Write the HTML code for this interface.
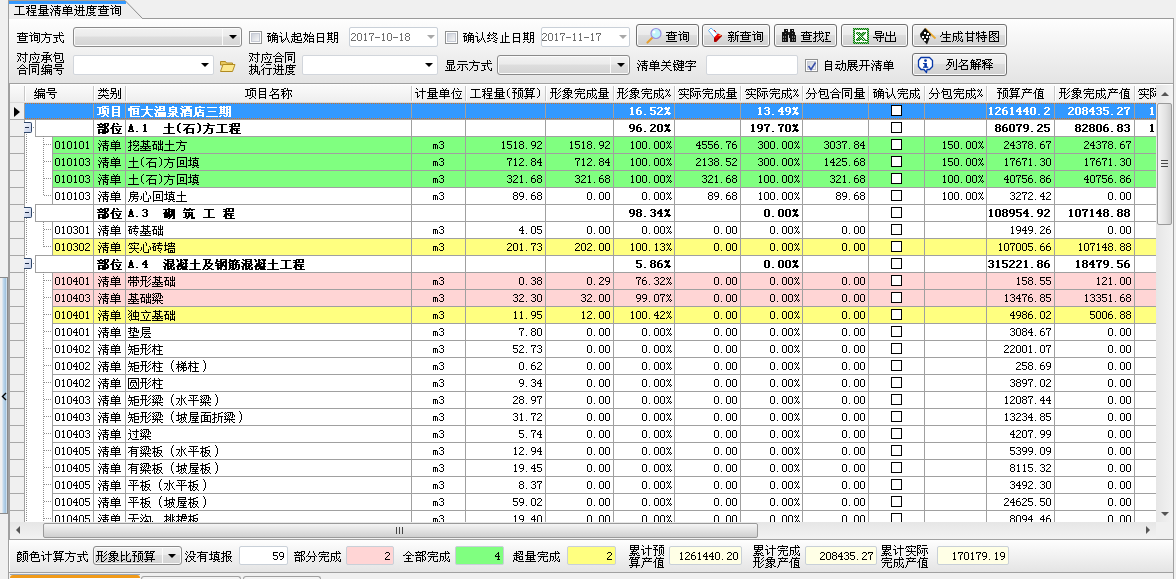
<!DOCTYPE html><html><head><meta charset="utf-8"><title>工程量清单进度查询</title><style>
*{margin:0;padding:0;box-sizing:border-box}
html,body{width:1176px;height:579px;overflow:hidden;background:#f0f0f0;font-family:"Liberation Sans",sans-serif;font-size:12px;line-height:12px;color:#000}
.tx{position:absolute;height:12px;white-space:nowrap;color:transparent;font-size:12px;line-height:12px;overflow:visible}
.tx svg{position:absolute;left:0;top:0;overflow:visible;shape-rendering:crispEdges}
.cb{position:absolute;width:13px;height:13px;border:1px solid #8e8f8f;background:#fff}
.cb:after{content:"";position:absolute;left:1px;top:1px;right:1px;bottom:1px;border:1px solid #c6cad4;background:linear-gradient(135deg,#cdd1da,#f6f6f6)}
.btn{position:absolute;border:1px solid #707070;border-radius:3px;background:linear-gradient(#f2f2f2 0%,#ebebeb 45%,#dddddd 50%,#cfcfcf 100%);box-shadow:inset 0 0 0 1px #fcfcfc}
.cmbg{position:absolute;border:1px solid #8a8a8a;border-radius:3px;background:linear-gradient(#f2f2f2 0%,#ebebeb 45%,#dddddd 50%,#d4d4d4 100%);box-shadow:inset 0 0 0 1px #fbfbfb}
.inp{position:absolute;border:1px solid #c9d0d8;border-radius:2px;background:#fff}
.arr{position:absolute;width:0;height:0;border-left:4px solid transparent;border-right:4px solid transparent;border-top:4px solid #000}
</style></head><body>
<svg width="0" height="0" style="position:absolute;left:0;top:0"><defs><path id="r5de5" d="M1 2h9v1h-9zM5 3h1v1h-1zM5 4h1v1h-1zM5 5h1v1h-1zM5 6h1v1h-1zM5 7h1v1h-1zM5 8h1v1h-1zM5 9h1v1h-1zM0 10h11v1h-11z"/><path id="r7a0b" d="M3 1h1v1h-1zM5 1h5v1h-5zM0 2h3v1h-3zM5 2h1v1h-1zM9 2h1v1h-1zM2 3h1v1h-1zM5 3h1v1h-1zM9 3h1v1h-1zM0 4h4v1h-4zM5 4h5v1h-5zM2 5h1v1h-1zM2 6h2v1h-2zM5 6h5v1h-5zM1 7h2v1h-2zM4 7h1v1h-1zM7 7h1v1h-1zM1 8h2v1h-2zM5 8h5v1h-5zM0 9h1v1h-1zM2 9h1v1h-1zM7 9h1v1h-1zM2 10h1v1h-1zM7 10h1v1h-1zM2 11h1v1h-1zM4 11h7v1h-7z"/><path id="r91cf" d="M2 1h7v1h-7zM2 2h1v1h-1zM8 2h1v1h-1zM2 3h7v1h-7zM2 4h1v1h-1zM8 4h1v1h-1zM0 5h11v1h-11zM2 6h1v1h-1zM5 6h1v1h-1zM8 6h1v1h-1zM2 7h7v1h-7zM2 8h1v1h-1zM5 8h1v1h-1zM8 8h1v1h-1zM1 9h9v1h-9zM5 10h1v1h-1zM0 11h11v1h-11z"/><path id="r6e05" d="M1 1h1v1h-1zM7 1h1v1h-1zM2 2h1v1h-1zM4 2h7v1h-7zM7 3h1v1h-1zM0 4h1v1h-1zM3 4h1v1h-1zM5 4h5v1h-5zM1 5h1v1h-1zM3 5h1v1h-1zM7 5h1v1h-1zM2 6h1v1h-1zM4 6h7v1h-7zM2 7h1v1h-1zM5 7h1v1h-1zM9 7h1v1h-1zM0 8h2v1h-2zM5 8h3v1h-3zM9 8h1v1h-1zM1 9h1v1h-1zM5 9h1v1h-1zM7 9h3v1h-3zM1 10h1v1h-1zM5 10h1v1h-1zM9 10h1v1h-1zM1 11h1v1h-1zM5 11h1v1h-1zM8 11h2v1h-2z"/><path id="r5355" d="M3 1h1v1h-1zM7 1h1v1h-1zM4 2h1v1h-1zM6 2h1v1h-1zM1 3h9v1h-9zM1 4h1v1h-1zM5 4h1v1h-1zM9 4h1v1h-1zM1 5h9v1h-9zM1 6h1v1h-1zM5 6h1v1h-1zM9 6h1v1h-1zM1 7h9v1h-9zM5 8h1v1h-1zM0 9h11v1h-11zM5 10h1v1h-1zM5 11h1v1h-1z"/><path id="r8fdb" d="M1 1h1v1h-1zM5 1h1v1h-1zM8 1h1v1h-1zM2 2h1v1h-1zM5 2h1v1h-1zM8 2h1v1h-1zM2 3h1v1h-1zM4 3h6v1h-6zM5 4h1v1h-1zM8 4h1v1h-1zM0 5h3v1h-3zM5 5h1v1h-1zM8 5h1v1h-1zM2 6h9v1h-9zM2 7h1v1h-1zM5 7h1v1h-1zM8 7h1v1h-1zM2 8h1v1h-1zM5 8h1v1h-1zM8 8h1v1h-1zM2 9h1v1h-1zM4 9h1v1h-1zM8 9h1v1h-1zM1 10h1v1h-1zM3 10h1v1h-1zM8 10h1v1h-1zM0 11h1v1h-1zM4 11h7v1h-7z"/><path id="r5ea6" d="M5 1h1v1h-1zM1 2h10v1h-10zM1 3h1v1h-1zM4 3h1v1h-1zM7 3h1v1h-1zM1 4h9v1h-9zM1 5h1v1h-1zM4 5h1v1h-1zM7 5h1v1h-1zM1 6h1v1h-1zM4 6h4v1h-4zM1 7h1v1h-1zM1 8h1v1h-1zM3 8h6v1h-6zM1 9h1v1h-1zM4 9h1v1h-1zM7 9h1v1h-1zM0 10h1v1h-1zM5 10h2v1h-2zM0 11h1v1h-1zM2 11h3v1h-3zM7 11h3v1h-3z"/><path id="r67e5" d="M5 1h1v1h-1zM0 2h11v1h-11zM3 3h1v1h-1zM5 3h1v1h-1zM7 3h1v1h-1zM2 4h1v1h-1zM5 4h1v1h-1zM8 4h1v1h-1zM0 5h11v1h-11zM2 6h1v1h-1zM8 6h1v1h-1zM2 7h7v1h-7zM2 8h1v1h-1zM8 8h1v1h-1zM2 9h7v1h-7zM0 11h11v1h-11z"/><path id="r8be2" d="M1 1h1v1h-1zM5 1h1v1h-1zM2 2h1v1h-1zM5 2h6v1h-6zM4 3h1v1h-1zM10 3h1v1h-1zM0 4h4v1h-4zM5 4h4v1h-4zM10 4h1v1h-1zM2 5h1v1h-1zM5 5h1v1h-1zM8 5h1v1h-1zM10 5h1v1h-1zM2 6h1v1h-1zM5 6h4v1h-4zM10 6h1v1h-1zM2 7h1v1h-1zM5 7h1v1h-1zM8 7h1v1h-1zM10 7h1v1h-1zM2 8h1v1h-1zM5 8h1v1h-1zM8 8h1v1h-1zM10 8h1v1h-1zM2 9h2v1h-2zM5 9h4v1h-4zM10 9h1v1h-1zM2 10h1v1h-1zM10 10h1v1h-1zM8 11h2v1h-2z"/><path id="r65b9" d="M4 1h1v1h-1zM5 2h1v1h-1zM0 3h11v1h-11zM4 4h1v1h-1zM4 5h1v1h-1zM4 6h5v1h-5zM3 7h1v1h-1zM8 7h1v1h-1zM3 8h1v1h-1zM8 8h1v1h-1zM2 9h1v1h-1zM8 9h1v1h-1zM1 10h1v1h-1zM8 10h1v1h-1zM0 11h1v1h-1zM5 11h3v1h-3z"/><path id="r5f0f" d="M6 1h1v1h-1zM8 1h1v1h-1zM6 2h1v1h-1zM9 2h1v1h-1zM6 3h1v1h-1zM0 4h11v1h-11zM6 5h1v1h-1zM1 6h4v1h-4zM6 6h1v1h-1zM3 7h1v1h-1zM6 7h1v1h-1zM3 8h1v1h-1zM7 8h1v1h-1zM3 9h1v1h-1zM7 9h1v1h-1zM10 9h1v1h-1zM3 10h2v1h-2zM8 10h1v1h-1zM10 10h1v1h-1zM0 11h3v1h-3zM9 11h2v1h-2z"/><path id="r786e" d="M6 1h1v1h-1zM0 2h4v1h-4zM6 2h4v1h-4zM2 3h1v1h-1zM5 3h1v1h-1zM8 3h1v1h-1zM1 4h1v1h-1zM4 4h7v1h-7zM0 5h4v1h-4zM5 5h1v1h-1zM7 5h1v1h-1zM10 5h1v1h-1zM1 6h1v1h-1zM3 6h1v1h-1zM5 6h6v1h-6zM1 7h1v1h-1zM3 7h1v1h-1zM5 7h1v1h-1zM7 7h1v1h-1zM10 7h1v1h-1zM1 8h1v1h-1zM3 8h1v1h-1zM5 8h6v1h-6zM1 9h3v1h-3zM5 9h1v1h-1zM7 9h1v1h-1zM10 9h1v1h-1zM1 10h1v1h-1zM5 10h1v1h-1zM7 10h1v1h-1zM10 10h1v1h-1zM4 11h1v1h-1zM9 11h2v1h-2z"/><path id="r8ba4" d="M1 1h1v1h-1zM7 1h1v1h-1zM2 2h1v1h-1zM7 2h1v1h-1zM7 3h1v1h-1zM7 4h1v1h-1zM0 5h3v1h-3zM7 5h1v1h-1zM2 6h1v1h-1zM7 6h1v1h-1zM2 7h1v1h-1zM6 7h1v1h-1zM8 7h1v1h-1zM2 8h1v1h-1zM4 8h1v1h-1zM6 8h1v1h-1zM8 8h1v1h-1zM2 9h2v1h-2zM5 9h1v1h-1zM9 9h1v1h-1zM2 10h1v1h-1zM4 10h1v1h-1zM9 10h1v1h-1zM3 11h1v1h-1zM10 11h1v1h-1z"/><path id="r8d77" d="M3 1h1v1h-1zM3 2h1v1h-1zM6 2h4v1h-4zM1 3h5v1h-5zM9 3h1v1h-1zM3 4h1v1h-1zM9 4h1v1h-1zM0 5h10v1h-10zM3 6h1v1h-1zM6 6h1v1h-1zM1 7h1v1h-1zM3 7h1v1h-1zM6 7h1v1h-1zM10 7h1v1h-1zM1 8h1v1h-1zM3 8h4v1h-4zM10 8h1v1h-1zM1 9h1v1h-1zM3 9h1v1h-1zM6 9h5v1h-5zM0 10h1v1h-1zM2 10h2v1h-2zM0 11h1v1h-1zM4 11h7v1h-7z"/><path id="r59cb" d="M2 1h1v1h-1zM7 1h1v1h-1zM2 2h1v1h-1zM7 2h1v1h-1zM0 3h5v1h-5zM6 3h1v1h-1zM9 3h1v1h-1zM2 4h1v1h-1zM4 4h1v1h-1zM6 4h1v1h-1zM10 4h1v1h-1zM2 5h1v1h-1zM4 5h7v1h-7zM1 6h1v1h-1zM4 6h1v1h-1zM1 7h1v1h-1zM3 7h1v1h-1zM6 7h5v1h-5zM2 8h2v1h-2zM6 8h1v1h-1zM10 8h1v1h-1zM2 9h1v1h-1zM4 9h1v1h-1zM6 9h1v1h-1zM10 9h1v1h-1zM1 10h1v1h-1zM4 10h1v1h-1zM6 10h5v1h-5zM0 11h1v1h-1zM6 11h1v1h-1zM10 11h1v1h-1z"/><path id="r65e5" d="M2 2h7v1h-7zM2 3h1v1h-1zM8 3h1v1h-1zM2 4h1v1h-1zM8 4h1v1h-1zM2 5h1v1h-1zM8 5h1v1h-1zM2 6h7v1h-7zM2 7h1v1h-1zM8 7h1v1h-1zM2 8h1v1h-1zM8 8h1v1h-1zM2 9h1v1h-1zM8 9h1v1h-1zM2 10h7v1h-7zM2 11h1v1h-1zM8 11h1v1h-1z"/><path id="r671f" d="M1 1h1v1h-1zM4 1h1v1h-1zM7 1h4v1h-4zM0 2h6v1h-6zM7 2h1v1h-1zM10 2h1v1h-1zM1 3h1v1h-1zM4 3h1v1h-1zM7 3h1v1h-1zM10 3h1v1h-1zM1 4h4v1h-4zM7 4h4v1h-4zM1 5h1v1h-1zM4 5h1v1h-1zM7 5h1v1h-1zM10 5h1v1h-1zM1 6h4v1h-4zM7 6h1v1h-1zM10 6h1v1h-1zM1 7h1v1h-1zM4 7h1v1h-1zM7 7h4v1h-4zM0 8h6v1h-6zM7 8h1v1h-1zM10 8h1v1h-1zM7 9h1v1h-1zM10 9h1v1h-1zM1 10h1v1h-1zM4 10h1v1h-1zM7 10h1v1h-1zM10 10h1v1h-1zM0 11h1v1h-1zM5 11h2v1h-2zM9 11h2v1h-2z"/><path id="r32" d="M1 2h3v1h-3zM0 3h1v1h-1zM4 3h1v1h-1zM4 4h1v1h-1zM3 5h1v1h-1zM2 6h1v1h-1zM1 7h1v1h-1zM0 8h1v1h-1zM0 9h5v1h-5z"/><path id="r30" d="M1 2h3v1h-3zM0 3h1v1h-1zM4 3h1v1h-1zM0 4h1v1h-1zM4 4h1v1h-1zM0 5h1v1h-1zM4 5h1v1h-1zM0 6h1v1h-1zM4 6h1v1h-1zM0 7h1v1h-1zM4 7h1v1h-1zM0 8h1v1h-1zM4 8h1v1h-1zM1 9h3v1h-3z"/><path id="r31" d="M2 2h1v1h-1zM1 3h2v1h-2zM2 4h1v1h-1zM2 5h1v1h-1zM2 6h1v1h-1zM2 7h1v1h-1zM2 8h1v1h-1zM1 9h3v1h-3z"/><path id="r37" d="M0 2h5v1h-5zM0 3h1v1h-1zM4 3h1v1h-1zM3 4h1v1h-1zM2 5h1v1h-1zM2 6h1v1h-1zM2 7h1v1h-1zM2 8h1v1h-1zM2 9h1v1h-1z"/><path id="r2d" d="M0 6h5v1h-5z"/><path id="r38" d="M1 2h3v1h-3zM0 3h1v1h-1zM4 3h1v1h-1zM0 4h1v1h-1zM4 4h1v1h-1zM1 5h3v1h-3zM0 6h1v1h-1zM4 6h1v1h-1zM0 7h1v1h-1zM4 7h1v1h-1zM0 8h1v1h-1zM4 8h1v1h-1zM1 9h3v1h-3z"/><path id="r7ec8" d="M2 1h1v1h-1zM6 1h1v1h-1zM2 2h1v1h-1zM6 2h4v1h-4zM1 3h1v1h-1zM3 3h1v1h-1zM5 3h1v1h-1zM9 3h1v1h-1zM0 4h3v1h-3zM4 4h1v1h-1zM6 4h1v1h-1zM8 4h1v1h-1zM2 5h1v1h-1zM7 5h1v1h-1zM1 6h1v1h-1zM6 6h1v1h-1zM8 6h1v1h-1zM0 7h3v1h-3zM4 7h2v1h-2zM9 7h2v1h-2zM7 8h1v1h-1zM2 9h2v1h-2zM8 9h2v1h-2zM0 10h2v1h-2zM6 10h2v1h-2zM8 11h2v1h-2z"/><path id="r6b62" d="M6 1h1v1h-1zM6 2h1v1h-1zM6 3h1v1h-1zM3 4h1v1h-1zM6 4h1v1h-1zM3 5h1v1h-1zM6 5h4v1h-4zM3 6h1v1h-1zM6 6h1v1h-1zM3 7h1v1h-1zM6 7h1v1h-1zM3 8h1v1h-1zM6 8h1v1h-1zM3 9h1v1h-1zM6 9h1v1h-1zM3 10h1v1h-1zM6 10h1v1h-1zM1 11h10v1h-10z"/><path id="r65b0" d="M3 1h1v1h-1zM9 1h2v1h-2zM0 2h6v1h-6zM7 2h2v1h-2zM1 3h1v1h-1zM5 3h1v1h-1zM7 3h1v1h-1zM2 4h1v1h-1zM4 4h1v1h-1zM7 4h1v1h-1zM0 5h6v1h-6zM7 5h4v1h-4zM3 6h1v1h-1zM7 6h1v1h-1zM9 6h1v1h-1zM0 7h6v1h-6zM7 7h1v1h-1zM9 7h1v1h-1zM3 8h1v1h-1zM7 8h1v1h-1zM9 8h1v1h-1zM1 9h1v1h-1zM3 9h1v1h-1zM5 9h1v1h-1zM7 9h1v1h-1zM9 9h1v1h-1zM0 10h1v1h-1zM3 10h1v1h-1zM6 10h1v1h-1zM9 10h1v1h-1zM2 11h2v1h-2zM5 11h1v1h-1zM9 11h1v1h-1z"/><path id="r627e" d="M2 1h1v1h-1zM6 1h1v1h-1zM8 1h1v1h-1zM2 2h1v1h-1zM6 2h1v1h-1zM9 2h1v1h-1zM0 3h11v1h-11zM2 4h1v1h-1zM6 4h1v1h-1zM2 5h1v1h-1zM4 5h1v1h-1zM6 5h1v1h-1zM9 5h1v1h-1zM2 6h2v1h-2zM6 6h1v1h-1zM9 6h1v1h-1zM1 7h2v1h-2zM6 7h1v1h-1zM8 7h1v1h-1zM0 8h1v1h-1zM2 8h1v1h-1zM7 8h1v1h-1zM2 9h1v1h-1zM6 9h2v1h-2zM10 9h1v1h-1zM2 10h1v1h-1zM5 10h1v1h-1zM8 10h1v1h-1zM10 10h1v1h-1zM0 11h3v1h-3zM4 11h1v1h-1zM9 11h2v1h-2z"/><path id="r46" d="M0 2h5v1h-5zM1 3h1v1h-1zM4 3h1v1h-1zM1 4h1v1h-1zM1 5h3v1h-3zM1 6h1v1h-1zM1 7h1v1h-1zM1 8h1v1h-1zM0 9h3v1h-3z"/><path id="r5bfc" d="M2 1h7v1h-7zM2 2h1v1h-1zM8 2h1v1h-1zM2 3h7v1h-7zM10 3h1v1h-1zM2 4h1v1h-1zM10 4h1v1h-1zM3 5h8v1h-8zM7 6h1v1h-1zM0 7h11v1h-11zM3 8h1v1h-1zM7 8h1v1h-1zM4 9h1v1h-1zM7 9h1v1h-1zM4 10h1v1h-1zM7 10h1v1h-1zM6 11h2v1h-2z"/><path id="r51fa" d="M5 1h1v1h-1zM1 2h1v1h-1zM5 2h1v1h-1zM9 2h1v1h-1zM1 3h1v1h-1zM5 3h1v1h-1zM9 3h1v1h-1zM1 4h1v1h-1zM5 4h1v1h-1zM9 4h1v1h-1zM1 5h9v1h-9zM5 6h1v1h-1zM0 7h1v1h-1zM5 7h1v1h-1zM10 7h1v1h-1zM0 8h1v1h-1zM5 8h1v1h-1zM10 8h1v1h-1zM0 9h1v1h-1zM5 9h1v1h-1zM10 9h1v1h-1zM0 10h1v1h-1zM5 10h1v1h-1zM10 10h1v1h-1zM0 11h11v1h-11z"/><path id="r751f" d="M6 1h1v1h-1zM2 2h1v1h-1zM6 2h1v1h-1zM2 3h1v1h-1zM6 3h1v1h-1zM2 4h9v1h-9zM1 5h1v1h-1zM6 5h1v1h-1zM0 6h1v1h-1zM6 6h1v1h-1zM3 7h7v1h-7zM6 8h1v1h-1zM6 9h1v1h-1zM6 10h1v1h-1zM1 11h10v1h-10z"/><path id="r6210" d="M6 1h1v1h-1zM8 1h1v1h-1zM6 2h1v1h-1zM9 2h1v1h-1zM1 3h10v1h-10zM1 4h1v1h-1zM6 4h1v1h-1zM1 5h1v1h-1zM6 5h1v1h-1zM1 6h4v1h-4zM6 6h1v1h-1zM9 6h1v1h-1zM1 7h1v1h-1zM4 7h1v1h-1zM6 7h1v1h-1zM9 7h1v1h-1zM1 8h1v1h-1zM4 8h1v1h-1zM6 8h1v1h-1zM8 8h1v1h-1zM1 9h1v1h-1zM4 9h1v1h-1zM7 9h1v1h-1zM10 9h1v1h-1zM1 10h1v1h-1zM3 10h1v1h-1zM6 10h1v1h-1zM8 10h1v1h-1zM10 10h1v1h-1zM0 11h1v1h-1zM5 11h1v1h-1zM9 11h2v1h-2z"/><path id="r7518" d="M3 1h1v1h-1zM8 1h1v1h-1zM3 2h1v1h-1zM8 2h1v1h-1zM1 3h10v1h-10zM3 4h1v1h-1zM8 4h1v1h-1zM3 5h1v1h-1zM8 5h1v1h-1zM3 6h1v1h-1zM8 6h1v1h-1zM3 7h6v1h-6zM3 8h1v1h-1zM8 8h1v1h-1zM3 9h1v1h-1zM8 9h1v1h-1zM3 10h6v1h-6zM3 11h1v1h-1zM8 11h1v1h-1z"/><path id="r7279" d="M2 1h1v1h-1zM7 1h1v1h-1zM0 2h1v1h-1zM2 2h1v1h-1zM5 2h5v1h-5zM0 3h4v1h-4zM7 3h1v1h-1zM0 4h1v1h-1zM2 4h1v1h-1zM7 4h1v1h-1zM0 5h1v1h-1zM2 5h1v1h-1zM4 5h7v1h-7zM2 6h2v1h-2zM8 6h1v1h-1zM1 7h2v1h-2zM4 7h7v1h-7zM0 8h1v1h-1zM2 8h1v1h-1zM5 8h1v1h-1zM8 8h1v1h-1zM2 9h1v1h-1zM6 9h1v1h-1zM8 9h1v1h-1zM2 10h1v1h-1zM8 10h1v1h-1zM2 11h1v1h-1zM6 11h3v1h-3z"/><path id="r56fe" d="M1 1h10v1h-10zM1 2h1v1h-1zM4 2h1v1h-1zM10 2h1v1h-1zM1 3h1v1h-1zM4 3h5v1h-5zM10 3h1v1h-1zM1 4h1v1h-1zM3 4h2v1h-2zM7 4h1v1h-1zM10 4h1v1h-1zM1 5h2v1h-2zM5 5h2v1h-2zM10 5h1v1h-1zM1 6h1v1h-1zM4 6h1v1h-1zM7 6h1v1h-1zM10 6h1v1h-1zM1 7h3v1h-3zM5 7h1v1h-1zM8 7h3v1h-3zM1 8h1v1h-1zM6 8h1v1h-1zM10 8h1v1h-1zM1 9h1v1h-1zM5 9h1v1h-1zM10 9h1v1h-1zM1 10h1v1h-1zM6 10h1v1h-1zM10 10h1v1h-1zM1 11h10v1h-10z"/><path id="r5bf9" d="M8 1h1v1h-1zM0 2h4v1h-4zM8 2h1v1h-1zM3 3h8v1h-8zM0 4h1v1h-1zM3 4h1v1h-1zM8 4h1v1h-1zM1 5h1v1h-1zM3 5h1v1h-1zM8 5h1v1h-1zM2 6h1v1h-1zM5 6h1v1h-1zM8 6h1v1h-1zM2 7h1v1h-1zM6 7h1v1h-1zM8 7h1v1h-1zM1 8h1v1h-1zM3 8h1v1h-1zM8 8h1v1h-1zM1 9h1v1h-1zM3 9h1v1h-1zM8 9h1v1h-1zM0 10h1v1h-1zM6 10h1v1h-1zM8 10h1v1h-1zM7 11h1v1h-1z"/><path id="r5e94" d="M5 1h1v1h-1zM6 2h1v1h-1zM1 3h10v1h-10zM1 4h1v1h-1zM1 5h1v1h-1zM5 5h1v1h-1zM9 5h1v1h-1zM1 6h1v1h-1zM3 6h1v1h-1zM6 6h1v1h-1zM9 6h1v1h-1zM1 7h1v1h-1zM4 7h1v1h-1zM6 7h1v1h-1zM9 7h1v1h-1zM1 8h1v1h-1zM4 8h1v1h-1zM8 8h1v1h-1zM1 9h1v1h-1zM8 9h1v1h-1zM0 10h1v1h-1zM7 10h1v1h-1zM0 11h1v1h-1zM3 11h8v1h-8z"/><path id="r627f" d="M2 1h6v1h-6zM6 2h1v1h-1zM5 3h1v1h-1zM10 3h1v1h-1zM0 4h10v1h-10zM2 5h1v1h-1zM5 5h1v1h-1zM8 5h1v1h-1zM2 6h7v1h-7zM2 7h1v1h-1zM5 7h1v1h-1zM9 7h1v1h-1zM1 8h9v1h-9zM1 9h1v1h-1zM5 9h1v1h-1zM10 9h1v1h-1zM0 10h1v1h-1zM5 10h1v1h-1zM10 10h1v1h-1zM3 11h3v1h-3z"/><path id="r5305" d="M2 1h1v1h-1zM2 2h8v1h-8zM1 3h1v1h-1zM9 3h1v1h-1zM1 4h6v1h-6zM9 4h1v1h-1zM0 5h1v1h-1zM2 5h1v1h-1zM6 5h1v1h-1zM9 5h1v1h-1zM2 6h1v1h-1zM6 6h1v1h-1zM9 6h1v1h-1zM2 7h5v1h-5zM9 7h1v1h-1zM2 8h1v1h-1zM9 8h1v1h-1zM2 9h1v1h-1zM7 9h2v1h-2zM10 9h1v1h-1zM2 10h1v1h-1zM10 10h1v1h-1zM3 11h8v1h-8z"/><path id="r5408" d="M5 1h1v1h-1zM4 2h1v1h-1zM6 2h1v1h-1zM3 3h1v1h-1zM7 3h1v1h-1zM2 4h1v1h-1zM8 4h1v1h-1zM0 5h2v1h-2zM3 5h5v1h-5zM9 5h2v1h-2zM2 7h7v1h-7zM2 8h1v1h-1zM8 8h1v1h-1zM2 9h1v1h-1zM8 9h1v1h-1zM2 10h7v1h-7zM2 11h1v1h-1zM8 11h1v1h-1z"/><path id="r540c" d="M0 1h10v1h-10zM0 2h1v1h-1zM9 2h1v1h-1zM0 3h1v1h-1zM2 3h6v1h-6zM9 3h1v1h-1zM0 4h1v1h-1zM9 4h1v1h-1zM0 5h1v1h-1zM3 5h4v1h-4zM9 5h1v1h-1zM0 6h1v1h-1zM3 6h1v1h-1zM6 6h1v1h-1zM9 6h1v1h-1zM0 7h1v1h-1zM3 7h1v1h-1zM6 7h1v1h-1zM9 7h1v1h-1zM0 8h1v1h-1zM3 8h4v1h-4zM9 8h1v1h-1zM0 9h1v1h-1zM3 9h1v1h-1zM6 9h1v1h-1zM9 9h1v1h-1zM0 10h1v1h-1zM9 10h1v1h-1zM0 11h1v1h-1zM8 11h2v1h-2z"/><path id="r7f16" d="M2 1h1v1h-1zM7 1h1v1h-1zM2 2h1v1h-1zM4 2h7v1h-7zM1 3h1v1h-1zM4 3h1v1h-1zM10 3h1v1h-1zM1 4h1v1h-1zM3 4h8v1h-8zM0 5h3v1h-3zM4 5h1v1h-1zM2 6h1v1h-1zM4 6h7v1h-7zM1 7h1v1h-1zM4 7h1v1h-1zM6 7h1v1h-1zM8 7h1v1h-1zM10 7h1v1h-1zM0 8h11v1h-11zM4 9h1v1h-1zM6 9h1v1h-1zM8 9h1v1h-1zM10 9h1v1h-1zM2 10h3v1h-3zM6 10h1v1h-1zM8 10h1v1h-1zM10 10h1v1h-1zM0 11h2v1h-2zM4 11h1v1h-1zM9 11h2v1h-2z"/><path id="r53f7" d="M2 1h7v1h-7zM2 2h1v1h-1zM8 2h1v1h-1zM2 3h7v1h-7zM0 5h11v1h-11zM4 6h1v1h-1zM3 7h6v1h-6zM8 8h1v1h-1zM8 9h1v1h-1zM5 10h1v1h-1zM8 10h1v1h-1zM6 11h2v1h-2z"/><path id="r6267" d="M2 1h1v1h-1zM6 1h1v1h-1zM2 2h1v1h-1zM6 2h1v1h-1zM0 3h9v1h-9zM2 4h1v1h-1zM6 4h1v1h-1zM8 4h1v1h-1zM2 5h1v1h-1zM4 5h1v1h-1zM6 5h1v1h-1zM8 5h1v1h-1zM2 6h2v1h-2zM5 6h2v1h-2zM8 6h1v1h-1zM1 7h2v1h-2zM6 7h1v1h-1zM8 7h1v1h-1zM0 8h1v1h-1zM2 8h1v1h-1zM5 8h4v1h-4zM10 8h1v1h-1zM2 9h1v1h-1zM5 9h1v1h-1zM8 9h1v1h-1zM10 9h1v1h-1zM0 10h1v1h-1zM2 10h1v1h-1zM4 10h1v1h-1zM8 10h1v1h-1zM10 10h1v1h-1zM1 11h1v1h-1zM3 11h1v1h-1zM9 11h2v1h-2z"/><path id="r884c" d="M2 1h1v1h-1zM5 1h5v1h-5zM1 2h1v1h-1zM0 3h1v1h-1zM3 4h1v1h-1zM2 5h1v1h-1zM4 5h7v1h-7zM1 6h2v1h-2zM8 6h1v1h-1zM0 7h1v1h-1zM2 7h1v1h-1zM8 7h1v1h-1zM2 8h1v1h-1zM8 8h1v1h-1zM2 9h1v1h-1zM8 9h1v1h-1zM2 10h1v1h-1zM8 10h1v1h-1zM2 11h1v1h-1zM6 11h3v1h-3z"/><path id="r663e" d="M2 1h7v1h-7zM2 2h1v1h-1zM8 2h1v1h-1zM2 3h7v1h-7zM2 4h1v1h-1zM8 4h1v1h-1zM2 5h7v1h-7zM4 6h1v1h-1zM6 6h1v1h-1zM1 7h1v1h-1zM4 7h1v1h-1zM6 7h1v1h-1zM9 7h1v1h-1zM2 8h1v1h-1zM4 8h1v1h-1zM6 8h1v1h-1zM9 8h1v1h-1zM2 9h1v1h-1zM4 9h1v1h-1zM6 9h1v1h-1zM8 9h1v1h-1zM4 10h1v1h-1zM6 10h1v1h-1zM0 11h11v1h-11z"/><path id="r793a" d="M1 2h9v1h-9zM0 5h11v1h-11zM5 6h1v1h-1zM2 7h1v1h-1zM5 7h1v1h-1zM8 7h1v1h-1zM2 8h1v1h-1zM5 8h1v1h-1zM9 8h1v1h-1zM1 9h1v1h-1zM5 9h1v1h-1zM10 9h1v1h-1zM0 10h1v1h-1zM5 10h1v1h-1zM10 10h1v1h-1zM4 11h2v1h-2z"/><path id="r5173" d="M2 1h1v1h-1zM8 1h1v1h-1zM3 2h1v1h-1zM7 2h1v1h-1zM1 3h9v1h-9zM5 4h1v1h-1zM5 5h1v1h-1zM0 6h10v1h-10zM5 7h1v1h-1zM4 8h1v1h-1zM6 8h1v1h-1zM3 9h1v1h-1zM7 9h1v1h-1zM2 10h1v1h-1zM8 10h1v1h-1zM0 11h2v1h-2zM9 11h2v1h-2z"/><path id="r952e" d="M1 1h1v1h-1zM3 1h3v1h-3zM8 1h1v1h-1zM1 2h1v1h-1zM5 2h6v1h-6zM1 3h2v1h-2zM4 3h1v1h-1zM8 3h1v1h-1zM10 3h1v1h-1zM0 4h1v1h-1zM4 4h1v1h-1zM6 4h5v1h-5zM0 5h6v1h-6zM8 5h1v1h-1zM10 5h1v1h-1zM1 6h1v1h-1zM5 6h6v1h-6zM0 7h3v1h-3zM5 7h1v1h-1zM8 7h1v1h-1zM1 8h1v1h-1zM3 8h1v1h-1zM5 8h6v1h-6zM1 9h1v1h-1zM4 9h1v1h-1zM8 9h1v1h-1zM1 10h2v1h-2zM4 10h2v1h-2zM8 10h1v1h-1zM1 11h1v1h-1zM3 11h1v1h-1zM6 11h5v1h-5z"/><path id="r5b57" d="M5 1h1v1h-1zM1 2h10v1h-10zM1 3h1v1h-1zM10 3h1v1h-1zM0 4h1v1h-1zM3 4h5v1h-5zM9 4h1v1h-1zM6 5h1v1h-1zM5 6h1v1h-1zM0 7h11v1h-11zM5 8h1v1h-1zM5 9h1v1h-1zM5 10h1v1h-1zM3 11h3v1h-3z"/><path id="r81ea" d="M4 1h1v1h-1zM2 2h7v1h-7zM2 3h1v1h-1zM8 3h1v1h-1zM2 4h1v1h-1zM8 4h1v1h-1zM2 5h7v1h-7zM2 6h1v1h-1zM8 6h1v1h-1zM2 7h7v1h-7zM2 8h1v1h-1zM8 8h1v1h-1zM2 9h1v1h-1zM8 9h1v1h-1zM2 10h7v1h-7zM2 11h1v1h-1zM8 11h1v1h-1z"/><path id="r52a8" d="M7 1h1v1h-1zM1 2h4v1h-4zM7 2h1v1h-1zM7 3h1v1h-1zM6 4h5v1h-5zM0 5h6v1h-6zM7 5h1v1h-1zM10 5h1v1h-1zM2 6h1v1h-1zM7 6h1v1h-1zM10 6h1v1h-1zM2 7h1v1h-1zM7 7h1v1h-1zM10 7h1v1h-1zM1 8h1v1h-1zM4 8h1v1h-1zM7 8h1v1h-1zM10 8h1v1h-1zM0 9h5v1h-5zM6 9h1v1h-1zM10 9h1v1h-1zM4 10h1v1h-1zM6 10h1v1h-1zM10 10h1v1h-1zM5 11h1v1h-1zM8 11h2v1h-2z"/><path id="r5c55" d="M1 1h9v1h-9zM1 2h1v1h-1zM9 2h1v1h-1zM1 3h9v1h-9zM1 4h1v1h-1zM4 4h1v1h-1zM7 4h1v1h-1zM1 5h9v1h-9zM1 6h1v1h-1zM4 6h1v1h-1zM7 6h1v1h-1zM1 7h10v1h-10zM1 8h1v1h-1zM3 8h1v1h-1zM6 8h1v1h-1zM9 8h1v1h-1zM1 9h1v1h-1zM3 9h1v1h-1zM7 9h2v1h-2zM0 10h1v1h-1zM3 10h1v1h-1zM5 10h1v1h-1zM8 10h1v1h-1zM0 11h1v1h-1zM3 11h2v1h-2zM9 11h2v1h-2z"/><path id="r5f00" d="M1 1h9v1h-9zM3 2h1v1h-1zM7 2h1v1h-1zM3 3h1v1h-1zM7 3h1v1h-1zM3 4h1v1h-1zM7 4h1v1h-1zM3 5h1v1h-1zM7 5h1v1h-1zM0 6h11v1h-11zM3 7h1v1h-1zM7 7h1v1h-1zM2 8h1v1h-1zM7 8h1v1h-1zM2 9h1v1h-1zM7 9h1v1h-1zM1 10h1v1h-1zM7 10h1v1h-1zM0 11h1v1h-1zM7 11h1v1h-1z"/><path id="r5217" d="M1 1h6v1h-6zM10 1h1v1h-1zM3 2h1v1h-1zM10 2h1v1h-1zM3 3h1v1h-1zM7 3h1v1h-1zM10 3h1v1h-1zM2 4h4v1h-4zM7 4h1v1h-1zM10 4h1v1h-1zM2 5h1v1h-1zM5 5h1v1h-1zM7 5h1v1h-1zM10 5h1v1h-1zM1 6h2v1h-2zM5 6h1v1h-1zM7 6h1v1h-1zM10 6h1v1h-1zM0 7h1v1h-1zM3 7h2v1h-2zM7 7h1v1h-1zM10 7h1v1h-1zM4 8h1v1h-1zM7 8h1v1h-1zM10 8h1v1h-1zM3 9h1v1h-1zM10 9h1v1h-1zM2 10h1v1h-1zM10 10h1v1h-1zM0 11h2v1h-2zM8 11h3v1h-3z"/><path id="r540d" d="M3 1h1v1h-1zM3 2h7v1h-7zM3 3h1v1h-1zM8 3h1v1h-1zM2 4h1v1h-1zM4 4h1v1h-1zM7 4h1v1h-1zM1 5h1v1h-1zM5 5h2v1h-2zM5 6h1v1h-1zM3 7h7v1h-7zM0 8h4v1h-4zM9 8h1v1h-1zM3 9h1v1h-1zM9 9h1v1h-1zM3 10h1v1h-1zM9 10h1v1h-1zM3 11h7v1h-7z"/><path id="r89e3" d="M2 1h1v1h-1zM6 1h5v1h-5zM1 2h4v1h-4zM7 2h1v1h-1zM10 2h1v1h-1zM1 3h1v1h-1zM3 3h1v1h-1zM6 3h1v1h-1zM10 3h1v1h-1zM0 4h6v1h-6zM8 4h2v1h-2zM1 5h1v1h-1zM3 5h1v1h-1zM5 5h2v1h-2zM8 5h1v1h-1zM1 6h10v1h-10zM1 7h1v1h-1zM3 7h1v1h-1zM5 7h1v1h-1zM8 7h1v1h-1zM1 8h10v1h-10zM1 9h1v1h-1zM3 9h1v1h-1zM5 9h1v1h-1zM8 9h1v1h-1zM1 10h1v1h-1zM3 10h1v1h-1zM5 10h1v1h-1zM8 10h1v1h-1zM0 11h1v1h-1zM4 11h2v1h-2zM8 11h1v1h-1z"/><path id="r91ca" d="M3 1h7v1h-7zM0 2h3v1h-3zM6 2h1v1h-1zM8 2h1v1h-1zM0 3h1v1h-1zM2 3h1v1h-1zM4 3h1v1h-1zM7 3h1v1h-1zM1 4h3v1h-3zM6 4h1v1h-1zM8 4h1v1h-1zM0 5h6v1h-6zM7 5h1v1h-1zM9 5h2v1h-2zM2 6h2v1h-2zM7 6h1v1h-1zM1 7h2v1h-2zM4 7h6v1h-6zM0 8h1v1h-1zM2 8h1v1h-1zM7 8h1v1h-1zM0 9h1v1h-1zM2 9h1v1h-1zM4 9h7v1h-7zM2 10h1v1h-1zM7 10h1v1h-1zM2 11h1v1h-1zM7 11h1v1h-1z"/><path id="r7c7b" d="M2 1h1v1h-1zM5 1h1v1h-1zM8 1h1v1h-1zM3 2h1v1h-1zM5 2h1v1h-1zM7 2h1v1h-1zM0 3h11v1h-11zM3 4h1v1h-1zM5 4h1v1h-1zM7 4h1v1h-1zM2 5h1v1h-1zM5 5h1v1h-1zM8 5h1v1h-1zM1 6h1v1h-1zM9 6h1v1h-1zM5 7h1v1h-1zM0 8h11v1h-11zM4 9h1v1h-1zM6 9h1v1h-1zM3 10h1v1h-1zM7 10h1v1h-1zM0 11h3v1h-3zM8 11h3v1h-3z"/><path id="r522b" d="M1 1h5v1h-5zM10 1h1v1h-1zM1 2h1v1h-1zM5 2h1v1h-1zM10 2h1v1h-1zM1 3h1v1h-1zM5 3h1v1h-1zM8 3h1v1h-1zM10 3h1v1h-1zM1 4h5v1h-5zM8 4h1v1h-1zM10 4h1v1h-1zM3 5h1v1h-1zM8 5h1v1h-1zM10 5h1v1h-1zM0 6h7v1h-7zM8 6h1v1h-1zM10 6h1v1h-1zM3 7h1v1h-1zM6 7h1v1h-1zM8 7h1v1h-1zM10 7h1v1h-1zM2 8h1v1h-1zM6 8h1v1h-1zM8 8h1v1h-1zM10 8h1v1h-1zM2 9h1v1h-1zM6 9h1v1h-1zM10 9h1v1h-1zM1 10h1v1h-1zM6 10h1v1h-1zM10 10h1v1h-1zM0 11h1v1h-1zM4 11h2v1h-2zM8 11h3v1h-3z"/><path id="r9879" d="M5 1h6v1h-6zM0 2h5v1h-5zM7 2h1v1h-1zM2 3h1v1h-1zM5 3h6v1h-6zM2 4h1v1h-1zM5 4h1v1h-1zM10 4h1v1h-1zM2 5h1v1h-1zM5 5h1v1h-1zM7 5h1v1h-1zM10 5h1v1h-1zM2 6h1v1h-1zM5 6h1v1h-1zM7 6h1v1h-1zM10 6h1v1h-1zM2 7h1v1h-1zM5 7h1v1h-1zM7 7h1v1h-1zM10 7h1v1h-1zM2 8h4v1h-4zM7 8h1v1h-1zM10 8h1v1h-1zM0 9h2v1h-2zM7 9h2v1h-2zM6 10h1v1h-1zM9 10h1v1h-1zM4 11h2v1h-2zM10 11h1v1h-1z"/><path id="r76ee" d="M2 1h7v1h-7zM2 2h1v1h-1zM8 2h1v1h-1zM2 3h1v1h-1zM8 3h1v1h-1zM2 4h7v1h-7zM2 5h1v1h-1zM8 5h1v1h-1zM2 6h1v1h-1zM8 6h1v1h-1zM2 7h7v1h-7zM2 8h1v1h-1zM8 8h1v1h-1zM2 9h1v1h-1zM8 9h1v1h-1zM2 10h7v1h-7zM2 11h1v1h-1zM8 11h1v1h-1z"/><path id="r79f0" d="M3 1h2v1h-2zM6 1h1v1h-1zM0 2h3v1h-3zM6 2h1v1h-1zM2 3h1v1h-1zM5 3h6v1h-6zM0 4h5v1h-5zM7 4h1v1h-1zM10 4h1v1h-1zM2 5h1v1h-1zM7 5h1v1h-1zM1 6h3v1h-3zM5 6h1v1h-1zM7 6h1v1h-1zM9 6h1v1h-1zM1 7h2v1h-2zM5 7h1v1h-1zM7 7h1v1h-1zM9 7h1v1h-1zM0 8h1v1h-1zM2 8h1v1h-1zM4 8h1v1h-1zM7 8h1v1h-1zM10 8h1v1h-1zM2 9h2v1h-2zM7 9h1v1h-1zM10 9h1v1h-1zM2 10h1v1h-1zM7 10h1v1h-1zM2 11h1v1h-1zM6 11h2v1h-2z"/><path id="r8ba1" d="M1 1h1v1h-1zM7 1h1v1h-1zM2 2h1v1h-1zM7 2h1v1h-1zM7 3h1v1h-1zM4 4h7v1h-7zM0 5h3v1h-3zM7 5h1v1h-1zM2 6h1v1h-1zM7 6h1v1h-1zM2 7h1v1h-1zM7 7h1v1h-1zM2 8h1v1h-1zM4 8h1v1h-1zM7 8h1v1h-1zM2 9h2v1h-2zM7 9h1v1h-1zM2 10h1v1h-1zM7 10h1v1h-1zM7 11h1v1h-1z"/><path id="r4f4d" d="M3 1h1v1h-1zM6 1h1v1h-1zM3 2h1v1h-1zM7 2h1v1h-1zM2 3h1v1h-1zM2 4h1v1h-1zM4 4h7v1h-7zM1 5h2v1h-2zM0 6h1v1h-1zM2 6h1v1h-1zM5 6h1v1h-1zM9 6h1v1h-1zM2 7h1v1h-1zM6 7h1v1h-1zM9 7h1v1h-1zM2 8h1v1h-1zM6 8h1v1h-1zM8 8h1v1h-1zM2 9h1v1h-1zM8 9h1v1h-1zM2 10h1v1h-1zM7 10h1v1h-1zM2 11h1v1h-1zM4 11h7v1h-7z"/><path id="r28" d="M3 1h1v1h-1zM2 2h1v1h-1zM1 3h1v1h-1zM1 4h1v1h-1zM1 5h1v1h-1zM1 6h1v1h-1zM1 7h1v1h-1zM1 8h1v1h-1zM2 9h1v1h-1zM3 10h1v1h-1z"/><path id="r9884" d="M0 1h5v1h-5zM6 1h5v1h-5zM3 2h1v1h-1zM8 2h1v1h-1zM1 3h2v1h-2zM6 3h5v1h-5zM2 4h1v1h-1zM6 4h1v1h-1zM10 4h1v1h-1zM0 5h5v1h-5zM6 5h1v1h-1zM8 5h1v1h-1zM10 5h1v1h-1zM2 6h1v1h-1zM4 6h1v1h-1zM6 6h1v1h-1zM8 6h1v1h-1zM10 6h1v1h-1zM2 7h1v1h-1zM6 7h1v1h-1zM8 7h1v1h-1zM10 7h1v1h-1zM2 8h1v1h-1zM6 8h1v1h-1zM8 8h1v1h-1zM10 8h1v1h-1zM2 9h1v1h-1zM6 9h1v1h-1zM8 9h1v1h-1zM10 9h1v1h-1zM2 10h1v1h-1zM7 10h1v1h-1zM9 10h1v1h-1zM1 11h2v1h-2zM5 11h2v1h-2zM10 11h1v1h-1z"/><path id="r7b97" d="M1 1h4v1h-4zM6 1h5v1h-5zM1 2h1v1h-1zM3 2h1v1h-1zM6 2h1v1h-1zM9 2h1v1h-1zM0 3h1v1h-1zM2 3h7v1h-7zM2 4h1v1h-1zM8 4h1v1h-1zM2 5h7v1h-7zM2 6h1v1h-1zM8 6h1v1h-1zM2 7h7v1h-7zM3 8h1v1h-1zM7 8h1v1h-1zM0 9h11v1h-11zM3 10h1v1h-1zM7 10h1v1h-1zM1 11h2v1h-2zM7 11h1v1h-1z"/><path id="r29" d="M1 1h1v1h-1zM2 2h1v1h-1zM3 3h1v1h-1zM3 4h1v1h-1zM3 5h1v1h-1zM3 6h1v1h-1zM3 7h1v1h-1zM3 8h1v1h-1zM2 9h1v1h-1zM1 10h1v1h-1z"/><path id="r5f62" d="M1 1h6v1h-6zM10 1h1v1h-1zM2 2h1v1h-1zM5 2h1v1h-1zM9 2h1v1h-1zM2 3h1v1h-1zM5 3h1v1h-1zM8 3h1v1h-1zM2 4h1v1h-1zM5 4h1v1h-1zM10 4h1v1h-1zM0 5h7v1h-7zM9 5h1v1h-1zM2 6h1v1h-1zM5 6h1v1h-1zM8 6h1v1h-1zM2 7h1v1h-1zM5 7h1v1h-1zM7 7h1v1h-1zM2 8h1v1h-1zM5 8h1v1h-1zM10 8h1v1h-1zM2 9h1v1h-1zM5 9h1v1h-1zM9 9h1v1h-1zM1 10h1v1h-1zM5 10h1v1h-1zM8 10h1v1h-1zM0 11h1v1h-1zM5 11h3v1h-3z"/><path id="r8c61" d="M3 1h5v1h-5zM2 2h1v1h-1zM6 2h1v1h-1zM1 3h9v1h-9zM0 4h1v1h-1zM2 4h1v1h-1zM5 4h1v1h-1zM9 4h1v1h-1zM2 5h8v1h-8zM3 6h1v1h-1zM5 6h1v1h-1zM9 6h1v1h-1zM1 7h2v1h-2zM4 7h3v1h-3zM8 7h1v1h-1zM3 8h1v1h-1zM6 8h2v1h-2zM1 9h2v1h-2zM5 9h2v1h-2zM8 9h1v1h-1zM3 10h2v1h-2zM6 10h1v1h-1zM9 10h2v1h-2zM0 11h3v1h-3zM5 11h2v1h-2z"/><path id="r5b8c" d="M5 1h1v1h-1zM1 2h10v1h-10zM1 3h1v1h-1zM10 3h1v1h-1zM0 4h1v1h-1zM3 4h5v1h-5zM9 4h1v1h-1zM1 6h10v1h-10zM4 7h1v1h-1zM6 7h1v1h-1zM3 8h1v1h-1zM6 8h1v1h-1zM3 9h1v1h-1zM6 9h1v1h-1zM10 9h1v1h-1zM2 10h1v1h-1zM6 10h1v1h-1zM10 10h1v1h-1zM1 11h1v1h-1zM7 11h4v1h-4z"/><path id="r25" d="M1 2h1v1h-1zM4 2h1v1h-1zM0 3h1v1h-1zM2 3h1v1h-1zM4 3h1v1h-1zM1 4h1v1h-1zM3 4h1v1h-1zM3 5h1v1h-1zM2 6h1v1h-1zM2 7h1v1h-1zM4 7h1v1h-1zM1 8h1v1h-1zM3 8h1v1h-1zM5 8h1v1h-1zM0 9h1v1h-1zM4 9h1v1h-1z"/><path id="r5b9e" d="M6 1h1v1h-1zM1 2h10v1h-10zM1 3h1v1h-1zM3 3h1v1h-1zM10 3h1v1h-1zM0 4h1v1h-1zM4 4h1v1h-1zM6 4h1v1h-1zM9 4h1v1h-1zM2 5h1v1h-1zM6 5h1v1h-1zM3 6h1v1h-1zM6 6h1v1h-1zM1 7h10v1h-10zM6 8h1v1h-1zM5 9h1v1h-1zM7 9h1v1h-1zM4 10h1v1h-1zM8 10h1v1h-1zM1 11h3v1h-3zM9 11h2v1h-2z"/><path id="r9645" d="M0 1h4v1h-4zM5 1h5v1h-5zM0 2h1v1h-1zM3 2h1v1h-1zM0 3h1v1h-1zM2 3h1v1h-1zM0 4h2v1h-2zM4 4h7v1h-7zM0 5h1v1h-1zM2 5h1v1h-1zM7 5h1v1h-1zM0 6h1v1h-1zM3 6h1v1h-1zM5 6h1v1h-1zM7 6h1v1h-1zM9 6h1v1h-1zM0 7h1v1h-1zM3 7h1v1h-1zM5 7h1v1h-1zM7 7h1v1h-1zM9 7h1v1h-1zM0 8h2v1h-2zM3 8h1v1h-1zM5 8h1v1h-1zM7 8h1v1h-1zM10 8h1v1h-1zM0 9h1v1h-1zM2 9h1v1h-1zM4 9h1v1h-1zM7 9h1v1h-1zM10 9h1v1h-1zM0 10h1v1h-1zM7 10h1v1h-1zM0 11h1v1h-1zM6 11h2v1h-2z"/><path id="r5206" d="M3 1h1v1h-1zM7 1h1v1h-1zM3 2h1v1h-1zM7 2h1v1h-1zM2 3h1v1h-1zM8 3h1v1h-1zM2 4h1v1h-1zM8 4h1v1h-1zM1 5h1v1h-1zM9 5h1v1h-1zM0 6h1v1h-1zM2 6h7v1h-7zM10 6h1v1h-1zM4 7h1v1h-1zM8 7h1v1h-1zM4 8h1v1h-1zM8 8h1v1h-1zM3 9h1v1h-1zM8 9h1v1h-1zM2 10h1v1h-1zM8 10h1v1h-1zM0 11h2v1h-2zM6 11h2v1h-2z"/><path id="r4ea7" d="M5 1h1v1h-1zM1 2h10v1h-10zM3 3h1v1h-1zM8 3h1v1h-1zM4 4h1v1h-1zM7 4h1v1h-1zM2 5h9v1h-9zM2 6h1v1h-1zM2 7h1v1h-1zM2 8h1v1h-1zM1 9h1v1h-1zM1 10h1v1h-1zM0 11h1v1h-1z"/><path id="r503c" d="M3 1h1v1h-1zM7 1h1v1h-1zM3 2h8v1h-8zM2 3h1v1h-1zM6 3h1v1h-1zM2 4h1v1h-1zM5 4h5v1h-5zM1 5h2v1h-2zM5 5h1v1h-1zM9 5h1v1h-1zM0 6h1v1h-1zM2 6h1v1h-1zM5 6h5v1h-5zM2 7h1v1h-1zM5 7h1v1h-1zM9 7h1v1h-1zM2 8h1v1h-1zM5 8h3v1h-3zM9 8h1v1h-1zM2 9h1v1h-1zM5 9h1v1h-1zM7 9h3v1h-3zM2 10h1v1h-1zM5 10h1v1h-1zM9 10h1v1h-1zM2 11h1v1h-1zM4 11h7v1h-7z"/><path id="b9879" d="M5 1h7v1h-7zM0 2h6v1h-6zM7 2h2v1h-2zM2 3h2v1h-2zM5 3h7v1h-7zM2 4h2v1h-2zM5 4h2v1h-2zM10 4h2v1h-2zM2 5h2v1h-2zM5 5h4v1h-4zM10 5h2v1h-2zM2 6h2v1h-2zM5 6h4v1h-4zM10 6h2v1h-2zM2 7h2v1h-2zM5 7h4v1h-4zM10 7h2v1h-2zM2 8h7v1h-7zM10 8h2v1h-2zM0 9h3v1h-3zM7 9h3v1h-3zM6 10h2v1h-2zM9 10h2v1h-2zM4 11h3v1h-3zM10 11h2v1h-2z"/><path id="b76ee" d="M2 1h8v1h-8zM2 2h2v1h-2zM8 2h2v1h-2zM2 3h2v1h-2zM8 3h2v1h-2zM2 4h8v1h-8zM2 5h2v1h-2zM8 5h2v1h-2zM2 6h2v1h-2zM8 6h2v1h-2zM2 7h8v1h-8zM2 8h2v1h-2zM8 8h2v1h-2zM2 9h2v1h-2zM8 9h2v1h-2zM2 10h8v1h-8zM2 11h2v1h-2zM8 11h2v1h-2z"/><path id="b6052" d="M2 1h10v1h-10zM2 2h2v1h-2zM0 3h11v1h-11zM0 4h7v1h-7zM9 4h2v1h-2zM0 5h4v1h-4zM5 5h2v1h-2zM9 5h2v1h-2zM2 6h2v1h-2zM5 6h6v1h-6zM2 7h2v1h-2zM5 7h2v1h-2zM9 7h2v1h-2zM2 8h2v1h-2zM5 8h6v1h-6zM2 9h2v1h-2zM5 9h2v1h-2zM9 9h2v1h-2zM2 10h2v1h-2zM2 11h10v1h-10z"/><path id="b5927" d="M5 1h2v1h-2zM5 2h2v1h-2zM5 3h2v1h-2zM0 4h12v1h-12zM5 5h2v1h-2zM5 6h2v1h-2zM4 7h4v1h-4zM4 8h4v1h-4zM3 9h2v1h-2zM7 9h2v1h-2zM2 10h2v1h-2zM8 10h2v1h-2zM0 11h3v1h-3zM9 11h3v1h-3z"/><path id="b6e29" d="M1 1h2v1h-2zM5 1h6v1h-6zM2 2h2v1h-2zM5 2h2v1h-2zM9 2h2v1h-2zM5 3h6v1h-6zM0 4h2v1h-2zM3 4h4v1h-4zM9 4h2v1h-2zM1 5h10v1h-10zM2 6h2v1h-2zM2 7h10v1h-10zM0 8h3v1h-3zM4 8h8v1h-8zM1 9h2v1h-2zM4 9h8v1h-8zM1 10h2v1h-2zM4 10h8v1h-8zM1 11h11v1h-11z"/><path id="b6cc9" d="M5 1h2v1h-2zM2 2h8v1h-8zM2 3h2v1h-2zM8 3h2v1h-2zM2 4h8v1h-8zM2 5h2v1h-2zM8 5h2v1h-2zM2 6h8v1h-8zM5 7h2v1h-2zM8 7h3v1h-3zM1 8h8v1h-8zM3 9h6v1h-6zM2 10h2v1h-2zM5 10h2v1h-2zM8 10h2v1h-2zM0 11h3v1h-3zM4 11h3v1h-3zM9 11h3v1h-3z"/><path id="b9152" d="M1 1h2v1h-2zM4 1h8v1h-8zM2 2h2v1h-2zM6 2h4v1h-4zM0 3h2v1h-2zM6 3h4v1h-4zM1 4h11v1h-11zM2 5h10v1h-10zM2 6h5v1h-5zM8 6h4v1h-4zM2 7h4v1h-4zM10 7h2v1h-2zM0 8h3v1h-3zM4 8h8v1h-8zM1 9h2v1h-2zM4 9h2v1h-2zM10 9h2v1h-2zM1 10h2v1h-2zM4 10h8v1h-8zM1 11h2v1h-2zM4 11h2v1h-2zM10 11h2v1h-2z"/><path id="b5e97" d="M6 1h2v1h-2zM2 2h10v1h-10zM2 3h2v1h-2zM2 4h2v1h-2zM6 4h2v1h-2zM2 5h2v1h-2zM6 5h5v1h-5zM2 6h2v1h-2zM6 6h2v1h-2zM2 7h9v1h-9zM2 8h4v1h-4zM9 8h2v1h-2zM2 9h4v1h-4zM9 9h2v1h-2zM1 10h2v1h-2zM4 10h7v1h-7zM0 11h2v1h-2zM4 11h2v1h-2zM9 11h2v1h-2z"/><path id="b4e09" d="M1 2h10v1h-10zM2 6h8v1h-8zM0 11h12v1h-12z"/><path id="b671f" d="M1 1h2v1h-2zM4 1h2v1h-2zM7 1h5v1h-5zM0 2h9v1h-9zM10 2h2v1h-2zM1 3h2v1h-2zM4 3h2v1h-2zM7 3h2v1h-2zM10 3h2v1h-2zM1 4h5v1h-5zM7 4h5v1h-5zM1 5h2v1h-2zM4 5h2v1h-2zM7 5h2v1h-2zM10 5h2v1h-2zM1 6h5v1h-5zM7 6h2v1h-2zM10 6h2v1h-2zM1 7h2v1h-2zM4 7h2v1h-2zM7 7h5v1h-5zM0 8h9v1h-9zM10 8h2v1h-2zM7 9h2v1h-2zM10 9h2v1h-2zM1 10h2v1h-2zM4 10h2v1h-2zM7 10h2v1h-2zM10 10h2v1h-2zM0 11h2v1h-2zM5 11h3v1h-3zM9 11h3v1h-3z"/><path id="b31" d="M2 2h2v1h-2zM1 3h3v1h-3zM2 4h2v1h-2zM2 5h2v1h-2zM2 6h2v1h-2zM2 7h2v1h-2zM2 8h2v1h-2zM1 9h4v1h-4z"/><path id="b36" d="M2 2h3v1h-3zM1 3h2v1h-2zM0 4h2v1h-2zM0 5h5v1h-5zM0 6h2v1h-2zM4 6h2v1h-2zM0 7h2v1h-2zM4 7h2v1h-2zM0 8h2v1h-2zM4 8h2v1h-2zM1 9h4v1h-4z"/><path id="b2e" d="M1 9h2v1h-2z"/><path id="b35" d="M0 2h6v1h-6zM0 3h2v1h-2zM0 4h2v1h-2zM0 5h5v1h-5zM4 6h2v1h-2zM4 7h2v1h-2zM0 8h2v1h-2zM4 8h2v1h-2zM1 9h4v1h-4z"/><path id="b32" d="M1 2h4v1h-4zM0 3h2v1h-2zM4 3h2v1h-2zM4 4h2v1h-2zM3 5h2v1h-2zM2 6h2v1h-2zM1 7h2v1h-2zM0 8h2v1h-2zM0 9h6v1h-6z"/><path id="b25" d="M1 2h2v1h-2zM4 2h2v1h-2zM0 3h6v1h-6zM1 4h4v1h-4zM3 5h2v1h-2zM2 6h2v1h-2zM2 7h4v1h-4zM1 8h6v1h-6zM0 9h2v1h-2zM4 9h2v1h-2z"/><path id="b33" d="M1 2h4v1h-4zM0 3h2v1h-2zM4 3h2v1h-2zM4 4h2v1h-2zM2 5h3v1h-3zM4 6h2v1h-2zM4 7h2v1h-2zM0 8h2v1h-2zM4 8h2v1h-2zM1 9h4v1h-4z"/><path id="b34" d="M3 2h2v1h-2zM2 3h3v1h-3zM1 4h4v1h-4zM0 5h2v1h-2zM3 5h2v1h-2zM0 6h6v1h-6zM3 7h2v1h-2zM3 8h2v1h-2zM2 9h4v1h-4z"/><path id="b39" d="M1 2h4v1h-4zM0 3h2v1h-2zM4 3h2v1h-2zM0 4h2v1h-2zM4 4h2v1h-2zM0 5h2v1h-2zM4 5h2v1h-2zM1 6h5v1h-5zM4 7h2v1h-2zM3 8h2v1h-2zM1 9h3v1h-3z"/><path id="b30" d="M1 2h4v1h-4zM0 3h2v1h-2zM4 3h2v1h-2zM0 4h2v1h-2zM4 4h2v1h-2zM0 5h2v1h-2zM4 5h2v1h-2zM0 6h2v1h-2zM4 6h2v1h-2zM0 7h2v1h-2zM4 7h2v1h-2zM0 8h2v1h-2zM4 8h2v1h-2zM1 9h4v1h-4z"/><path id="b38" d="M1 2h4v1h-4zM0 3h2v1h-2zM4 3h2v1h-2zM0 4h2v1h-2zM4 4h2v1h-2zM1 5h4v1h-4zM0 6h2v1h-2zM4 6h2v1h-2zM0 7h2v1h-2zM4 7h2v1h-2zM0 8h2v1h-2zM4 8h2v1h-2zM1 9h4v1h-4z"/><path id="b37" d="M0 2h6v1h-6zM0 3h2v1h-2zM4 3h2v1h-2zM3 4h2v1h-2zM2 5h2v1h-2zM2 6h2v1h-2zM2 7h2v1h-2zM2 8h2v1h-2zM2 9h2v1h-2z"/><path id="b90e8" d="M3 1h2v1h-2zM7 1h5v1h-5zM0 2h9v1h-9zM10 2h2v1h-2zM1 3h2v1h-2zM5 3h4v1h-4zM10 3h2v1h-2zM2 4h4v1h-4zM7 4h4v1h-4zM0 5h10v1h-10zM7 6h4v1h-4zM1 7h8v1h-8zM10 7h2v1h-2zM1 8h2v1h-2zM5 8h4v1h-4zM10 8h2v1h-2zM1 9h2v1h-2zM5 9h7v1h-7zM1 10h10v1h-10zM1 11h2v1h-2zM5 11h4v1h-4z"/><path id="b4f4d" d="M3 1h2v1h-2zM6 1h2v1h-2zM3 2h2v1h-2zM7 2h2v1h-2zM2 3h2v1h-2zM2 4h10v1h-10zM1 5h3v1h-3zM0 6h4v1h-4zM5 6h2v1h-2zM9 6h2v1h-2zM2 7h2v1h-2zM6 7h2v1h-2zM9 7h2v1h-2zM2 8h2v1h-2zM6 8h4v1h-4zM2 9h2v1h-2zM8 9h2v1h-2zM2 10h2v1h-2zM7 10h2v1h-2zM2 11h10v1h-10z"/><path id="b41" d="M2 2h2v1h-2zM2 3h2v1h-2zM1 4h4v1h-4zM1 5h4v1h-4zM1 6h4v1h-4zM1 7h4v1h-4zM0 8h2v1h-2zM4 8h2v1h-2zM0 9h6v1h-6z"/><path id="b571f" d="M5 1h2v1h-2zM5 2h2v1h-2zM5 3h2v1h-2zM5 4h2v1h-2zM1 5h10v1h-10zM5 6h2v1h-2zM5 7h2v1h-2zM5 8h2v1h-2zM5 9h2v1h-2zM5 10h2v1h-2zM0 11h12v1h-12z"/><path id="b28" d="M3 1h2v1h-2zM2 2h2v1h-2zM1 3h2v1h-2zM1 4h2v1h-2zM1 5h2v1h-2zM1 6h2v1h-2zM1 7h2v1h-2zM1 8h2v1h-2zM2 9h2v1h-2zM3 10h2v1h-2z"/><path id="b77f3" d="M0 2h12v1h-12zM5 3h2v1h-2zM4 4h2v1h-2zM3 5h2v1h-2zM2 6h9v1h-9zM1 7h4v1h-4zM9 7h2v1h-2zM0 8h2v1h-2zM3 8h2v1h-2zM9 8h2v1h-2zM3 9h2v1h-2zM9 9h2v1h-2zM3 10h8v1h-8zM3 11h2v1h-2zM9 11h2v1h-2z"/><path id="b29" d="M1 1h2v1h-2zM2 2h2v1h-2zM3 3h2v1h-2zM3 4h2v1h-2zM3 5h2v1h-2zM3 6h2v1h-2zM3 7h2v1h-2zM3 8h2v1h-2zM2 9h2v1h-2zM1 10h2v1h-2z"/><path id="b65b9" d="M4 1h2v1h-2zM5 2h2v1h-2zM0 3h12v1h-12zM4 4h2v1h-2zM4 5h2v1h-2zM4 6h6v1h-6zM3 7h2v1h-2zM8 7h2v1h-2zM3 8h2v1h-2zM8 8h2v1h-2zM2 9h2v1h-2zM8 9h2v1h-2zM1 10h2v1h-2zM8 10h2v1h-2zM0 11h2v1h-2zM5 11h4v1h-4z"/><path id="b5de5" d="M1 2h10v1h-10zM5 3h2v1h-2zM5 4h2v1h-2zM5 5h2v1h-2zM5 6h2v1h-2zM5 7h2v1h-2zM5 8h2v1h-2zM5 9h2v1h-2zM0 10h12v1h-12z"/><path id="b7a0b" d="M3 1h8v1h-8zM0 2h4v1h-4zM5 2h2v1h-2zM9 2h2v1h-2zM2 3h2v1h-2zM5 3h2v1h-2zM9 3h2v1h-2zM0 4h11v1h-11zM2 5h2v1h-2zM2 6h9v1h-9zM1 7h5v1h-5zM7 7h2v1h-2zM1 8h3v1h-3zM5 8h6v1h-6zM0 9h4v1h-4zM7 9h2v1h-2zM2 10h2v1h-2zM7 10h2v1h-2zM2 11h10v1h-10z"/><path id="r6316" d="M2 1h1v1h-1zM7 1h1v1h-1zM2 2h1v1h-1zM5 2h6v1h-6zM0 3h4v1h-4zM5 3h1v1h-1zM10 3h1v1h-1zM2 4h1v1h-1zM6 4h1v1h-1zM9 4h1v1h-1zM2 5h1v1h-1zM5 5h1v1h-1zM10 5h1v1h-1zM2 6h2v1h-2zM5 6h6v1h-6zM1 7h2v1h-2zM8 7h1v1h-1zM0 8h1v1h-1zM2 8h1v1h-1zM7 8h1v1h-1zM2 9h1v1h-1zM6 9h1v1h-1zM10 9h1v1h-1zM2 10h1v1h-1zM5 10h1v1h-1zM10 10h1v1h-1zM0 11h3v1h-3zM6 11h5v1h-5z"/><path id="r57fa" d="M3 1h1v1h-1zM7 1h1v1h-1zM1 2h9v1h-9zM3 3h1v1h-1zM7 3h1v1h-1zM3 4h3v1h-3zM7 4h1v1h-1zM3 5h1v1h-1zM5 5h3v1h-3zM3 6h1v1h-1zM7 6h1v1h-1zM0 7h11v1h-11zM2 8h1v1h-1zM5 8h1v1h-1zM8 8h1v1h-1zM0 9h2v1h-2zM3 9h5v1h-5zM9 9h2v1h-2zM5 10h1v1h-1zM0 11h11v1h-11z"/><path id="r7840" d="M8 1h1v1h-1zM0 2h5v1h-5zM6 2h1v1h-1zM8 2h1v1h-1zM10 2h1v1h-1zM2 3h1v1h-1zM6 3h1v1h-1zM8 3h1v1h-1zM10 3h1v1h-1zM2 4h1v1h-1zM6 4h1v1h-1zM8 4h1v1h-1zM10 4h1v1h-1zM1 5h4v1h-4zM6 5h5v1h-5zM0 6h2v1h-2zM4 6h1v1h-1zM8 6h1v1h-1zM1 7h1v1h-1zM4 7h1v1h-1zM6 7h1v1h-1zM8 7h1v1h-1zM10 7h1v1h-1zM1 8h1v1h-1zM4 8h1v1h-1zM6 8h1v1h-1zM8 8h1v1h-1zM10 8h1v1h-1zM1 9h4v1h-4zM6 9h1v1h-1zM8 9h1v1h-1zM10 9h1v1h-1zM1 10h1v1h-1zM4 10h1v1h-1zM6 10h5v1h-5zM6 11h1v1h-1zM10 11h1v1h-1z"/><path id="r571f" d="M5 1h1v1h-1zM5 2h1v1h-1zM5 3h1v1h-1zM5 4h1v1h-1zM1 5h9v1h-9zM5 6h1v1h-1zM5 7h1v1h-1zM5 8h1v1h-1zM5 9h1v1h-1zM5 10h1v1h-1zM0 11h11v1h-11z"/><path id="r6d" d="M0 5h4v1h-4zM0 6h1v1h-1zM2 6h1v1h-1zM4 6h1v1h-1zM0 7h1v1h-1zM2 7h1v1h-1zM4 7h1v1h-1zM0 8h1v1h-1zM2 8h1v1h-1zM4 8h1v1h-1zM0 9h1v1h-1zM2 9h1v1h-1zM4 9h1v1h-1z"/><path id="r33" d="M1 2h3v1h-3zM0 3h1v1h-1zM4 3h1v1h-1zM4 4h1v1h-1zM2 5h2v1h-2zM4 6h1v1h-1zM4 7h1v1h-1zM0 8h1v1h-1zM4 8h1v1h-1zM1 9h3v1h-3z"/><path id="r35" d="M0 2h5v1h-5zM0 3h1v1h-1zM0 4h1v1h-1zM0 5h4v1h-4zM4 6h1v1h-1zM4 7h1v1h-1zM0 8h1v1h-1zM4 8h1v1h-1zM1 9h3v1h-3z"/><path id="r2e" d="M1 9h1v1h-1z"/><path id="r39" d="M1 2h3v1h-3zM0 3h1v1h-1zM4 3h1v1h-1zM0 4h1v1h-1zM4 4h1v1h-1zM0 5h1v1h-1zM4 5h1v1h-1zM1 6h4v1h-4zM4 7h1v1h-1zM3 8h1v1h-1zM1 9h2v1h-2z"/><path id="r34" d="M3 2h1v1h-1zM2 3h2v1h-2zM1 4h1v1h-1zM3 4h1v1h-1zM0 5h1v1h-1zM3 5h1v1h-1zM0 6h5v1h-5zM3 7h1v1h-1zM3 8h1v1h-1zM2 9h3v1h-3z"/><path id="r36" d="M2 2h2v1h-2zM1 3h1v1h-1zM0 4h1v1h-1zM0 5h4v1h-4zM0 6h1v1h-1zM4 6h1v1h-1zM0 7h1v1h-1zM4 7h1v1h-1zM0 8h1v1h-1zM4 8h1v1h-1zM1 9h3v1h-3z"/><path id="r77f3" d="M0 2h11v1h-11zM5 3h1v1h-1zM4 4h1v1h-1zM3 5h1v1h-1zM2 6h8v1h-8zM1 7h1v1h-1zM3 7h1v1h-1zM9 7h1v1h-1zM0 8h1v1h-1zM3 8h1v1h-1zM9 8h1v1h-1zM3 9h1v1h-1zM9 9h1v1h-1zM3 10h7v1h-7zM3 11h1v1h-1zM9 11h1v1h-1z"/><path id="r56de" d="M1 1h10v1h-10zM1 2h1v1h-1zM10 2h1v1h-1zM1 3h1v1h-1zM10 3h1v1h-1zM1 4h1v1h-1zM4 4h4v1h-4zM10 4h1v1h-1zM1 5h1v1h-1zM4 5h1v1h-1zM7 5h1v1h-1zM10 5h1v1h-1zM1 6h1v1h-1zM4 6h1v1h-1zM7 6h1v1h-1zM10 6h1v1h-1zM1 7h1v1h-1zM4 7h4v1h-4zM10 7h1v1h-1zM1 8h1v1h-1zM4 8h1v1h-1zM7 8h1v1h-1zM10 8h1v1h-1zM1 9h1v1h-1zM10 9h1v1h-1zM1 10h10v1h-10zM1 11h1v1h-1zM10 11h1v1h-1z"/><path id="r586b" d="M2 1h1v1h-1zM7 1h1v1h-1zM2 2h1v1h-1zM4 2h7v1h-7zM2 3h1v1h-1zM7 3h1v1h-1zM0 4h4v1h-4zM5 4h5v1h-5zM2 5h1v1h-1zM5 5h1v1h-1zM9 5h1v1h-1zM2 6h1v1h-1zM5 6h3v1h-3zM9 6h1v1h-1zM2 7h1v1h-1zM5 7h1v1h-1zM7 7h3v1h-3zM2 8h2v1h-2zM5 8h1v1h-1zM9 8h1v1h-1zM0 9h3v1h-3zM4 9h7v1h-7zM6 10h1v1h-1zM8 10h1v1h-1zM4 11h2v1h-2zM9 11h2v1h-2z"/><path id="r623f" d="M5 1h1v1h-1zM2 2h8v1h-8zM2 3h1v1h-1zM9 3h1v1h-1zM2 4h8v1h-8zM2 5h1v1h-1zM6 5h1v1h-1zM2 6h9v1h-9zM2 7h1v1h-1zM5 7h1v1h-1zM2 8h1v1h-1zM5 8h5v1h-5zM1 9h1v1h-1zM5 9h1v1h-1zM9 9h1v1h-1zM1 10h1v1h-1zM4 10h1v1h-1zM9 10h1v1h-1zM0 11h1v1h-1zM3 11h1v1h-1zM7 11h2v1h-2z"/><path id="r5fc3" d="M5 1h1v1h-1zM6 2h1v1h-1zM3 3h1v1h-1zM6 3h1v1h-1zM3 4h1v1h-1zM6 4h1v1h-1zM3 5h1v1h-1zM9 5h1v1h-1zM1 6h1v1h-1zM3 6h1v1h-1zM10 6h1v1h-1zM1 7h1v1h-1zM3 7h1v1h-1zM10 7h1v1h-1zM1 8h1v1h-1zM3 8h1v1h-1zM8 8h1v1h-1zM10 8h1v1h-1zM0 9h1v1h-1zM3 9h1v1h-1zM8 9h1v1h-1zM3 10h1v1h-1zM8 10h1v1h-1zM4 11h5v1h-5z"/><path id="b780c" d="M5 1h2v1h-2zM0 2h12v1h-12zM2 3h2v1h-2zM5 3h2v1h-2zM8 3h4v1h-4zM2 4h2v1h-2zM5 4h7v1h-7zM1 5h6v1h-6zM8 5h4v1h-4zM0 6h7v1h-7zM8 6h4v1h-4zM1 7h11v1h-11zM1 8h11v1h-11zM1 9h8v1h-8zM10 9h2v1h-2zM1 10h4v1h-4zM6 10h2v1h-2zM10 10h2v1h-2zM5 11h2v1h-2zM9 11h3v1h-3z"/><path id="b7b51" d="M1 1h2v1h-2zM6 1h2v1h-2zM1 2h11v1h-11zM0 3h2v1h-2zM3 3h4v1h-4zM8 3h2v1h-2zM0 5h10v1h-10zM2 6h2v1h-2zM5 6h2v1h-2zM8 6h2v1h-2zM2 7h2v1h-2zM5 7h5v1h-5zM2 8h2v1h-2zM5 8h5v1h-5zM2 9h5v1h-5zM8 9h2v1h-2zM0 10h3v1h-3zM4 10h2v1h-2zM8 10h4v1h-4zM3 11h2v1h-2zM8 11h4v1h-4z"/><path id="r7816" d="M7 1h1v1h-1zM0 2h4v1h-4zM5 2h5v1h-5zM2 3h1v1h-1zM7 3h1v1h-1zM1 4h1v1h-1zM4 4h7v1h-7zM1 5h3v1h-3zM6 5h1v1h-1zM0 6h2v1h-2zM3 6h1v1h-1zM6 6h1v1h-1zM1 7h1v1h-1zM3 7h1v1h-1zM5 7h5v1h-5zM1 8h1v1h-1zM3 8h1v1h-1zM9 8h1v1h-1zM1 9h3v1h-3zM6 9h1v1h-1zM8 9h1v1h-1zM7 10h1v1h-1zM8 11h1v1h-1z"/><path id="r5899" d="M1 1h1v1h-1zM7 1h1v1h-1zM1 2h1v1h-1zM4 2h7v1h-7zM1 3h1v1h-1zM4 3h1v1h-1zM7 3h1v1h-1zM10 3h1v1h-1zM0 4h4v1h-4zM5 4h1v1h-1zM7 4h1v1h-1zM9 4h1v1h-1zM1 5h1v1h-1zM4 5h7v1h-7zM1 6h1v1h-1zM1 7h1v1h-1zM4 7h7v1h-7zM1 8h4v1h-4zM10 8h1v1h-1zM0 9h2v1h-2zM4 9h1v1h-1zM6 9h3v1h-3zM10 9h1v1h-1zM4 10h1v1h-1zM6 10h1v1h-1zM8 10h1v1h-1zM10 10h1v1h-1zM4 11h7v1h-7z"/><path id="b6df7" d="M1 1h2v1h-2zM4 1h7v1h-7zM2 2h4v1h-4zM9 2h2v1h-2zM4 3h7v1h-7zM0 4h2v1h-2zM4 4h2v1h-2zM9 4h2v1h-2zM1 5h10v1h-10zM2 6h4v1h-4zM7 6h2v1h-2zM10 6h2v1h-2zM2 7h4v1h-4zM7 7h4v1h-4zM0 8h3v1h-3zM4 8h6v1h-6zM1 9h2v1h-2zM4 9h2v1h-2zM7 9h2v1h-2zM10 9h2v1h-2zM1 10h2v1h-2zM4 10h5v1h-5zM10 10h2v1h-2zM1 11h2v1h-2zM4 11h3v1h-3zM8 11h4v1h-4z"/><path id="b51dd" d="M0 1h2v1h-2zM4 1h2v1h-2zM7 1h5v1h-5zM1 2h2v1h-2zM4 2h3v1h-3zM8 2h4v1h-4zM1 3h2v1h-2zM4 3h2v1h-2zM9 3h2v1h-2zM4 4h4v1h-4zM9 4h2v1h-2zM2 5h4v1h-4zM7 5h5v1h-5zM2 6h6v1h-6zM9 6h2v1h-2zM1 7h6v1h-6zM9 7h2v1h-2zM0 8h12v1h-12zM1 9h2v1h-2zM5 9h6v1h-6zM1 10h2v1h-2zM4 10h7v1h-7zM1 11h4v1h-4zM6 11h6v1h-6z"/><path id="b53ca" d="M1 1h8v1h-8zM3 2h2v1h-2zM7 2h2v1h-2zM3 3h2v1h-2zM6 3h2v1h-2zM3 4h2v1h-2zM6 4h2v1h-2zM3 5h8v1h-8zM3 6h2v1h-2zM9 6h2v1h-2zM2 7h4v1h-4zM8 7h2v1h-2zM2 8h2v1h-2zM5 8h4v1h-4zM1 9h2v1h-2zM6 9h2v1h-2zM1 10h2v1h-2zM5 10h5v1h-5zM0 11h2v1h-2zM3 11h3v1h-3zM9 11h3v1h-3z"/><path id="b94a2" d="M1 1h2v1h-2zM5 1h7v1h-7zM1 2h2v1h-2zM5 2h2v1h-2zM10 2h2v1h-2zM1 3h6v1h-6zM8 3h4v1h-4zM0 4h2v1h-2zM5 4h7v1h-7zM0 5h9v1h-9zM10 5h2v1h-2zM2 6h2v1h-2zM5 6h4v1h-4zM10 6h2v1h-2zM0 7h12v1h-12zM2 8h2v1h-2zM5 8h3v1h-3zM9 8h3v1h-3zM2 9h5v1h-5zM10 9h2v1h-2zM2 10h5v1h-5zM10 10h2v1h-2zM2 11h2v1h-2zM5 11h2v1h-2zM8 11h4v1h-4z"/><path id="b7b4b" d="M1 1h2v1h-2zM6 1h2v1h-2zM1 2h11v1h-11zM1 3h6v1h-6zM8 3h2v1h-2zM0 4h2v1h-2zM4 4h2v1h-2zM7 4h4v1h-4zM1 5h5v1h-5zM7 5h2v1h-2zM1 6h2v1h-2zM4 6h8v1h-8zM1 7h5v1h-5zM7 7h2v1h-2zM10 7h2v1h-2zM1 8h2v1h-2zM4 8h2v1h-2zM7 8h2v1h-2zM10 8h2v1h-2zM1 9h5v1h-5zM7 9h2v1h-2zM10 9h2v1h-2zM1 10h2v1h-2zM4 10h4v1h-4zM10 10h2v1h-2zM0 11h2v1h-2zM3 11h4v1h-4zM8 11h3v1h-3z"/><path id="r5e26" d="M2 1h1v1h-1zM5 1h1v1h-1zM8 1h1v1h-1zM0 2h11v1h-11zM2 3h1v1h-1zM5 3h1v1h-1zM8 3h1v1h-1zM2 4h1v1h-1zM5 4h1v1h-1zM8 4h1v1h-1zM0 5h11v1h-11zM0 6h1v1h-1zM5 6h1v1h-1zM10 6h1v1h-1zM0 7h1v1h-1zM2 7h7v1h-7zM10 7h1v1h-1zM2 8h1v1h-1zM5 8h1v1h-1zM8 8h1v1h-1zM2 9h1v1h-1zM5 9h1v1h-1zM8 9h1v1h-1zM2 10h1v1h-1zM5 10h1v1h-1zM7 10h2v1h-2zM5 11h1v1h-1z"/><path id="r6881" d="M1 1h1v1h-1zM3 1h6v1h-6zM0 2h1v1h-1zM2 2h1v1h-1zM6 2h1v1h-1zM8 2h1v1h-1zM1 3h1v1h-1zM4 3h1v1h-1zM6 3h1v1h-1zM8 3h2v1h-2zM2 4h1v1h-1zM4 4h1v1h-1zM6 4h1v1h-1zM8 4h1v1h-1zM10 4h1v1h-1zM0 5h2v1h-2zM3 5h1v1h-1zM5 5h1v1h-1zM8 5h1v1h-1zM10 5h1v1h-1zM1 6h1v1h-1zM4 6h1v1h-1zM7 6h2v1h-2zM1 7h1v1h-1zM3 7h1v1h-1zM5 7h1v1h-1zM0 8h11v1h-11zM3 9h1v1h-1zM5 9h1v1h-1zM7 9h1v1h-1zM2 10h1v1h-1zM5 10h1v1h-1zM8 10h1v1h-1zM0 11h2v1h-2zM5 11h1v1h-1zM9 11h2v1h-2z"/><path id="r72ec" d="M0 1h1v1h-1zM3 1h1v1h-1zM7 1h1v1h-1zM1 2h1v1h-1zM3 2h1v1h-1zM7 2h1v1h-1zM2 3h1v1h-1zM5 3h6v1h-6zM1 4h1v1h-1zM3 4h1v1h-1zM5 4h1v1h-1zM7 4h1v1h-1zM10 4h1v1h-1zM0 5h1v1h-1zM3 5h1v1h-1zM5 5h1v1h-1zM7 5h1v1h-1zM10 5h1v1h-1zM2 6h2v1h-2zM5 6h1v1h-1zM7 6h1v1h-1zM10 6h1v1h-1zM1 7h1v1h-1zM3 7h1v1h-1zM5 7h6v1h-6zM0 8h1v1h-1zM3 8h1v1h-1zM7 8h1v1h-1zM3 9h1v1h-1zM7 9h1v1h-1zM10 9h1v1h-1zM1 10h1v1h-1zM3 10h8v1h-8zM2 11h1v1h-1zM10 11h1v1h-1z"/><path id="r7acb" d="M5 1h1v1h-1zM6 2h1v1h-1zM1 3h10v1h-10zM3 5h1v1h-1zM8 5h1v1h-1zM3 6h1v1h-1zM8 6h1v1h-1zM4 7h1v1h-1zM7 7h1v1h-1zM4 8h1v1h-1zM7 8h1v1h-1zM4 9h1v1h-1zM6 9h1v1h-1zM6 10h1v1h-1zM0 11h11v1h-11z"/><path id="r57ab" d="M2 1h1v1h-1zM6 1h1v1h-1zM0 2h9v1h-9zM2 3h1v1h-1zM6 3h1v1h-1zM8 3h1v1h-1zM2 4h2v1h-2zM5 4h2v1h-2zM8 4h1v1h-1zM10 4h1v1h-1zM0 5h3v1h-3zM6 5h3v1h-3zM10 5h1v1h-1zM2 6h1v1h-1zM4 6h2v1h-2zM8 6h3v1h-3zM1 7h2v1h-2zM5 7h1v1h-1zM5 8h1v1h-1zM2 9h8v1h-8zM5 10h1v1h-1zM0 11h11v1h-11z"/><path id="r5c42" d="M2 1h8v1h-8zM2 2h1v1h-1zM9 2h1v1h-1zM2 3h8v1h-8zM2 4h1v1h-1zM2 5h1v1h-1zM4 5h6v1h-6zM2 6h1v1h-1zM2 7h9v1h-9zM2 8h1v1h-1zM6 8h1v1h-1zM2 9h1v1h-1zM5 9h1v1h-1zM8 9h1v1h-1zM1 10h1v1h-1zM4 10h1v1h-1zM9 10h1v1h-1zM0 11h1v1h-1zM4 11h7v1h-7z"/><path id="r77e9" d="M1 1h1v1h-1zM1 2h1v1h-1zM6 2h5v1h-5zM1 3h6v1h-6zM0 4h1v1h-1zM3 4h1v1h-1zM6 4h1v1h-1zM3 5h1v1h-1zM6 5h5v1h-5zM0 6h7v1h-7zM10 6h1v1h-1zM3 7h1v1h-1zM6 7h1v1h-1zM10 7h1v1h-1zM2 8h1v1h-1zM4 8h1v1h-1zM6 8h5v1h-5zM2 9h1v1h-1zM4 9h1v1h-1zM6 9h1v1h-1zM1 10h1v1h-1zM4 10h1v1h-1zM6 10h1v1h-1zM0 11h1v1h-1zM6 11h5v1h-5z"/><path id="r67f1" d="M2 1h1v1h-1zM6 1h1v1h-1zM2 2h1v1h-1zM7 2h1v1h-1zM0 3h11v1h-11zM2 4h1v1h-1zM7 4h1v1h-1zM1 5h3v1h-3zM7 5h1v1h-1zM1 6h2v1h-2zM4 6h1v1h-1zM7 6h1v1h-1zM0 7h1v1h-1zM2 7h1v1h-1zM5 7h5v1h-5zM0 8h1v1h-1zM2 8h1v1h-1zM7 8h1v1h-1zM2 9h1v1h-1zM7 9h1v1h-1zM2 10h1v1h-1zM7 10h1v1h-1zM2 11h1v1h-1zM4 11h7v1h-7z"/><path id="rff08" d="M9 0h1v1h-1zM8 1h1v1h-1zM8 2h1v1h-1zM7 3h1v1h-1zM7 4h1v1h-1zM7 5h1v1h-1zM7 6h1v1h-1zM7 7h1v1h-1zM7 8h1v1h-1zM8 9h1v1h-1zM8 10h1v1h-1zM9 11h1v1h-1z"/><path id="r68af" d="M2 1h1v1h-1zM5 1h1v1h-1zM9 1h1v1h-1zM2 2h1v1h-1zM6 2h1v1h-1zM8 2h1v1h-1zM2 3h1v1h-1zM5 3h5v1h-5zM0 4h5v1h-5zM7 4h1v1h-1zM9 4h1v1h-1zM2 5h1v1h-1zM5 5h5v1h-5zM1 6h3v1h-3zM5 6h1v1h-1zM7 6h1v1h-1zM1 7h2v1h-2zM4 7h7v1h-7zM0 8h1v1h-1zM2 8h1v1h-1zM6 8h2v1h-2zM10 8h1v1h-1zM2 9h1v1h-1zM5 9h1v1h-1zM7 9h1v1h-1zM10 9h1v1h-1zM2 10h1v1h-1zM4 10h1v1h-1zM7 10h3v1h-3zM2 11h1v1h-1zM7 11h1v1h-1z"/><path id="rff09" d="M3 0h1v1h-1zM4 1h1v1h-1zM4 2h1v1h-1zM5 3h1v1h-1zM5 4h1v1h-1zM5 5h1v1h-1zM5 6h1v1h-1zM5 7h1v1h-1zM5 8h1v1h-1zM4 9h1v1h-1zM4 10h1v1h-1zM3 11h1v1h-1z"/><path id="r5706" d="M0 1h11v1h-11zM0 2h1v1h-1zM10 2h1v1h-1zM0 3h1v1h-1zM3 3h5v1h-5zM10 3h1v1h-1zM0 4h1v1h-1zM3 4h1v1h-1zM7 4h1v1h-1zM10 4h1v1h-1zM0 5h1v1h-1zM2 5h7v1h-7zM10 5h1v1h-1zM0 6h1v1h-1zM2 6h1v1h-1zM8 6h1v1h-1zM10 6h1v1h-1zM0 7h1v1h-1zM2 7h1v1h-1zM5 7h1v1h-1zM8 7h1v1h-1zM10 7h1v1h-1zM0 8h1v1h-1zM2 8h1v1h-1zM5 8h1v1h-1zM8 8h1v1h-1zM10 8h1v1h-1zM0 9h1v1h-1zM4 9h1v1h-1zM6 9h1v1h-1zM10 9h1v1h-1zM0 10h1v1h-1zM3 10h1v1h-1zM7 10h1v1h-1zM10 10h1v1h-1zM0 11h11v1h-11z"/><path id="r6c34" d="M5 1h1v1h-1zM5 2h1v1h-1zM5 3h1v1h-1zM9 3h1v1h-1zM0 4h4v1h-4zM5 4h2v1h-2zM8 4h1v1h-1zM3 5h1v1h-1zM5 5h1v1h-1zM7 5h1v1h-1zM3 6h1v1h-1zM5 6h1v1h-1zM7 6h1v1h-1zM2 7h1v1h-1zM5 7h1v1h-1zM8 7h1v1h-1zM2 8h1v1h-1zM5 8h1v1h-1zM8 8h1v1h-1zM1 9h1v1h-1zM5 9h1v1h-1zM9 9h1v1h-1zM0 10h1v1h-1zM3 10h1v1h-1zM5 10h1v1h-1zM10 10h1v1h-1zM4 11h1v1h-1z"/><path id="r5e73" d="M1 1h9v1h-9zM5 2h1v1h-1zM2 3h1v1h-1zM5 3h1v1h-1zM8 3h1v1h-1zM3 4h1v1h-1zM5 4h1v1h-1zM7 4h1v1h-1zM5 5h1v1h-1zM0 6h11v1h-11zM5 7h1v1h-1zM5 8h1v1h-1zM5 9h1v1h-1zM5 10h1v1h-1zM5 11h1v1h-1z"/><path id="r5761" d="M2 1h1v1h-1zM8 1h1v1h-1zM2 2h1v1h-1zM8 2h1v1h-1zM2 3h1v1h-1zM5 3h6v1h-6zM0 4h6v1h-6zM8 4h1v1h-1zM10 4h1v1h-1zM2 5h1v1h-1zM5 5h1v1h-1zM8 5h1v1h-1zM2 6h1v1h-1zM5 6h5v1h-5zM2 7h1v1h-1zM4 7h2v1h-2zM7 7h1v1h-1zM9 7h1v1h-1zM2 8h2v1h-2zM5 8h1v1h-1zM7 8h1v1h-1zM9 8h1v1h-1zM0 9h3v1h-3zM5 9h1v1h-1zM8 9h1v1h-1zM4 10h1v1h-1zM7 10h1v1h-1zM9 10h1v1h-1zM3 11h1v1h-1zM5 11h2v1h-2zM10 11h1v1h-1z"/><path id="r5c4b" d="M2 1h8v1h-8zM2 2h1v1h-1zM9 2h1v1h-1zM2 3h8v1h-8zM2 4h1v1h-1zM2 5h9v1h-9zM2 6h1v1h-1zM5 6h1v1h-1zM8 6h1v1h-1zM2 7h1v1h-1zM4 7h6v1h-6zM2 8h1v1h-1zM7 8h1v1h-1zM2 9h1v1h-1zM4 9h6v1h-6zM1 10h1v1h-1zM7 10h1v1h-1zM0 11h1v1h-1zM3 11h8v1h-8z"/><path id="r9762" d="M1 1h10v1h-10zM5 2h1v1h-1zM4 3h1v1h-1zM1 4h10v1h-10zM1 5h1v1h-1zM4 5h1v1h-1zM7 5h1v1h-1zM10 5h1v1h-1zM1 6h1v1h-1zM4 6h4v1h-4zM10 6h1v1h-1zM1 7h1v1h-1zM4 7h1v1h-1zM7 7h1v1h-1zM10 7h1v1h-1zM1 8h1v1h-1zM4 8h4v1h-4zM10 8h1v1h-1zM1 9h1v1h-1zM4 9h1v1h-1zM7 9h1v1h-1zM10 9h1v1h-1zM1 10h10v1h-10zM1 11h1v1h-1zM10 11h1v1h-1z"/><path id="r6298" d="M2 1h1v1h-1zM9 1h2v1h-2zM2 2h1v1h-1zM6 2h3v1h-3zM0 3h5v1h-5zM6 3h1v1h-1zM2 4h1v1h-1zM6 4h1v1h-1zM2 5h1v1h-1zM6 5h5v1h-5zM2 6h3v1h-3zM6 6h1v1h-1zM9 6h1v1h-1zM1 7h2v1h-2zM6 7h1v1h-1zM9 7h1v1h-1zM0 8h1v1h-1zM2 8h1v1h-1zM6 8h1v1h-1zM9 8h1v1h-1zM2 9h1v1h-1zM6 9h1v1h-1zM9 9h1v1h-1zM2 10h1v1h-1zM5 10h1v1h-1zM9 10h1v1h-1zM0 11h3v1h-3zM4 11h1v1h-1zM9 11h1v1h-1z"/><path id="r8fc7" d="M1 1h1v1h-1zM8 1h1v1h-1zM2 2h1v1h-1zM8 2h1v1h-1zM2 3h1v1h-1zM4 3h7v1h-7zM8 4h1v1h-1zM0 5h3v1h-3zM5 5h1v1h-1zM8 5h1v1h-1zM2 6h1v1h-1zM6 6h1v1h-1zM8 6h1v1h-1zM2 7h1v1h-1zM8 7h1v1h-1zM2 8h1v1h-1zM8 8h1v1h-1zM2 9h1v1h-1zM7 9h2v1h-2zM1 10h1v1h-1zM3 10h1v1h-1zM0 11h1v1h-1zM4 11h7v1h-7z"/><path id="r6709" d="M4 1h1v1h-1zM0 2h11v1h-11zM3 3h1v1h-1zM3 4h6v1h-6zM2 5h2v1h-2zM8 5h1v1h-1zM1 6h1v1h-1zM3 6h6v1h-6zM0 7h1v1h-1zM3 7h1v1h-1zM8 7h1v1h-1zM3 8h6v1h-6zM3 9h1v1h-1zM8 9h1v1h-1zM3 10h1v1h-1zM8 10h1v1h-1zM3 11h1v1h-1zM7 11h2v1h-2z"/><path id="r677f" d="M2 1h1v1h-1zM8 1h2v1h-2zM2 2h1v1h-1zM5 2h3v1h-3zM0 3h6v1h-6zM2 4h1v1h-1zM5 4h1v1h-1zM2 5h1v1h-1zM5 5h5v1h-5zM1 6h3v1h-3zM5 6h1v1h-1zM9 6h1v1h-1zM1 7h2v1h-2zM4 7h3v1h-3zM9 7h1v1h-1zM0 8h1v1h-1zM2 8h1v1h-1zM5 8h1v1h-1zM7 8h2v1h-2zM2 9h1v1h-1zM4 9h1v1h-1zM8 9h1v1h-1zM2 10h1v1h-1zM4 10h1v1h-1zM7 10h1v1h-1zM9 10h1v1h-1zM2 11h2v1h-2zM5 11h2v1h-2zM10 11h1v1h-1z"/><path id="r5929" d="M1 1h9v1h-9zM5 2h1v1h-1zM5 3h1v1h-1zM5 4h1v1h-1zM0 5h11v1h-11zM5 6h1v1h-1zM4 7h1v1h-1zM6 7h1v1h-1zM4 8h1v1h-1zM6 8h1v1h-1zM3 9h1v1h-1zM7 9h1v1h-1zM2 10h1v1h-1zM8 10h1v1h-1zM0 11h2v1h-2zM9 11h2v1h-2z"/><path id="r6c9f" d="M1 1h1v1h-1zM5 1h1v1h-1zM2 2h1v1h-1zM5 2h1v1h-1zM5 3h6v1h-6zM0 4h1v1h-1zM3 4h2v1h-2zM10 4h1v1h-1zM1 5h1v1h-1zM3 5h1v1h-1zM6 5h1v1h-1zM10 5h1v1h-1zM2 6h1v1h-1zM6 6h1v1h-1zM10 6h1v1h-1zM2 7h1v1h-1zM5 7h1v1h-1zM7 7h1v1h-1zM10 7h1v1h-1zM0 8h2v1h-2zM4 8h5v1h-5zM10 8h1v1h-1zM1 9h1v1h-1zM10 9h1v1h-1zM1 10h1v1h-1zM8 10h1v1h-1zM10 10h1v1h-1zM1 11h1v1h-1zM9 11h1v1h-1z"/><path id="r3001" d="M0 8h1v1h-1zM1 9h2v1h-2zM2 10h1v1h-1z"/><path id="r6311" d="M2 1h1v1h-1zM6 1h1v1h-1zM8 1h1v1h-1zM2 2h1v1h-1zM6 2h1v1h-1zM8 2h1v1h-1zM0 3h5v1h-5zM6 3h1v1h-1zM8 3h1v1h-1zM10 3h1v1h-1zM2 4h1v1h-1zM5 4h2v1h-2zM8 4h2v1h-2zM2 5h1v1h-1zM4 5h1v1h-1zM6 5h1v1h-1zM8 5h1v1h-1zM2 6h2v1h-2zM5 6h2v1h-2zM8 6h2v1h-2zM1 7h2v1h-2zM4 7h1v1h-1zM6 7h1v1h-1zM8 7h1v1h-1zM10 7h1v1h-1zM0 8h1v1h-1zM2 8h1v1h-1zM6 8h1v1h-1zM8 8h1v1h-1zM2 9h1v1h-1zM6 9h1v1h-1zM8 9h1v1h-1zM10 9h1v1h-1zM2 10h1v1h-1zM5 10h1v1h-1zM8 10h1v1h-1zM10 10h1v1h-1zM0 11h3v1h-3zM4 11h1v1h-1zM8 11h3v1h-3z"/><path id="r6a90" d="M2 1h1v1h-1zM6 1h4v1h-4zM2 2h1v1h-1zM6 2h1v1h-1zM9 2h1v1h-1zM0 3h11v1h-11zM2 4h1v1h-1zM5 4h2v1h-2zM8 4h1v1h-1zM10 4h1v1h-1zM2 5h1v1h-1zM5 5h6v1h-6zM2 6h2v1h-2zM5 6h1v1h-1zM1 7h2v1h-2zM4 7h2v1h-2zM7 7h3v1h-3zM0 8h1v1h-1zM2 8h1v1h-1zM5 8h1v1h-1zM2 9h1v1h-1zM5 9h6v1h-6zM2 10h1v1h-1zM4 10h1v1h-1zM6 10h1v1h-1zM10 10h1v1h-1zM2 11h2v1h-2zM6 11h5v1h-5z"/><path id="r989c" d="M2 1h1v1h-1zM6 1h5v1h-5zM0 2h5v1h-5zM8 2h1v1h-1zM1 3h1v1h-1zM3 3h1v1h-1zM6 3h5v1h-5zM0 4h5v1h-5zM6 4h1v1h-1zM10 4h1v1h-1zM0 5h1v1h-1zM4 5h1v1h-1zM6 5h1v1h-1zM8 5h1v1h-1zM10 5h1v1h-1zM0 6h1v1h-1zM3 6h1v1h-1zM6 6h1v1h-1zM8 6h1v1h-1zM10 6h1v1h-1zM0 7h3v1h-3zM4 7h1v1h-1zM6 7h1v1h-1zM8 7h1v1h-1zM10 7h1v1h-1zM0 8h1v1h-1zM3 8h1v1h-1zM6 8h1v1h-1zM8 8h1v1h-1zM10 8h1v1h-1zM0 9h3v1h-3zM4 9h1v1h-1zM6 9h1v1h-1zM8 9h1v1h-1zM10 9h1v1h-1zM0 10h1v1h-1zM3 10h1v1h-1zM7 10h1v1h-1zM9 10h1v1h-1zM0 11h3v1h-3zM5 11h2v1h-2zM10 11h1v1h-1z"/><path id="r8272" d="M4 1h1v1h-1zM3 2h6v1h-6zM2 3h1v1h-1zM6 3h1v1h-1zM1 4h9v1h-9zM0 5h1v1h-1zM2 5h1v1h-1zM5 5h1v1h-1zM9 5h1v1h-1zM2 6h1v1h-1zM5 6h1v1h-1zM9 6h1v1h-1zM2 7h8v1h-8zM2 8h1v1h-1zM2 9h1v1h-1zM10 9h1v1h-1zM2 10h1v1h-1zM10 10h1v1h-1zM3 11h8v1h-8z"/><path id="r6bd4" d="M1 1h1v1h-1zM6 1h1v1h-1zM1 2h1v1h-1zM6 2h1v1h-1zM1 3h1v1h-1zM6 3h1v1h-1zM9 3h1v1h-1zM1 4h1v1h-1zM6 4h1v1h-1zM8 4h1v1h-1zM1 5h4v1h-4zM6 5h2v1h-2zM1 6h1v1h-1zM6 6h1v1h-1zM1 7h1v1h-1zM6 7h1v1h-1zM1 8h1v1h-1zM6 8h1v1h-1zM1 9h1v1h-1zM3 9h2v1h-2zM6 9h1v1h-1zM10 9h1v1h-1zM1 10h2v1h-2zM6 10h1v1h-1zM10 10h1v1h-1zM1 11h1v1h-1zM7 11h4v1h-4z"/><path id="r6ca1" d="M1 1h1v1h-1zM5 1h4v1h-4zM2 2h1v1h-1zM5 2h1v1h-1zM8 2h1v1h-1zM0 3h1v1h-1zM5 3h1v1h-1zM8 3h1v1h-1zM1 4h1v1h-1zM4 4h1v1h-1zM8 4h3v1h-3zM3 5h1v1h-1zM2 6h1v1h-1zM4 6h6v1h-6zM2 7h1v1h-1zM5 7h1v1h-1zM8 7h1v1h-1zM1 8h1v1h-1zM6 8h1v1h-1zM8 8h1v1h-1zM0 9h2v1h-2zM6 9h2v1h-2zM1 10h1v1h-1zM5 10h1v1h-1zM8 10h1v1h-1zM1 11h1v1h-1zM3 11h2v1h-2zM9 11h2v1h-2z"/><path id="r62a5" d="M2 1h1v1h-1zM5 1h5v1h-5zM2 2h1v1h-1zM5 2h1v1h-1zM9 2h1v1h-1zM0 3h6v1h-6zM9 3h1v1h-1zM2 4h1v1h-1zM5 4h1v1h-1zM7 4h2v1h-2zM2 5h1v1h-1zM4 5h2v1h-2zM2 6h2v1h-2zM5 6h6v1h-6zM1 7h2v1h-2zM5 7h1v1h-1zM7 7h1v1h-1zM9 7h1v1h-1zM0 8h1v1h-1zM2 8h1v1h-1zM5 8h1v1h-1zM7 8h1v1h-1zM9 8h1v1h-1zM2 9h1v1h-1zM5 9h1v1h-1zM8 9h1v1h-1zM2 10h1v1h-1zM5 10h1v1h-1zM7 10h1v1h-1zM9 10h1v1h-1zM0 11h3v1h-3zM5 11h2v1h-2zM10 11h1v1h-1z"/><path id="r90e8" d="M3 1h1v1h-1zM7 1h4v1h-4zM0 2h8v1h-8zM10 2h1v1h-1zM1 3h1v1h-1zM5 3h1v1h-1zM7 3h1v1h-1zM10 3h1v1h-1zM2 4h1v1h-1zM4 4h1v1h-1zM7 4h1v1h-1zM9 4h1v1h-1zM0 5h9v1h-9zM7 6h1v1h-1zM9 6h1v1h-1zM1 7h5v1h-5zM7 7h1v1h-1zM10 7h1v1h-1zM1 8h1v1h-1zM5 8h1v1h-1zM7 8h1v1h-1zM10 8h1v1h-1zM1 9h1v1h-1zM5 9h1v1h-1zM7 9h2v1h-2zM10 9h1v1h-1zM1 10h5v1h-5zM7 10h1v1h-1zM9 10h1v1h-1zM1 11h1v1h-1zM5 11h1v1h-1zM7 11h1v1h-1z"/><path id="r5168" d="M5 1h1v1h-1zM4 2h1v1h-1zM6 2h1v1h-1zM3 3h1v1h-1zM7 3h1v1h-1zM2 4h1v1h-1zM8 4h1v1h-1zM0 5h2v1h-2zM3 5h5v1h-5zM9 5h2v1h-2zM5 6h1v1h-1zM5 7h1v1h-1zM3 8h5v1h-5zM5 9h1v1h-1zM5 10h1v1h-1zM1 11h9v1h-9z"/><path id="r8d85" d="M3 1h1v1h-1zM5 1h5v1h-5zM3 2h1v1h-1zM7 2h1v1h-1zM9 2h1v1h-1zM1 3h5v1h-5zM7 3h1v1h-1zM9 3h1v1h-1zM3 4h1v1h-1zM6 4h1v1h-1zM8 4h2v1h-2zM0 5h6v1h-6zM3 6h1v1h-1zM6 6h4v1h-4zM1 7h1v1h-1zM3 7h4v1h-4zM9 7h1v1h-1zM1 8h1v1h-1zM3 8h1v1h-1zM6 8h1v1h-1zM9 8h1v1h-1zM1 9h3v1h-3zM6 9h4v1h-4zM0 10h1v1h-1zM3 10h2v1h-2zM0 11h1v1h-1zM5 11h6v1h-6z"/><path id="r7d2f" d="M1 1h9v1h-9zM1 2h1v1h-1zM5 2h1v1h-1zM9 2h1v1h-1zM1 3h9v1h-9zM1 4h1v1h-1zM5 4h1v1h-1zM9 4h1v1h-1zM1 5h9v1h-9zM4 6h1v1h-1zM7 6h1v1h-1zM2 7h5v1h-5zM3 8h1v1h-1zM8 8h1v1h-1zM1 9h7v1h-7zM9 9h1v1h-1zM3 10h1v1h-1zM5 10h1v1h-1zM7 10h1v1h-1zM0 11h3v1h-3zM4 11h2v1h-2zM8 11h3v1h-3z"/></defs></svg>
<svg style="position:absolute;left:0;top:0" width="1176" height="20">
<polygon points="8.5,19 8.5,1 125,0.5 142.5,18.5 1174,18.5 1174,19" fill="#eeeeee"/>
<rect x="9" y="1" width="117" height="3" fill="#3399ff"/>
<line x1="8" y1="0.5" x2="125" y2="0.5" stroke="#a89f96" stroke-width="1"/>
<line x1="125" y1="0.5" x2="142.5" y2="18.5" stroke="#8a8a8a" stroke-width="1"/>
<line x1="142" y1="18.5" x2="1174" y2="18.5" stroke="#9a9a9a" stroke-width="1"/>
<line x1="8.5" y1="0" x2="8.5" y2="20" stroke="#a0a0a0" stroke-width="1"/>
</svg>
<div class="tx" style="left:14px;top:4px;width:108px">工程量清单进度查询<svg width="109" height="12" fill="#000"><use href="#r5de5" x="0"/><use href="#r7a0b" x="12"/><use href="#r91cf" x="24"/><use href="#r6e05" x="36"/><use href="#r5355" x="48"/><use href="#r8fdb" x="60"/><use href="#r5ea6" x="72"/><use href="#r67e5" x="84"/><use href="#r8be2" x="96"/></svg></div>
<div style="position:absolute;left:8px;top:19px;width:1166px;height:65px;border-left:1px solid #a0a0a0;border-right:1px solid #a0a0a0;border-bottom:1px solid #a0a0a0;background:linear-gradient(#fefefe,#e4e4e4)"></div>
<div class="tx" style="left:17px;top:31px;width:48px">查询方式<svg width="49" height="12" fill="#000"><use href="#r67e5" x="0"/><use href="#r8be2" x="12"/><use href="#r65b9" x="24"/><use href="#r5f0f" x="36"/></svg></div>
<div class="cmbg" style="left:73px;top:27px;width:169px;height:20px"></div>
<div style="position:absolute;left:222px;top:29px;width:1px;height:16px;background:#fafafa"></div>
<div class="arr" style="left:229px;top:35px"></div>
<div class="cb" style="left:249px;top:31px"></div>
<div class="tx" style="left:267px;top:31px;width:72px">确认起始日期<svg width="73" height="12" fill="#000"><use href="#r786e" x="0"/><use href="#r8ba4" x="12"/><use href="#r8d77" x="24"/><use href="#r59cb" x="36"/><use href="#r65e5" x="48"/><use href="#r671f" x="60"/></svg></div>
<div class="inp" style="left:349px;top:27px;width:89px;height:20px"></div>
<div class="tx" style="left:351px;top:31px;width:60px">2017-10-18<svg width="61" height="12" fill="#6d6d6d"><use href="#r32" x="0"/><use href="#r30" x="6"/><use href="#r31" x="12"/><use href="#r37" x="18"/><use href="#r2d" x="24"/><use href="#r31" x="30"/><use href="#r30" x="36"/><use href="#r2d" x="42"/><use href="#r31" x="48"/><use href="#r38" x="54"/></svg></div>
<div class="arr" style="left:427px;top:35px;border-top-color:#a8a8a8"></div>
<div class="cb" style="left:445px;top:31px"></div>
<div class="tx" style="left:463px;top:31px;width:72px">确认终止日期<svg width="73" height="12" fill="#000"><use href="#r786e" x="0"/><use href="#r8ba4" x="12"/><use href="#r7ec8" x="24"/><use href="#r6b62" x="36"/><use href="#r65e5" x="48"/><use href="#r671f" x="60"/></svg></div>
<div class="inp" style="left:541px;top:27px;width:89px;height:20px"></div>
<div class="tx" style="left:542px;top:31px;width:60px">2017-11-17<svg width="61" height="12" fill="#6d6d6d"><use href="#r32" x="0"/><use href="#r30" x="6"/><use href="#r31" x="12"/><use href="#r37" x="18"/><use href="#r2d" x="24"/><use href="#r31" x="30"/><use href="#r31" x="36"/><use href="#r2d" x="42"/><use href="#r31" x="48"/><use href="#r37" x="54"/></svg></div>
<div class="arr" style="left:619px;top:35px;border-top-color:#a8a8a8"></div>
<div class="btn" style="left:636px;top:24px;width:63px;height:23px"></div>
<svg style="position:absolute;left:645px;top:27px" width="18" height="18">
<line x1="2.5" y1="15.5" x2="7" y2="11" stroke="#e8a030" stroke-width="2.2" stroke-linecap="round"/>
<circle cx="11" cy="6.5" r="5" fill="#bff4fa" stroke="#9a90e0" stroke-width="1.2"/>
<circle cx="9" cy="5" r="1.5" fill="#fff"/></svg>
<div class="tx" style="left:666px;top:30px;width:24px">查询<svg width="25" height="12" fill="#000"><use href="#r67e5" x="0"/><use href="#r8be2" x="12"/></svg></div>
<div class="btn" style="left:702px;top:24px;width:68px;height:23px"></div>
<svg style="position:absolute;left:704px;top:25px" width="22" height="21">
<polygon points="4.5,5.5 7,3 14,9.5 10.5,13" fill="#fff" stroke="#66b0f0" stroke-width="1"/>
<polygon points="10,12.5 14,8.5 18,10.5 12,17 10,16.5" fill="#f00000"/>
<polygon points="10,12.5 12.5,14 12,17 10,16.5" fill="#a00000"/>
<polygon points="12.5,14 17.5,10 18,11 12,17" fill="#a00000"/>
<rect x="14.5" y="10" width="2.5" height="1" fill="#f0a040"/>
<rect x="10" y="5" width="1" height="1" fill="#f00"/><rect x="11" y="6" width="1" height="1" fill="#f00"/></svg>
<div class="tx" style="left:728px;top:30px;width:36px">新查询<svg width="37" height="12" fill="#000"><use href="#r65b0" x="0"/><use href="#r67e5" x="12"/><use href="#r8be2" x="24"/></svg></div>
<div class="btn" style="left:774px;top:24px;width:63px;height:23px"></div>
<svg style="position:absolute;left:781px;top:29px" width="16" height="13" shape-rendering="crispEdges">
<path d="M3 0h4v3h1v3h-1v7h-6v-7h0v-3h2z" fill="#111"/><path d="M9 0h4v3h1v3h1v7h-6v-4h-1v-3h1z" fill="#111"/>
<rect x="7" y="3" width="2" height="3" fill="#222"/>
<rect x="5" y="1" width="1" height="1" fill="#ddd"/><rect x="11" y="1" width="1" height="1" fill="#ddd"/>
<rect x="2" y="7" width="1" height="2" fill="#888"/><rect x="4" y="7" width="1" height="2" fill="#777"/><rect x="2" y="10" width="1" height="2" fill="#888"/><rect x="4" y="10" width="1" height="2" fill="#777"/>
<rect x="11" y="7" width="1" height="2" fill="#888"/><rect x="13" y="7" width="1" height="2" fill="#777"/><rect x="11" y="10" width="1" height="2" fill="#888"/><rect x="13" y="10" width="1" height="2" fill="#777"/>
<rect x="4" y="4" width="1" height="1" fill="#777"/><rect x="11" y="4" width="1" height="1" fill="#777"/></svg>
<div class="tx" style="left:801px;top:30px;width:30px">查找F<svg width="31" height="12" fill="#000"><use href="#r67e5" x="0"/><use href="#r627e" x="12"/><use href="#r46" x="24"/><rect x="24" y="11" width="6" height="1"/></svg></div>
<div class="btn" style="left:841px;top:24px;width:67px;height:23px"></div>
<svg style="position:absolute;left:853px;top:28px" width="16" height="16" shape-rendering="crispEdges">
<defs><pattern id="chk" width="2" height="2" patternUnits="userSpaceOnUse"><rect width="2" height="2" fill="#8cc48c"/><rect width="1" height="1" fill="#007a00"/><rect x="1" y="1" width="1" height="1" fill="#007a00"/></pattern></defs>
<rect x="2" y="2" width="12" height="12" fill="#fff"/><path d="M0 0h16v16h-16z M2 2v12h12v-12z" fill="url(#chk)" fill-rule="evenodd"/>
<path d="M3 4h4l6 8v1h-4l-6-8z" fill="url(#chk)"/><path d="M13 4v1l-6 8h-4v-1l6-8z" fill="url(#chk)"/>
<path d="M4.5 5.5l7 7" stroke="#fff" stroke-width="1" shape-rendering="auto"/><rect x="12" y="12" width="3" height="1" fill="#007a00"/></svg>
<div class="tx" style="left:873px;top:30px;width:24px">导出<svg width="25" height="12" fill="#000"><use href="#r5bfc" x="0"/><use href="#r51fa" x="12"/></svg></div>
<div class="btn" style="left:912px;top:24px;width:95px;height:23px"></div>
<svg style="position:absolute;left:918px;top:26px" width="20" height="20">
<line x1="7" y1="2.5" x2="17.5" y2="12.5" stroke="#e8a830" stroke-width="1.8"/>
<polygon points="7,2 13,8.5 9,18.5 2.5,11 2,8" fill="#111"/>
<rect x="6" y="6" width="2" height="2" fill="#fff"/><rect x="9" y="7" width="2" height="2" fill="#fff"/>
<rect x="4" y="10" width="2" height="2" fill="#fff"/><rect x="8" y="10" width="2" height="2" fill="#fff"/>
<rect x="6" y="13" width="2" height="2" fill="#fff"/><rect x="11" y="10" width="1" height="2" fill="#fff"/></svg>
<div class="tx" style="left:940px;top:30px;width:60px">生成甘特图<svg width="61" height="12" fill="#000"><use href="#r751f" x="0"/><use href="#r6210" x="12"/><use href="#r7518" x="24"/><use href="#r7279" x="36"/><use href="#r56fe" x="48"/></svg></div>
<div class="tx" style="left:17px;top:51px;width:48px">对应承包<svg width="49" height="12" fill="#000"><use href="#r5bf9" x="0"/><use href="#r5e94" x="12"/><use href="#r627f" x="24"/><use href="#r5305" x="36"/></svg></div>
<div class="tx" style="left:17px;top:63px;width:48px">合同编号<svg width="49" height="12" fill="#000"><use href="#r5408" x="0"/><use href="#r540c" x="12"/><use href="#r7f16" x="24"/><use href="#r53f7" x="36"/></svg></div>
<div class="inp" style="left:73px;top:55px;width:141px;height:20px;border-color:#d2d6dc"></div>
<div class="arr" style="left:201px;top:63px"></div>
<svg style="position:absolute;left:219px;top:58px" width="18" height="16">
<path d="M1.5,3.5 h5 l1,1.5 h6 v2 h-12z" fill="#e8c860" stroke="#b08a20" stroke-width="1"/>
<path d="M1.5,13.5 l2.5,-7 h12 l-2.5,7z" fill="#fce890" stroke="#b08a20" stroke-width="1"/></svg>
<div class="tx" style="left:249px;top:51px;width:48px">对应合同<svg width="49" height="12" fill="#000"><use href="#r5bf9" x="0"/><use href="#r5e94" x="12"/><use href="#r5408" x="24"/><use href="#r540c" x="36"/></svg></div>
<div class="tx" style="left:249px;top:63px;width:48px">执行进度<svg width="49" height="12" fill="#000"><use href="#r6267" x="0"/><use href="#r884c" x="12"/><use href="#r8fdb" x="24"/><use href="#r5ea6" x="36"/></svg></div>
<div class="inp" style="left:302px;top:55px;width:136px;height:20px;border-color:#d2d6dc"></div>
<div class="arr" style="left:425px;top:63px"></div>
<div class="tx" style="left:445px;top:59px;width:48px">显示方式<svg width="49" height="12" fill="#000"><use href="#r663e" x="0"/><use href="#r793a" x="12"/><use href="#r65b9" x="24"/><use href="#r5f0f" x="36"/></svg></div>
<div class="cmbg" style="left:497px;top:55px;width:133px;height:20px"></div>
<div style="position:absolute;left:610px;top:57px;width:1px;height:16px;background:#fafafa"></div>
<div class="arr" style="left:617px;top:63px"></div>
<div class="tx" style="left:637px;top:59px;width:60px">清单关键字<svg width="61" height="12" fill="#000"><use href="#r6e05" x="0"/><use href="#r5355" x="12"/><use href="#r5173" x="24"/><use href="#r952e" x="36"/><use href="#r5b57" x="48"/></svg></div>
<div class="inp" style="left:706px;top:55px;width:92px;height:20px;border-color:#d2d6dc"></div>
<div class="cb" style="left:805px;top:59px"></div>
<svg style="position:absolute;left:807px;top:61px" width="10" height="10"><path d="M1.5,5 L4,8.5 L8.5,1.5" fill="none" stroke="#3a4fa8" stroke-width="1.6"/></svg>
<div class="tx" style="left:823px;top:59px;width:72px">自动展开清单<svg width="73" height="12" fill="#000"><use href="#r81ea" x="0"/><use href="#r52a8" x="12"/><use href="#r5c55" x="24"/><use href="#r5f00" x="36"/><use href="#r6e05" x="48"/><use href="#r5355" x="60"/></svg></div>
<div class="btn" style="left:912px;top:53px;width:95px;height:23px"></div>
<svg style="position:absolute;left:914px;top:54px" width="24" height="22">
<polygon points="7,3.5 15.5,3.5 18.5,6.5 18.5,12.5 15.5,15.5 13,15.5 12.5,18.5 10,15.5 7,15.5 4.5,12.5 4.5,6.5" fill="#fff" stroke="#0838a8" stroke-width="1.3" stroke-linejoin="round"/>
<circle cx="11.5" cy="6.6" r="1.4" fill="#0838a8"/><rect x="10.3" y="9" width="2.6" height="4.3" fill="#0838a8"/><rect x="9" y="12.6" width="5.2" height="1.2" fill="#0838a8"/><rect x="9" y="9" width="2" height="1" fill="#0838a8"/></svg>
<div class="tx" style="left:946px;top:58px;width:48px">列名解释<svg width="49" height="12" fill="#000"><use href="#r5217" x="0"/><use href="#r540d" x="12"/><use href="#r89e3" x="24"/><use href="#r91ca" x="36"/></svg></div>
<div style="position:absolute;left:8px;top:84px;width:1166px;height:456px;background:#fff;border-left:2px solid #a0a0a0;border-right:1px solid #a0a0a0"></div>
<div style="position:absolute;left:10px;top:85px;width:1146px;height:17px;background:linear-gradient(#fbfbfb,#eeeeee)"></div>
<div class="tx" style="left:34px;top:87px;width:24px">编号<svg width="25" height="12" fill="#000"><use href="#r7f16" x="0"/><use href="#r53f7" x="12"/></svg></div>
<div class="tx" style="left:98px;top:87px;width:24px">类别<svg width="25" height="12" fill="#000"><use href="#r7c7b" x="0"/><use href="#r522b" x="12"/></svg></div>
<div class="tx" style="left:245px;top:87px;width:48px">项目名称<svg width="49" height="12" fill="#000"><use href="#r9879" x="0"/><use href="#r76ee" x="12"/><use href="#r540d" x="24"/><use href="#r79f0" x="36"/></svg></div>
<div class="tx" style="left:415px;top:87px;width:48px">计量单位<svg width="49" height="12" fill="#000"><use href="#r8ba1" x="0"/><use href="#r91cf" x="12"/><use href="#r5355" x="24"/><use href="#r4f4d" x="36"/></svg></div>
<div class="tx" style="left:470px;top:87px;width:72px">工程量(预算)<svg width="73" height="12" fill="#000"><use href="#r5de5" x="0"/><use href="#r7a0b" x="12"/><use href="#r91cf" x="24"/><use href="#r28" x="36"/><use href="#r9884" x="42"/><use href="#r7b97" x="54"/><use href="#r29" x="66"/></svg></div>
<div class="tx" style="left:550px;top:87px;width:60px">形象完成量<svg width="61" height="12" fill="#000"><use href="#r5f62" x="0"/><use href="#r8c61" x="12"/><use href="#r5b8c" x="24"/><use href="#r6210" x="36"/><use href="#r91cf" x="48"/></svg></div>
<div class="tx" style="left:617px;top:87px;width:54px">形象完成%<svg width="55" height="12" fill="#000"><use href="#r5f62" x="0"/><use href="#r8c61" x="12"/><use href="#r5b8c" x="24"/><use href="#r6210" x="36"/><use href="#r25" x="48"/></svg></div>
<div class="tx" style="left:678px;top:87px;width:60px">实际完成量<svg width="61" height="12" fill="#000"><use href="#r5b9e" x="0"/><use href="#r9645" x="12"/><use href="#r5b8c" x="24"/><use href="#r6210" x="36"/><use href="#r91cf" x="48"/></svg></div>
<div class="tx" style="left:745px;top:87px;width:54px">实际完成%<svg width="55" height="12" fill="#000"><use href="#r5b9e" x="0"/><use href="#r9645" x="12"/><use href="#r5b8c" x="24"/><use href="#r6210" x="36"/><use href="#r25" x="48"/></svg></div>
<div class="tx" style="left:806px;top:87px;width:60px">分包合同量<svg width="61" height="12" fill="#000"><use href="#r5206" x="0"/><use href="#r5305" x="12"/><use href="#r5408" x="24"/><use href="#r540c" x="36"/><use href="#r91cf" x="48"/></svg></div>
<div class="tx" style="left:873px;top:87px;width:48px">确认完成<svg width="49" height="12" fill="#000"><use href="#r786e" x="0"/><use href="#r8ba4" x="12"/><use href="#r5b8c" x="24"/><use href="#r6210" x="36"/></svg></div>
<div class="tx" style="left:929px;top:87px;width:54px">分包完成%<svg width="55" height="12" fill="#000"><use href="#r5206" x="0"/><use href="#r5305" x="12"/><use href="#r5b8c" x="24"/><use href="#r6210" x="36"/><use href="#r25" x="48"/></svg></div>
<div class="tx" style="left:997px;top:87px;width:48px">预算产值<svg width="49" height="12" fill="#000"><use href="#r9884" x="0"/><use href="#r7b97" x="12"/><use href="#r4ea7" x="24"/><use href="#r503c" x="36"/></svg></div>
<div class="tx" style="left:1059px;top:87px;width:72px">形象完成产值<svg width="73" height="12" fill="#000"><use href="#r5f62" x="0"/><use href="#r8c61" x="12"/><use href="#r5b8c" x="24"/><use href="#r6210" x="36"/><use href="#r4ea7" x="48"/><use href="#r503c" x="60"/></svg></div>
<div style="position:absolute;left:24px;top:86px;width:1px;height:15px;background:#c8c8c8"></div>
<div style="position:absolute;left:25px;top:86px;width:1px;height:15px;background:#fff"></div>
<div style="position:absolute;left:93px;top:86px;width:1px;height:15px;background:#c8c8c8"></div>
<div style="position:absolute;left:94px;top:86px;width:1px;height:15px;background:#fff"></div>
<div style="position:absolute;left:125px;top:86px;width:1px;height:15px;background:#c8c8c8"></div>
<div style="position:absolute;left:126px;top:86px;width:1px;height:15px;background:#fff"></div>
<div style="position:absolute;left:411px;top:86px;width:1px;height:15px;background:#c8c8c8"></div>
<div style="position:absolute;left:412px;top:86px;width:1px;height:15px;background:#fff"></div>
<div style="position:absolute;left:465px;top:86px;width:1px;height:15px;background:#c8c8c8"></div>
<div style="position:absolute;left:466px;top:86px;width:1px;height:15px;background:#fff"></div>
<div style="position:absolute;left:545px;top:86px;width:1px;height:15px;background:#c8c8c8"></div>
<div style="position:absolute;left:546px;top:86px;width:1px;height:15px;background:#fff"></div>
<div style="position:absolute;left:613px;top:86px;width:1px;height:15px;background:#c8c8c8"></div>
<div style="position:absolute;left:614px;top:86px;width:1px;height:15px;background:#fff"></div>
<div style="position:absolute;left:674px;top:86px;width:1px;height:15px;background:#c8c8c8"></div>
<div style="position:absolute;left:675px;top:86px;width:1px;height:15px;background:#fff"></div>
<div style="position:absolute;left:740px;top:86px;width:1px;height:15px;background:#c8c8c8"></div>
<div style="position:absolute;left:741px;top:86px;width:1px;height:15px;background:#fff"></div>
<div style="position:absolute;left:802px;top:86px;width:1px;height:15px;background:#c8c8c8"></div>
<div style="position:absolute;left:803px;top:86px;width:1px;height:15px;background:#fff"></div>
<div style="position:absolute;left:868px;top:86px;width:1px;height:15px;background:#c8c8c8"></div>
<div style="position:absolute;left:869px;top:86px;width:1px;height:15px;background:#fff"></div>
<div style="position:absolute;left:924px;top:86px;width:1px;height:15px;background:#c8c8c8"></div>
<div style="position:absolute;left:925px;top:86px;width:1px;height:15px;background:#fff"></div>
<div style="position:absolute;left:986px;top:86px;width:1px;height:15px;background:#c8c8c8"></div>
<div style="position:absolute;left:987px;top:86px;width:1px;height:15px;background:#fff"></div>
<div style="position:absolute;left:1054px;top:86px;width:1px;height:15px;background:#c8c8c8"></div>
<div style="position:absolute;left:1055px;top:86px;width:1px;height:15px;background:#fff"></div>
<div style="position:absolute;left:1134px;top:86px;width:1px;height:15px;background:#c8c8c8"></div>
<div style="position:absolute;left:1135px;top:86px;width:1px;height:15px;background:#fff"></div>
<div style="position:absolute;left:10px;top:102px;width:1146px;height:1px;background:#dadada"></div>
<div style="position:absolute;left:10px;top:103px;width:1146px;height:419px;overflow:hidden">
<div style="position:absolute;left:0px;top:0px;width:14px;height:16px;background:#f0f0f0"></div>
<div style="position:absolute;left:0px;top:16px;width:14px;height:1px;background:#a8a8a8"></div>
<div style="position:absolute;left:14px;top:-1px;width:1px;height:18px;background:#a0a0a0"></div>
<div style="position:absolute;left:15px;top:0px;width:1131px;height:16px;background:#3399ff"></div>
<div style="position:absolute;left:15px;top:16px;width:1131px;height:1px;background:#a0a0a0"></div>
<div style="position:absolute;left:83px;top:-1px;width:1px;height:18px;background:#a0a0a0"></div>
<div style="position:absolute;left:115px;top:-1px;width:1px;height:18px;background:#a0a0a0"></div>
<div style="position:absolute;left:401px;top:-1px;width:1px;height:18px;background:#a0a0a0"></div>
<div style="position:absolute;left:455px;top:-1px;width:1px;height:18px;background:#a0a0a0"></div>
<div style="position:absolute;left:535px;top:-1px;width:1px;height:18px;background:#a0a0a0"></div>
<div style="position:absolute;left:603px;top:-1px;width:1px;height:18px;background:#a0a0a0"></div>
<div style="position:absolute;left:664px;top:-1px;width:1px;height:18px;background:#a0a0a0"></div>
<div style="position:absolute;left:730px;top:-1px;width:1px;height:18px;background:#a0a0a0"></div>
<div style="position:absolute;left:792px;top:-1px;width:1px;height:18px;background:#a0a0a0"></div>
<div style="position:absolute;left:858px;top:-1px;width:1px;height:18px;background:#a0a0a0"></div>
<div style="position:absolute;left:914px;top:-1px;width:1px;height:18px;background:#a0a0a0"></div>
<div style="position:absolute;left:976px;top:-1px;width:1px;height:18px;background:#a0a0a0"></div>
<div style="position:absolute;left:1044px;top:-1px;width:1px;height:18px;background:#a0a0a0"></div>
<div style="position:absolute;left:1124px;top:-1px;width:1px;height:18px;background:#a0a0a0"></div>
<div style="position:absolute;left:15px;top:0px;width:1131px;height:1px;background:repeating-linear-gradient(90deg,#d07020 0 1px,transparent 1px 2px)"></div>
<div style="position:absolute;left:15px;top:15px;width:1131px;height:1px;background:repeating-linear-gradient(90deg,#d07020 0 1px,transparent 1px 2px)"></div>
<div class="tx" style="left:87px;top:2px;width:26px">项目<svg width="27" height="12" fill="#fff"><use href="#b9879" x="0"/><use href="#b76ee" x="13"/></svg></div>
<div class="tx" style="left:118px;top:2px;width:104px">恒大温泉酒店三期<svg width="105" height="12" fill="#fff"><use href="#b6052" x="0"/><use href="#b5927" x="13"/><use href="#b6e29" x="26"/><use href="#b6cc9" x="39"/><use href="#b9152" x="52"/><use href="#b5e97" x="65"/><use href="#b4e09" x="78"/><use href="#b671f" x="91"/></svg></div>
<div class="tx" style="left:619px;top:2px;width:42px">16.52%<svg width="43" height="12" fill="#fff"><use href="#b31" x="0"/><use href="#b36" x="7"/><use href="#b2e" x="14"/><use href="#b35" x="21"/><use href="#b32" x="28"/><use href="#b25" x="35"/></svg></div>
<div class="tx" style="left:747px;top:2px;width:42px">13.49%<svg width="43" height="12" fill="#fff"><use href="#b31" x="0"/><use href="#b33" x="7"/><use href="#b2e" x="14"/><use href="#b34" x="21"/><use href="#b39" x="28"/><use href="#b25" x="35"/></svg></div>
<div class="tx" style="left:978px;top:2px;width:63px">1261440.2<svg width="64" height="12" fill="#fff"><use href="#b31" x="0"/><use href="#b32" x="7"/><use href="#b36" x="14"/><use href="#b31" x="21"/><use href="#b34" x="28"/><use href="#b34" x="35"/><use href="#b30" x="42"/><use href="#b2e" x="49"/><use href="#b32" x="56"/></svg></div>
<div class="tx" style="left:1058px;top:2px;width:63px">208435.27<svg width="64" height="12" fill="#fff"><use href="#b32" x="0"/><use href="#b30" x="7"/><use href="#b38" x="14"/><use href="#b34" x="21"/><use href="#b33" x="28"/><use href="#b35" x="35"/><use href="#b2e" x="42"/><use href="#b32" x="49"/><use href="#b37" x="56"/></svg></div>
<div class="tx" style="left:1139px;top:2px;width:7px">1<svg width="8" height="12" fill="#fff"><use href="#b31" x="0"/></svg></div>
<div style="position:absolute;left:881px;top:2px;width:11px;height:11px;border:1px solid #000;background:#fff"></div>
<div style="position:absolute;left:4px;top:4px;width:0;height:0;border-top:5px solid transparent;border-bottom:5px solid transparent;border-left:6px solid #000"></div>
<div style="position:absolute;left:0px;top:17px;width:14px;height:16px;background:#f0f0f0"></div>
<div style="position:absolute;left:0px;top:33px;width:14px;height:1px;background:#a8a8a8"></div>
<div style="position:absolute;left:14px;top:16px;width:1px;height:18px;background:#a0a0a0"></div>
<div style="position:absolute;left:26px;top:17px;width:1120px;height:16px;background:#ffffff"></div>
<div style="position:absolute;left:25px;top:16px;width:1px;height:18px;background:#a0a0a0"></div>
<div style="position:absolute;left:25px;top:33px;width:1121px;height:1px;background:#a0a0a0"></div>
<div style="position:absolute;left:25px;top:16px;width:1121px;height:1px;background:#a0a0a0"></div>
<div style="position:absolute;left:83px;top:16px;width:1px;height:18px;background:#a0a0a0"></div>
<div style="position:absolute;left:115px;top:16px;width:1px;height:18px;background:#a0a0a0"></div>
<div style="position:absolute;left:401px;top:16px;width:1px;height:18px;background:#a0a0a0"></div>
<div style="position:absolute;left:455px;top:16px;width:1px;height:18px;background:#a0a0a0"></div>
<div style="position:absolute;left:535px;top:16px;width:1px;height:18px;background:#a0a0a0"></div>
<div style="position:absolute;left:603px;top:16px;width:1px;height:18px;background:#a0a0a0"></div>
<div style="position:absolute;left:664px;top:16px;width:1px;height:18px;background:#a0a0a0"></div>
<div style="position:absolute;left:730px;top:16px;width:1px;height:18px;background:#a0a0a0"></div>
<div style="position:absolute;left:792px;top:16px;width:1px;height:18px;background:#a0a0a0"></div>
<div style="position:absolute;left:858px;top:16px;width:1px;height:18px;background:#a0a0a0"></div>
<div style="position:absolute;left:914px;top:16px;width:1px;height:18px;background:#a0a0a0"></div>
<div style="position:absolute;left:976px;top:16px;width:1px;height:18px;background:#a0a0a0"></div>
<div style="position:absolute;left:1044px;top:16px;width:1px;height:18px;background:#a0a0a0"></div>
<div style="position:absolute;left:1124px;top:16px;width:1px;height:18px;background:#a0a0a0"></div>
<div class="tx" style="left:87px;top:19px;width:26px">部位<svg width="27" height="12" fill="#000"><use href="#b90e8" x="0"/><use href="#b4f4d" x="13"/></svg></div>
<div class="tx" style="left:118px;top:19px;width:114px">A.1  土(石)方工程<svg width="115" height="12" fill="#000"><use href="#b41" x="0"/><use href="#b2e" x="7"/><use href="#b31" x="14"/><use href="#b571f" x="35"/><use href="#b28" x="48"/><use href="#b77f3" x="55"/><use href="#b29" x="68"/><use href="#b65b9" x="75"/><use href="#b5de5" x="88"/><use href="#b7a0b" x="101"/></svg></div>
<div class="tx" style="left:619px;top:19px;width:42px">96.20%<svg width="43" height="12" fill="#000"><use href="#b39" x="0"/><use href="#b36" x="7"/><use href="#b2e" x="14"/><use href="#b32" x="21"/><use href="#b30" x="28"/><use href="#b25" x="35"/></svg></div>
<div class="tx" style="left:740px;top:19px;width:49px">197.70%<svg width="50" height="12" fill="#000"><use href="#b31" x="0"/><use href="#b39" x="7"/><use href="#b37" x="14"/><use href="#b2e" x="21"/><use href="#b37" x="28"/><use href="#b30" x="35"/><use href="#b25" x="42"/></svg></div>
<div class="tx" style="left:985px;top:19px;width:56px">86079.25<svg width="57" height="12" fill="#000"><use href="#b38" x="0"/><use href="#b36" x="7"/><use href="#b30" x="14"/><use href="#b37" x="21"/><use href="#b39" x="28"/><use href="#b2e" x="35"/><use href="#b32" x="42"/><use href="#b35" x="49"/></svg></div>
<div class="tx" style="left:1065px;top:19px;width:56px">82806.83<svg width="57" height="12" fill="#000"><use href="#b38" x="0"/><use href="#b32" x="7"/><use href="#b38" x="14"/><use href="#b30" x="21"/><use href="#b36" x="28"/><use href="#b2e" x="35"/><use href="#b38" x="42"/><use href="#b33" x="49"/></svg></div>
<div class="tx" style="left:1139px;top:19px;width:7px">1<svg width="8" height="12" fill="#000"><use href="#b31" x="0"/></svg></div>
<div style="position:absolute;left:881px;top:19px;width:11px;height:11px;border:1px solid #000;background:#fff"></div>
<div style="position:absolute;left:14px;top:19px;width:8px;height:11px;border:1px solid #2c4468;border-left:none;border-radius:0 2px 2px 0;background:linear-gradient(135deg,#f4f6fc,#c4cfe8)"></div>
<div style="position:absolute;left:15px;top:24px;width:4px;height:1px;background:#1a2a48"></div>
<div style="position:absolute;left:23px;top:24px;width:1px;height:1px;background:#888"></div>
<div style="position:absolute;left:16px;top:31px;width:1px;height:3px;background:repeating-linear-gradient(#8c8c8c 0 1px,transparent 1px 2px)"></div>
<div style="position:absolute;left:0px;top:34px;width:14px;height:16px;background:#f0f0f0"></div>
<div style="position:absolute;left:0px;top:50px;width:14px;height:1px;background:#a8a8a8"></div>
<div style="position:absolute;left:14px;top:33px;width:1px;height:18px;background:#a0a0a0"></div>
<div style="position:absolute;left:43px;top:34px;width:1103px;height:16px;background:#80ff80"></div>
<div style="position:absolute;left:42px;top:33px;width:1px;height:18px;background:#a0a0a0"></div>
<div style="position:absolute;left:42px;top:50px;width:1104px;height:1px;background:#a0a0a0"></div>
<div style="position:absolute;left:83px;top:33px;width:1px;height:18px;background:#a0a0a0"></div>
<div style="position:absolute;left:115px;top:33px;width:1px;height:18px;background:#a0a0a0"></div>
<div style="position:absolute;left:401px;top:33px;width:1px;height:18px;background:#a0a0a0"></div>
<div style="position:absolute;left:455px;top:33px;width:1px;height:18px;background:#a0a0a0"></div>
<div style="position:absolute;left:535px;top:33px;width:1px;height:18px;background:#a0a0a0"></div>
<div style="position:absolute;left:603px;top:33px;width:1px;height:18px;background:#a0a0a0"></div>
<div style="position:absolute;left:664px;top:33px;width:1px;height:18px;background:#a0a0a0"></div>
<div style="position:absolute;left:730px;top:33px;width:1px;height:18px;background:#a0a0a0"></div>
<div style="position:absolute;left:792px;top:33px;width:1px;height:18px;background:#a0a0a0"></div>
<div style="position:absolute;left:858px;top:33px;width:1px;height:18px;background:#a0a0a0"></div>
<div style="position:absolute;left:914px;top:33px;width:1px;height:18px;background:#a0a0a0"></div>
<div style="position:absolute;left:976px;top:33px;width:1px;height:18px;background:#a0a0a0"></div>
<div style="position:absolute;left:1044px;top:33px;width:1px;height:18px;background:#a0a0a0"></div>
<div style="position:absolute;left:1124px;top:33px;width:1px;height:18px;background:#a0a0a0"></div>
<div class="tx" style="left:45px;top:36px;width:36px">010101<svg width="37" height="12" fill="#000"><use href="#r30" x="0"/><use href="#r31" x="6"/><use href="#r30" x="12"/><use href="#r31" x="18"/><use href="#r30" x="24"/><use href="#r31" x="30"/></svg></div>
<div class="tx" style="left:88px;top:36px;width:24px">清单<svg width="25" height="12" fill="#000"><use href="#r6e05" x="0"/><use href="#r5355" x="12"/></svg></div>
<div class="tx" style="left:118px;top:36px;width:60px">挖基础土方<svg width="61" height="12" fill="#000"><use href="#r6316" x="0"/><use href="#r57fa" x="12"/><use href="#r7840" x="24"/><use href="#r571f" x="36"/><use href="#r65b9" x="48"/></svg></div>
<div class="tx" style="left:423px;top:36px;width:12px">m3<svg width="13" height="12" fill="#000"><use href="#r6d" x="0"/><use href="#r33" x="6"/></svg></div>
<div class="tx" style="left:491px;top:36px;width:42px">1518.92<svg width="43" height="12" fill="#000"><use href="#r31" x="0"/><use href="#r35" x="6"/><use href="#r31" x="12"/><use href="#r38" x="18"/><use href="#r2e" x="24"/><use href="#r39" x="30"/><use href="#r32" x="36"/></svg></div>
<div class="tx" style="left:559px;top:36px;width:42px">1518.92<svg width="43" height="12" fill="#000"><use href="#r31" x="0"/><use href="#r35" x="6"/><use href="#r31" x="12"/><use href="#r38" x="18"/><use href="#r2e" x="24"/><use href="#r39" x="30"/><use href="#r32" x="36"/></svg></div>
<div class="tx" style="left:620px;top:36px;width:42px">100.00%<svg width="43" height="12" fill="#000"><use href="#r31" x="0"/><use href="#r30" x="6"/><use href="#r30" x="12"/><use href="#r2e" x="18"/><use href="#r30" x="24"/><use href="#r30" x="30"/><use href="#r25" x="36"/></svg></div>
<div class="tx" style="left:686px;top:36px;width:42px">4556.76<svg width="43" height="12" fill="#000"><use href="#r34" x="0"/><use href="#r35" x="6"/><use href="#r35" x="12"/><use href="#r36" x="18"/><use href="#r2e" x="24"/><use href="#r37" x="30"/><use href="#r36" x="36"/></svg></div>
<div class="tx" style="left:748px;top:36px;width:42px">300.00%<svg width="43" height="12" fill="#000"><use href="#r33" x="0"/><use href="#r30" x="6"/><use href="#r30" x="12"/><use href="#r2e" x="18"/><use href="#r30" x="24"/><use href="#r30" x="30"/><use href="#r25" x="36"/></svg></div>
<div class="tx" style="left:814px;top:36px;width:42px">3037.84<svg width="43" height="12" fill="#000"><use href="#r33" x="0"/><use href="#r30" x="6"/><use href="#r33" x="12"/><use href="#r37" x="18"/><use href="#r2e" x="24"/><use href="#r38" x="30"/><use href="#r34" x="36"/></svg></div>
<div class="tx" style="left:932px;top:36px;width:42px">150.00%<svg width="43" height="12" fill="#000"><use href="#r31" x="0"/><use href="#r35" x="6"/><use href="#r30" x="12"/><use href="#r2e" x="18"/><use href="#r30" x="24"/><use href="#r30" x="30"/><use href="#r25" x="36"/></svg></div>
<div class="tx" style="left:994px;top:36px;width:48px">24378.67<svg width="49" height="12" fill="#000"><use href="#r32" x="0"/><use href="#r34" x="6"/><use href="#r33" x="12"/><use href="#r37" x="18"/><use href="#r38" x="24"/><use href="#r2e" x="30"/><use href="#r36" x="36"/><use href="#r37" x="42"/></svg></div>
<div class="tx" style="left:1074px;top:36px;width:48px">24378.67<svg width="49" height="12" fill="#000"><use href="#r32" x="0"/><use href="#r34" x="6"/><use href="#r33" x="12"/><use href="#r37" x="18"/><use href="#r38" x="24"/><use href="#r2e" x="30"/><use href="#r36" x="36"/><use href="#r37" x="42"/></svg></div>
<div style="position:absolute;left:881px;top:36px;width:11px;height:11px;border:1px solid #000;background:#fff"></div>
<div style="position:absolute;left:16px;top:33px;width:1px;height:17px;background:repeating-linear-gradient(#8c8c8c 0 1px,transparent 1px 2px)"></div>
<div style="position:absolute;left:33px;top:33px;width:1px;height:17px;background:repeating-linear-gradient(#8c8c8c 0 1px,transparent 1px 2px)"></div>
<div style="position:absolute;left:34px;top:41px;width:8px;height:1px;background:repeating-linear-gradient(90deg,#8c8c8c 0 1px,transparent 1px 2px)"></div>
<div style="position:absolute;left:0px;top:51px;width:14px;height:16px;background:#f0f0f0"></div>
<div style="position:absolute;left:0px;top:67px;width:14px;height:1px;background:#a8a8a8"></div>
<div style="position:absolute;left:14px;top:50px;width:1px;height:18px;background:#a0a0a0"></div>
<div style="position:absolute;left:43px;top:51px;width:1103px;height:16px;background:#80ff80"></div>
<div style="position:absolute;left:42px;top:50px;width:1px;height:18px;background:#a0a0a0"></div>
<div style="position:absolute;left:42px;top:67px;width:1104px;height:1px;background:#a0a0a0"></div>
<div style="position:absolute;left:83px;top:50px;width:1px;height:18px;background:#a0a0a0"></div>
<div style="position:absolute;left:115px;top:50px;width:1px;height:18px;background:#a0a0a0"></div>
<div style="position:absolute;left:401px;top:50px;width:1px;height:18px;background:#a0a0a0"></div>
<div style="position:absolute;left:455px;top:50px;width:1px;height:18px;background:#a0a0a0"></div>
<div style="position:absolute;left:535px;top:50px;width:1px;height:18px;background:#a0a0a0"></div>
<div style="position:absolute;left:603px;top:50px;width:1px;height:18px;background:#a0a0a0"></div>
<div style="position:absolute;left:664px;top:50px;width:1px;height:18px;background:#a0a0a0"></div>
<div style="position:absolute;left:730px;top:50px;width:1px;height:18px;background:#a0a0a0"></div>
<div style="position:absolute;left:792px;top:50px;width:1px;height:18px;background:#a0a0a0"></div>
<div style="position:absolute;left:858px;top:50px;width:1px;height:18px;background:#a0a0a0"></div>
<div style="position:absolute;left:914px;top:50px;width:1px;height:18px;background:#a0a0a0"></div>
<div style="position:absolute;left:976px;top:50px;width:1px;height:18px;background:#a0a0a0"></div>
<div style="position:absolute;left:1044px;top:50px;width:1px;height:18px;background:#a0a0a0"></div>
<div style="position:absolute;left:1124px;top:50px;width:1px;height:18px;background:#a0a0a0"></div>
<div class="tx" style="left:45px;top:53px;width:36px">010103<svg width="37" height="12" fill="#000"><use href="#r30" x="0"/><use href="#r31" x="6"/><use href="#r30" x="12"/><use href="#r31" x="18"/><use href="#r30" x="24"/><use href="#r33" x="30"/></svg></div>
<div class="tx" style="left:88px;top:53px;width:24px">清单<svg width="25" height="12" fill="#000"><use href="#r6e05" x="0"/><use href="#r5355" x="12"/></svg></div>
<div class="tx" style="left:118px;top:53px;width:72px">土(石)方回填<svg width="73" height="12" fill="#000"><use href="#r571f" x="0"/><use href="#r28" x="12"/><use href="#r77f3" x="18"/><use href="#r29" x="30"/><use href="#r65b9" x="36"/><use href="#r56de" x="48"/><use href="#r586b" x="60"/></svg></div>
<div class="tx" style="left:423px;top:53px;width:12px">m3<svg width="13" height="12" fill="#000"><use href="#r6d" x="0"/><use href="#r33" x="6"/></svg></div>
<div class="tx" style="left:497px;top:53px;width:36px">712.84<svg width="37" height="12" fill="#000"><use href="#r37" x="0"/><use href="#r31" x="6"/><use href="#r32" x="12"/><use href="#r2e" x="18"/><use href="#r38" x="24"/><use href="#r34" x="30"/></svg></div>
<div class="tx" style="left:565px;top:53px;width:36px">712.84<svg width="37" height="12" fill="#000"><use href="#r37" x="0"/><use href="#r31" x="6"/><use href="#r32" x="12"/><use href="#r2e" x="18"/><use href="#r38" x="24"/><use href="#r34" x="30"/></svg></div>
<div class="tx" style="left:620px;top:53px;width:42px">100.00%<svg width="43" height="12" fill="#000"><use href="#r31" x="0"/><use href="#r30" x="6"/><use href="#r30" x="12"/><use href="#r2e" x="18"/><use href="#r30" x="24"/><use href="#r30" x="30"/><use href="#r25" x="36"/></svg></div>
<div class="tx" style="left:686px;top:53px;width:42px">2138.52<svg width="43" height="12" fill="#000"><use href="#r32" x="0"/><use href="#r31" x="6"/><use href="#r33" x="12"/><use href="#r38" x="18"/><use href="#r2e" x="24"/><use href="#r35" x="30"/><use href="#r32" x="36"/></svg></div>
<div class="tx" style="left:748px;top:53px;width:42px">300.00%<svg width="43" height="12" fill="#000"><use href="#r33" x="0"/><use href="#r30" x="6"/><use href="#r30" x="12"/><use href="#r2e" x="18"/><use href="#r30" x="24"/><use href="#r30" x="30"/><use href="#r25" x="36"/></svg></div>
<div class="tx" style="left:814px;top:53px;width:42px">1425.68<svg width="43" height="12" fill="#000"><use href="#r31" x="0"/><use href="#r34" x="6"/><use href="#r32" x="12"/><use href="#r35" x="18"/><use href="#r2e" x="24"/><use href="#r36" x="30"/><use href="#r38" x="36"/></svg></div>
<div class="tx" style="left:932px;top:53px;width:42px">150.00%<svg width="43" height="12" fill="#000"><use href="#r31" x="0"/><use href="#r35" x="6"/><use href="#r30" x="12"/><use href="#r2e" x="18"/><use href="#r30" x="24"/><use href="#r30" x="30"/><use href="#r25" x="36"/></svg></div>
<div class="tx" style="left:994px;top:53px;width:48px">17671.30<svg width="49" height="12" fill="#000"><use href="#r31" x="0"/><use href="#r37" x="6"/><use href="#r36" x="12"/><use href="#r37" x="18"/><use href="#r31" x="24"/><use href="#r2e" x="30"/><use href="#r33" x="36"/><use href="#r30" x="42"/></svg></div>
<div class="tx" style="left:1074px;top:53px;width:48px">17671.30<svg width="49" height="12" fill="#000"><use href="#r31" x="0"/><use href="#r37" x="6"/><use href="#r36" x="12"/><use href="#r37" x="18"/><use href="#r31" x="24"/><use href="#r2e" x="30"/><use href="#r33" x="36"/><use href="#r30" x="42"/></svg></div>
<div style="position:absolute;left:881px;top:53px;width:11px;height:11px;border:1px solid #000;background:#fff"></div>
<div style="position:absolute;left:16px;top:51px;width:1px;height:16px;background:repeating-linear-gradient(#8c8c8c 0 1px,transparent 1px 2px)"></div>
<div style="position:absolute;left:33px;top:51px;width:1px;height:16px;background:repeating-linear-gradient(#8c8c8c 0 1px,transparent 1px 2px)"></div>
<div style="position:absolute;left:34px;top:58px;width:8px;height:1px;background:repeating-linear-gradient(90deg,#8c8c8c 0 1px,transparent 1px 2px)"></div>
<div style="position:absolute;left:0px;top:68px;width:14px;height:16px;background:#f0f0f0"></div>
<div style="position:absolute;left:0px;top:84px;width:14px;height:1px;background:#a8a8a8"></div>
<div style="position:absolute;left:14px;top:67px;width:1px;height:18px;background:#a0a0a0"></div>
<div style="position:absolute;left:43px;top:68px;width:1103px;height:16px;background:#80ff80"></div>
<div style="position:absolute;left:42px;top:67px;width:1px;height:18px;background:#a0a0a0"></div>
<div style="position:absolute;left:42px;top:84px;width:1104px;height:1px;background:#a0a0a0"></div>
<div style="position:absolute;left:83px;top:67px;width:1px;height:18px;background:#a0a0a0"></div>
<div style="position:absolute;left:115px;top:67px;width:1px;height:18px;background:#a0a0a0"></div>
<div style="position:absolute;left:401px;top:67px;width:1px;height:18px;background:#a0a0a0"></div>
<div style="position:absolute;left:455px;top:67px;width:1px;height:18px;background:#a0a0a0"></div>
<div style="position:absolute;left:535px;top:67px;width:1px;height:18px;background:#a0a0a0"></div>
<div style="position:absolute;left:603px;top:67px;width:1px;height:18px;background:#a0a0a0"></div>
<div style="position:absolute;left:664px;top:67px;width:1px;height:18px;background:#a0a0a0"></div>
<div style="position:absolute;left:730px;top:67px;width:1px;height:18px;background:#a0a0a0"></div>
<div style="position:absolute;left:792px;top:67px;width:1px;height:18px;background:#a0a0a0"></div>
<div style="position:absolute;left:858px;top:67px;width:1px;height:18px;background:#a0a0a0"></div>
<div style="position:absolute;left:914px;top:67px;width:1px;height:18px;background:#a0a0a0"></div>
<div style="position:absolute;left:976px;top:67px;width:1px;height:18px;background:#a0a0a0"></div>
<div style="position:absolute;left:1044px;top:67px;width:1px;height:18px;background:#a0a0a0"></div>
<div style="position:absolute;left:1124px;top:67px;width:1px;height:18px;background:#a0a0a0"></div>
<div class="tx" style="left:45px;top:70px;width:36px">010103<svg width="37" height="12" fill="#000"><use href="#r30" x="0"/><use href="#r31" x="6"/><use href="#r30" x="12"/><use href="#r31" x="18"/><use href="#r30" x="24"/><use href="#r33" x="30"/></svg></div>
<div class="tx" style="left:88px;top:70px;width:24px">清单<svg width="25" height="12" fill="#000"><use href="#r6e05" x="0"/><use href="#r5355" x="12"/></svg></div>
<div class="tx" style="left:118px;top:70px;width:72px">土(石)方回填<svg width="73" height="12" fill="#000"><use href="#r571f" x="0"/><use href="#r28" x="12"/><use href="#r77f3" x="18"/><use href="#r29" x="30"/><use href="#r65b9" x="36"/><use href="#r56de" x="48"/><use href="#r586b" x="60"/></svg></div>
<div class="tx" style="left:423px;top:70px;width:12px">m3<svg width="13" height="12" fill="#000"><use href="#r6d" x="0"/><use href="#r33" x="6"/></svg></div>
<div class="tx" style="left:497px;top:70px;width:36px">321.68<svg width="37" height="12" fill="#000"><use href="#r33" x="0"/><use href="#r32" x="6"/><use href="#r31" x="12"/><use href="#r2e" x="18"/><use href="#r36" x="24"/><use href="#r38" x="30"/></svg></div>
<div class="tx" style="left:565px;top:70px;width:36px">321.68<svg width="37" height="12" fill="#000"><use href="#r33" x="0"/><use href="#r32" x="6"/><use href="#r31" x="12"/><use href="#r2e" x="18"/><use href="#r36" x="24"/><use href="#r38" x="30"/></svg></div>
<div class="tx" style="left:620px;top:70px;width:42px">100.00%<svg width="43" height="12" fill="#000"><use href="#r31" x="0"/><use href="#r30" x="6"/><use href="#r30" x="12"/><use href="#r2e" x="18"/><use href="#r30" x="24"/><use href="#r30" x="30"/><use href="#r25" x="36"/></svg></div>
<div class="tx" style="left:692px;top:70px;width:36px">321.68<svg width="37" height="12" fill="#000"><use href="#r33" x="0"/><use href="#r32" x="6"/><use href="#r31" x="12"/><use href="#r2e" x="18"/><use href="#r36" x="24"/><use href="#r38" x="30"/></svg></div>
<div class="tx" style="left:748px;top:70px;width:42px">100.00%<svg width="43" height="12" fill="#000"><use href="#r31" x="0"/><use href="#r30" x="6"/><use href="#r30" x="12"/><use href="#r2e" x="18"/><use href="#r30" x="24"/><use href="#r30" x="30"/><use href="#r25" x="36"/></svg></div>
<div class="tx" style="left:820px;top:70px;width:36px">321.68<svg width="37" height="12" fill="#000"><use href="#r33" x="0"/><use href="#r32" x="6"/><use href="#r31" x="12"/><use href="#r2e" x="18"/><use href="#r36" x="24"/><use href="#r38" x="30"/></svg></div>
<div class="tx" style="left:932px;top:70px;width:42px">100.00%<svg width="43" height="12" fill="#000"><use href="#r31" x="0"/><use href="#r30" x="6"/><use href="#r30" x="12"/><use href="#r2e" x="18"/><use href="#r30" x="24"/><use href="#r30" x="30"/><use href="#r25" x="36"/></svg></div>
<div class="tx" style="left:994px;top:70px;width:48px">40756.86<svg width="49" height="12" fill="#000"><use href="#r34" x="0"/><use href="#r30" x="6"/><use href="#r37" x="12"/><use href="#r35" x="18"/><use href="#r36" x="24"/><use href="#r2e" x="30"/><use href="#r38" x="36"/><use href="#r36" x="42"/></svg></div>
<div class="tx" style="left:1074px;top:70px;width:48px">40756.86<svg width="49" height="12" fill="#000"><use href="#r34" x="0"/><use href="#r30" x="6"/><use href="#r37" x="12"/><use href="#r35" x="18"/><use href="#r36" x="24"/><use href="#r2e" x="30"/><use href="#r38" x="36"/><use href="#r36" x="42"/></svg></div>
<div style="position:absolute;left:881px;top:70px;width:11px;height:11px;border:1px solid #000;background:#fff"></div>
<div style="position:absolute;left:16px;top:67px;width:1px;height:17px;background:repeating-linear-gradient(#8c8c8c 0 1px,transparent 1px 2px)"></div>
<div style="position:absolute;left:33px;top:67px;width:1px;height:17px;background:repeating-linear-gradient(#8c8c8c 0 1px,transparent 1px 2px)"></div>
<div style="position:absolute;left:34px;top:75px;width:8px;height:1px;background:repeating-linear-gradient(90deg,#8c8c8c 0 1px,transparent 1px 2px)"></div>
<div style="position:absolute;left:0px;top:85px;width:14px;height:16px;background:#f0f0f0"></div>
<div style="position:absolute;left:0px;top:101px;width:14px;height:1px;background:#a8a8a8"></div>
<div style="position:absolute;left:14px;top:84px;width:1px;height:18px;background:#a0a0a0"></div>
<div style="position:absolute;left:43px;top:85px;width:1103px;height:16px;background:#ffffff"></div>
<div style="position:absolute;left:42px;top:84px;width:1px;height:18px;background:#a0a0a0"></div>
<div style="position:absolute;left:42px;top:101px;width:1104px;height:1px;background:#a0a0a0"></div>
<div style="position:absolute;left:83px;top:84px;width:1px;height:18px;background:#a0a0a0"></div>
<div style="position:absolute;left:115px;top:84px;width:1px;height:18px;background:#a0a0a0"></div>
<div style="position:absolute;left:401px;top:84px;width:1px;height:18px;background:#a0a0a0"></div>
<div style="position:absolute;left:455px;top:84px;width:1px;height:18px;background:#a0a0a0"></div>
<div style="position:absolute;left:535px;top:84px;width:1px;height:18px;background:#a0a0a0"></div>
<div style="position:absolute;left:603px;top:84px;width:1px;height:18px;background:#a0a0a0"></div>
<div style="position:absolute;left:664px;top:84px;width:1px;height:18px;background:#a0a0a0"></div>
<div style="position:absolute;left:730px;top:84px;width:1px;height:18px;background:#a0a0a0"></div>
<div style="position:absolute;left:792px;top:84px;width:1px;height:18px;background:#a0a0a0"></div>
<div style="position:absolute;left:858px;top:84px;width:1px;height:18px;background:#a0a0a0"></div>
<div style="position:absolute;left:914px;top:84px;width:1px;height:18px;background:#a0a0a0"></div>
<div style="position:absolute;left:976px;top:84px;width:1px;height:18px;background:#a0a0a0"></div>
<div style="position:absolute;left:1044px;top:84px;width:1px;height:18px;background:#a0a0a0"></div>
<div style="position:absolute;left:1124px;top:84px;width:1px;height:18px;background:#a0a0a0"></div>
<div class="tx" style="left:45px;top:87px;width:36px">010103<svg width="37" height="12" fill="#000"><use href="#r30" x="0"/><use href="#r31" x="6"/><use href="#r30" x="12"/><use href="#r31" x="18"/><use href="#r30" x="24"/><use href="#r33" x="30"/></svg></div>
<div class="tx" style="left:88px;top:87px;width:24px">清单<svg width="25" height="12" fill="#000"><use href="#r6e05" x="0"/><use href="#r5355" x="12"/></svg></div>
<div class="tx" style="left:118px;top:87px;width:60px">房心回填土<svg width="61" height="12" fill="#000"><use href="#r623f" x="0"/><use href="#r5fc3" x="12"/><use href="#r56de" x="24"/><use href="#r586b" x="36"/><use href="#r571f" x="48"/></svg></div>
<div class="tx" style="left:423px;top:87px;width:12px">m3<svg width="13" height="12" fill="#000"><use href="#r6d" x="0"/><use href="#r33" x="6"/></svg></div>
<div class="tx" style="left:503px;top:87px;width:30px">89.68<svg width="31" height="12" fill="#000"><use href="#r38" x="0"/><use href="#r39" x="6"/><use href="#r2e" x="12"/><use href="#r36" x="18"/><use href="#r38" x="24"/></svg></div>
<div class="tx" style="left:577px;top:87px;width:24px">0.00<svg width="25" height="12" fill="#000"><use href="#r30" x="0"/><use href="#r2e" x="6"/><use href="#r30" x="12"/><use href="#r30" x="18"/></svg></div>
<div class="tx" style="left:632px;top:87px;width:30px">0.00%<svg width="31" height="12" fill="#000"><use href="#r30" x="0"/><use href="#r2e" x="6"/><use href="#r30" x="12"/><use href="#r30" x="18"/><use href="#r25" x="24"/></svg></div>
<div class="tx" style="left:698px;top:87px;width:30px">89.68<svg width="31" height="12" fill="#000"><use href="#r38" x="0"/><use href="#r39" x="6"/><use href="#r2e" x="12"/><use href="#r36" x="18"/><use href="#r38" x="24"/></svg></div>
<div class="tx" style="left:748px;top:87px;width:42px">100.00%<svg width="43" height="12" fill="#000"><use href="#r31" x="0"/><use href="#r30" x="6"/><use href="#r30" x="12"/><use href="#r2e" x="18"/><use href="#r30" x="24"/><use href="#r30" x="30"/><use href="#r25" x="36"/></svg></div>
<div class="tx" style="left:826px;top:87px;width:30px">89.68<svg width="31" height="12" fill="#000"><use href="#r38" x="0"/><use href="#r39" x="6"/><use href="#r2e" x="12"/><use href="#r36" x="18"/><use href="#r38" x="24"/></svg></div>
<div class="tx" style="left:932px;top:87px;width:42px">100.00%<svg width="43" height="12" fill="#000"><use href="#r31" x="0"/><use href="#r30" x="6"/><use href="#r30" x="12"/><use href="#r2e" x="18"/><use href="#r30" x="24"/><use href="#r30" x="30"/><use href="#r25" x="36"/></svg></div>
<div class="tx" style="left:1000px;top:87px;width:42px">3272.42<svg width="43" height="12" fill="#000"><use href="#r33" x="0"/><use href="#r32" x="6"/><use href="#r37" x="12"/><use href="#r32" x="18"/><use href="#r2e" x="24"/><use href="#r34" x="30"/><use href="#r32" x="36"/></svg></div>
<div class="tx" style="left:1098px;top:87px;width:24px">0.00<svg width="25" height="12" fill="#000"><use href="#r30" x="0"/><use href="#r2e" x="6"/><use href="#r30" x="12"/><use href="#r30" x="18"/></svg></div>
<div style="position:absolute;left:881px;top:87px;width:11px;height:11px;border:1px solid #000;background:#fff"></div>
<div style="position:absolute;left:16px;top:85px;width:1px;height:16px;background:repeating-linear-gradient(#8c8c8c 0 1px,transparent 1px 2px)"></div>
<div style="position:absolute;left:33px;top:85px;width:1px;height:8px;background:repeating-linear-gradient(#8c8c8c 0 1px,transparent 1px 2px)"></div>
<div style="position:absolute;left:34px;top:92px;width:8px;height:1px;background:repeating-linear-gradient(90deg,#8c8c8c 0 1px,transparent 1px 2px)"></div>
<div style="position:absolute;left:0px;top:102px;width:14px;height:16px;background:#f0f0f0"></div>
<div style="position:absolute;left:0px;top:118px;width:14px;height:1px;background:#a8a8a8"></div>
<div style="position:absolute;left:14px;top:101px;width:1px;height:18px;background:#a0a0a0"></div>
<div style="position:absolute;left:26px;top:102px;width:1120px;height:16px;background:#ffffff"></div>
<div style="position:absolute;left:25px;top:101px;width:1px;height:18px;background:#a0a0a0"></div>
<div style="position:absolute;left:25px;top:118px;width:1121px;height:1px;background:#a0a0a0"></div>
<div style="position:absolute;left:25px;top:101px;width:1121px;height:1px;background:#a0a0a0"></div>
<div style="position:absolute;left:83px;top:101px;width:1px;height:18px;background:#a0a0a0"></div>
<div style="position:absolute;left:115px;top:101px;width:1px;height:18px;background:#a0a0a0"></div>
<div style="position:absolute;left:401px;top:101px;width:1px;height:18px;background:#a0a0a0"></div>
<div style="position:absolute;left:455px;top:101px;width:1px;height:18px;background:#a0a0a0"></div>
<div style="position:absolute;left:535px;top:101px;width:1px;height:18px;background:#a0a0a0"></div>
<div style="position:absolute;left:603px;top:101px;width:1px;height:18px;background:#a0a0a0"></div>
<div style="position:absolute;left:664px;top:101px;width:1px;height:18px;background:#a0a0a0"></div>
<div style="position:absolute;left:730px;top:101px;width:1px;height:18px;background:#a0a0a0"></div>
<div style="position:absolute;left:792px;top:101px;width:1px;height:18px;background:#a0a0a0"></div>
<div style="position:absolute;left:858px;top:101px;width:1px;height:18px;background:#a0a0a0"></div>
<div style="position:absolute;left:914px;top:101px;width:1px;height:18px;background:#a0a0a0"></div>
<div style="position:absolute;left:976px;top:101px;width:1px;height:18px;background:#a0a0a0"></div>
<div style="position:absolute;left:1044px;top:101px;width:1px;height:18px;background:#a0a0a0"></div>
<div style="position:absolute;left:1124px;top:101px;width:1px;height:18px;background:#a0a0a0"></div>
<div class="tx" style="left:87px;top:104px;width:26px">部位<svg width="27" height="12" fill="#000"><use href="#b90e8" x="0"/><use href="#b4f4d" x="13"/></svg></div>
<div class="tx" style="left:118px;top:104px;width:108px">A.3  砌 筑 工 程<svg width="109" height="12" fill="#000"><use href="#b41" x="0"/><use href="#b2e" x="7"/><use href="#b33" x="14"/><use href="#b780c" x="35"/><use href="#b7b51" x="55"/><use href="#b5de5" x="75"/><use href="#b7a0b" x="95"/></svg></div>
<div class="tx" style="left:619px;top:104px;width:42px">98.34%<svg width="43" height="12" fill="#000"><use href="#b39" x="0"/><use href="#b38" x="7"/><use href="#b2e" x="14"/><use href="#b33" x="21"/><use href="#b34" x="28"/><use href="#b25" x="35"/></svg></div>
<div class="tx" style="left:754px;top:104px;width:35px">0.00%<svg width="36" height="12" fill="#000"><use href="#b30" x="0"/><use href="#b2e" x="7"/><use href="#b30" x="14"/><use href="#b30" x="21"/><use href="#b25" x="28"/></svg></div>
<div class="tx" style="left:978px;top:104px;width:63px">108954.92<svg width="64" height="12" fill="#000"><use href="#b31" x="0"/><use href="#b30" x="7"/><use href="#b38" x="14"/><use href="#b39" x="21"/><use href="#b35" x="28"/><use href="#b34" x="35"/><use href="#b2e" x="42"/><use href="#b39" x="49"/><use href="#b32" x="56"/></svg></div>
<div class="tx" style="left:1058px;top:104px;width:63px">107148.88<svg width="64" height="12" fill="#000"><use href="#b31" x="0"/><use href="#b30" x="7"/><use href="#b37" x="14"/><use href="#b31" x="21"/><use href="#b34" x="28"/><use href="#b38" x="35"/><use href="#b2e" x="42"/><use href="#b38" x="49"/><use href="#b38" x="56"/></svg></div>
<div style="position:absolute;left:881px;top:104px;width:11px;height:11px;border:1px solid #000;background:#fff"></div>
<div style="position:absolute;left:14px;top:104px;width:8px;height:11px;border:1px solid #2c4468;border-left:none;border-radius:0 2px 2px 0;background:linear-gradient(135deg,#f4f6fc,#c4cfe8)"></div>
<div style="position:absolute;left:15px;top:109px;width:4px;height:1px;background:#1a2a48"></div>
<div style="position:absolute;left:23px;top:109px;width:1px;height:1px;background:#888"></div>
<div style="position:absolute;left:16px;top:115px;width:1px;height:4px;background:repeating-linear-gradient(#8c8c8c 0 1px,transparent 1px 2px)"></div>
<div style="position:absolute;left:0px;top:119px;width:14px;height:16px;background:#f0f0f0"></div>
<div style="position:absolute;left:0px;top:135px;width:14px;height:1px;background:#a8a8a8"></div>
<div style="position:absolute;left:14px;top:118px;width:1px;height:18px;background:#a0a0a0"></div>
<div style="position:absolute;left:43px;top:119px;width:1103px;height:16px;background:#ffffff"></div>
<div style="position:absolute;left:42px;top:118px;width:1px;height:18px;background:#a0a0a0"></div>
<div style="position:absolute;left:42px;top:135px;width:1104px;height:1px;background:#a0a0a0"></div>
<div style="position:absolute;left:83px;top:118px;width:1px;height:18px;background:#a0a0a0"></div>
<div style="position:absolute;left:115px;top:118px;width:1px;height:18px;background:#a0a0a0"></div>
<div style="position:absolute;left:401px;top:118px;width:1px;height:18px;background:#a0a0a0"></div>
<div style="position:absolute;left:455px;top:118px;width:1px;height:18px;background:#a0a0a0"></div>
<div style="position:absolute;left:535px;top:118px;width:1px;height:18px;background:#a0a0a0"></div>
<div style="position:absolute;left:603px;top:118px;width:1px;height:18px;background:#a0a0a0"></div>
<div style="position:absolute;left:664px;top:118px;width:1px;height:18px;background:#a0a0a0"></div>
<div style="position:absolute;left:730px;top:118px;width:1px;height:18px;background:#a0a0a0"></div>
<div style="position:absolute;left:792px;top:118px;width:1px;height:18px;background:#a0a0a0"></div>
<div style="position:absolute;left:858px;top:118px;width:1px;height:18px;background:#a0a0a0"></div>
<div style="position:absolute;left:914px;top:118px;width:1px;height:18px;background:#a0a0a0"></div>
<div style="position:absolute;left:976px;top:118px;width:1px;height:18px;background:#a0a0a0"></div>
<div style="position:absolute;left:1044px;top:118px;width:1px;height:18px;background:#a0a0a0"></div>
<div style="position:absolute;left:1124px;top:118px;width:1px;height:18px;background:#a0a0a0"></div>
<div class="tx" style="left:45px;top:121px;width:36px">010301<svg width="37" height="12" fill="#000"><use href="#r30" x="0"/><use href="#r31" x="6"/><use href="#r30" x="12"/><use href="#r33" x="18"/><use href="#r30" x="24"/><use href="#r31" x="30"/></svg></div>
<div class="tx" style="left:88px;top:121px;width:24px">清单<svg width="25" height="12" fill="#000"><use href="#r6e05" x="0"/><use href="#r5355" x="12"/></svg></div>
<div class="tx" style="left:118px;top:121px;width:36px">砖基础<svg width="37" height="12" fill="#000"><use href="#r7816" x="0"/><use href="#r57fa" x="12"/><use href="#r7840" x="24"/></svg></div>
<div class="tx" style="left:423px;top:121px;width:12px">m3<svg width="13" height="12" fill="#000"><use href="#r6d" x="0"/><use href="#r33" x="6"/></svg></div>
<div class="tx" style="left:509px;top:121px;width:24px">4.05<svg width="25" height="12" fill="#000"><use href="#r34" x="0"/><use href="#r2e" x="6"/><use href="#r30" x="12"/><use href="#r35" x="18"/></svg></div>
<div class="tx" style="left:577px;top:121px;width:24px">0.00<svg width="25" height="12" fill="#000"><use href="#r30" x="0"/><use href="#r2e" x="6"/><use href="#r30" x="12"/><use href="#r30" x="18"/></svg></div>
<div class="tx" style="left:632px;top:121px;width:30px">0.00%<svg width="31" height="12" fill="#000"><use href="#r30" x="0"/><use href="#r2e" x="6"/><use href="#r30" x="12"/><use href="#r30" x="18"/><use href="#r25" x="24"/></svg></div>
<div class="tx" style="left:704px;top:121px;width:24px">0.00<svg width="25" height="12" fill="#000"><use href="#r30" x="0"/><use href="#r2e" x="6"/><use href="#r30" x="12"/><use href="#r30" x="18"/></svg></div>
<div class="tx" style="left:760px;top:121px;width:30px">0.00%<svg width="31" height="12" fill="#000"><use href="#r30" x="0"/><use href="#r2e" x="6"/><use href="#r30" x="12"/><use href="#r30" x="18"/><use href="#r25" x="24"/></svg></div>
<div class="tx" style="left:832px;top:121px;width:24px">0.00<svg width="25" height="12" fill="#000"><use href="#r30" x="0"/><use href="#r2e" x="6"/><use href="#r30" x="12"/><use href="#r30" x="18"/></svg></div>
<div class="tx" style="left:1000px;top:121px;width:42px">1949.26<svg width="43" height="12" fill="#000"><use href="#r31" x="0"/><use href="#r39" x="6"/><use href="#r34" x="12"/><use href="#r39" x="18"/><use href="#r2e" x="24"/><use href="#r32" x="30"/><use href="#r36" x="36"/></svg></div>
<div class="tx" style="left:1098px;top:121px;width:24px">0.00<svg width="25" height="12" fill="#000"><use href="#r30" x="0"/><use href="#r2e" x="6"/><use href="#r30" x="12"/><use href="#r30" x="18"/></svg></div>
<div style="position:absolute;left:881px;top:121px;width:11px;height:11px;border:1px solid #000;background:#fff"></div>
<div style="position:absolute;left:16px;top:119px;width:1px;height:16px;background:repeating-linear-gradient(#8c8c8c 0 1px,transparent 1px 2px)"></div>
<div style="position:absolute;left:33px;top:119px;width:1px;height:16px;background:repeating-linear-gradient(#8c8c8c 0 1px,transparent 1px 2px)"></div>
<div style="position:absolute;left:34px;top:126px;width:8px;height:1px;background:repeating-linear-gradient(90deg,#8c8c8c 0 1px,transparent 1px 2px)"></div>
<div style="position:absolute;left:0px;top:136px;width:14px;height:16px;background:#f0f0f0"></div>
<div style="position:absolute;left:0px;top:152px;width:14px;height:1px;background:#a8a8a8"></div>
<div style="position:absolute;left:14px;top:135px;width:1px;height:18px;background:#a0a0a0"></div>
<div style="position:absolute;left:43px;top:136px;width:1103px;height:16px;background:#ffff80"></div>
<div style="position:absolute;left:42px;top:135px;width:1px;height:18px;background:#a0a0a0"></div>
<div style="position:absolute;left:42px;top:152px;width:1104px;height:1px;background:#a0a0a0"></div>
<div style="position:absolute;left:83px;top:135px;width:1px;height:18px;background:#a0a0a0"></div>
<div style="position:absolute;left:115px;top:135px;width:1px;height:18px;background:#a0a0a0"></div>
<div style="position:absolute;left:401px;top:135px;width:1px;height:18px;background:#a0a0a0"></div>
<div style="position:absolute;left:455px;top:135px;width:1px;height:18px;background:#a0a0a0"></div>
<div style="position:absolute;left:535px;top:135px;width:1px;height:18px;background:#a0a0a0"></div>
<div style="position:absolute;left:603px;top:135px;width:1px;height:18px;background:#a0a0a0"></div>
<div style="position:absolute;left:664px;top:135px;width:1px;height:18px;background:#a0a0a0"></div>
<div style="position:absolute;left:730px;top:135px;width:1px;height:18px;background:#a0a0a0"></div>
<div style="position:absolute;left:792px;top:135px;width:1px;height:18px;background:#a0a0a0"></div>
<div style="position:absolute;left:858px;top:135px;width:1px;height:18px;background:#a0a0a0"></div>
<div style="position:absolute;left:914px;top:135px;width:1px;height:18px;background:#a0a0a0"></div>
<div style="position:absolute;left:976px;top:135px;width:1px;height:18px;background:#a0a0a0"></div>
<div style="position:absolute;left:1044px;top:135px;width:1px;height:18px;background:#a0a0a0"></div>
<div style="position:absolute;left:1124px;top:135px;width:1px;height:18px;background:#a0a0a0"></div>
<div class="tx" style="left:45px;top:138px;width:36px">010302<svg width="37" height="12" fill="#000"><use href="#r30" x="0"/><use href="#r31" x="6"/><use href="#r30" x="12"/><use href="#r33" x="18"/><use href="#r30" x="24"/><use href="#r32" x="30"/></svg></div>
<div class="tx" style="left:88px;top:138px;width:24px">清单<svg width="25" height="12" fill="#000"><use href="#r6e05" x="0"/><use href="#r5355" x="12"/></svg></div>
<div class="tx" style="left:118px;top:138px;width:48px">实心砖墙<svg width="49" height="12" fill="#000"><use href="#r5b9e" x="0"/><use href="#r5fc3" x="12"/><use href="#r7816" x="24"/><use href="#r5899" x="36"/></svg></div>
<div class="tx" style="left:423px;top:138px;width:12px">m3<svg width="13" height="12" fill="#000"><use href="#r6d" x="0"/><use href="#r33" x="6"/></svg></div>
<div class="tx" style="left:497px;top:138px;width:36px">201.73<svg width="37" height="12" fill="#000"><use href="#r32" x="0"/><use href="#r30" x="6"/><use href="#r31" x="12"/><use href="#r2e" x="18"/><use href="#r37" x="24"/><use href="#r33" x="30"/></svg></div>
<div class="tx" style="left:565px;top:138px;width:36px">202.00<svg width="37" height="12" fill="#000"><use href="#r32" x="0"/><use href="#r30" x="6"/><use href="#r32" x="12"/><use href="#r2e" x="18"/><use href="#r30" x="24"/><use href="#r30" x="30"/></svg></div>
<div class="tx" style="left:620px;top:138px;width:42px">100.13%<svg width="43" height="12" fill="#000"><use href="#r31" x="0"/><use href="#r30" x="6"/><use href="#r30" x="12"/><use href="#r2e" x="18"/><use href="#r31" x="24"/><use href="#r33" x="30"/><use href="#r25" x="36"/></svg></div>
<div class="tx" style="left:704px;top:138px;width:24px">0.00<svg width="25" height="12" fill="#000"><use href="#r30" x="0"/><use href="#r2e" x="6"/><use href="#r30" x="12"/><use href="#r30" x="18"/></svg></div>
<div class="tx" style="left:760px;top:138px;width:30px">0.00%<svg width="31" height="12" fill="#000"><use href="#r30" x="0"/><use href="#r2e" x="6"/><use href="#r30" x="12"/><use href="#r30" x="18"/><use href="#r25" x="24"/></svg></div>
<div class="tx" style="left:832px;top:138px;width:24px">0.00<svg width="25" height="12" fill="#000"><use href="#r30" x="0"/><use href="#r2e" x="6"/><use href="#r30" x="12"/><use href="#r30" x="18"/></svg></div>
<div class="tx" style="left:988px;top:138px;width:54px">107005.66<svg width="55" height="12" fill="#000"><use href="#r31" x="0"/><use href="#r30" x="6"/><use href="#r37" x="12"/><use href="#r30" x="18"/><use href="#r30" x="24"/><use href="#r35" x="30"/><use href="#r2e" x="36"/><use href="#r36" x="42"/><use href="#r36" x="48"/></svg></div>
<div class="tx" style="left:1068px;top:138px;width:54px">107148.88<svg width="55" height="12" fill="#000"><use href="#r31" x="0"/><use href="#r30" x="6"/><use href="#r37" x="12"/><use href="#r31" x="18"/><use href="#r34" x="24"/><use href="#r38" x="30"/><use href="#r2e" x="36"/><use href="#r38" x="42"/><use href="#r38" x="48"/></svg></div>
<div style="position:absolute;left:881px;top:138px;width:11px;height:11px;border:1px solid #000;background:#fff"></div>
<div style="position:absolute;left:16px;top:135px;width:1px;height:17px;background:repeating-linear-gradient(#8c8c8c 0 1px,transparent 1px 2px)"></div>
<div style="position:absolute;left:33px;top:135px;width:1px;height:9px;background:repeating-linear-gradient(#8c8c8c 0 1px,transparent 1px 2px)"></div>
<div style="position:absolute;left:34px;top:143px;width:8px;height:1px;background:repeating-linear-gradient(90deg,#8c8c8c 0 1px,transparent 1px 2px)"></div>
<div style="position:absolute;left:0px;top:153px;width:14px;height:16px;background:#f0f0f0"></div>
<div style="position:absolute;left:0px;top:169px;width:14px;height:1px;background:#a8a8a8"></div>
<div style="position:absolute;left:14px;top:152px;width:1px;height:18px;background:#a0a0a0"></div>
<div style="position:absolute;left:26px;top:153px;width:1120px;height:16px;background:#ffffff"></div>
<div style="position:absolute;left:25px;top:152px;width:1px;height:18px;background:#a0a0a0"></div>
<div style="position:absolute;left:25px;top:169px;width:1121px;height:1px;background:#a0a0a0"></div>
<div style="position:absolute;left:25px;top:152px;width:1121px;height:1px;background:#a0a0a0"></div>
<div style="position:absolute;left:83px;top:152px;width:1px;height:18px;background:#a0a0a0"></div>
<div style="position:absolute;left:115px;top:152px;width:1px;height:18px;background:#a0a0a0"></div>
<div style="position:absolute;left:401px;top:152px;width:1px;height:18px;background:#a0a0a0"></div>
<div style="position:absolute;left:455px;top:152px;width:1px;height:18px;background:#a0a0a0"></div>
<div style="position:absolute;left:535px;top:152px;width:1px;height:18px;background:#a0a0a0"></div>
<div style="position:absolute;left:603px;top:152px;width:1px;height:18px;background:#a0a0a0"></div>
<div style="position:absolute;left:664px;top:152px;width:1px;height:18px;background:#a0a0a0"></div>
<div style="position:absolute;left:730px;top:152px;width:1px;height:18px;background:#a0a0a0"></div>
<div style="position:absolute;left:792px;top:152px;width:1px;height:18px;background:#a0a0a0"></div>
<div style="position:absolute;left:858px;top:152px;width:1px;height:18px;background:#a0a0a0"></div>
<div style="position:absolute;left:914px;top:152px;width:1px;height:18px;background:#a0a0a0"></div>
<div style="position:absolute;left:976px;top:152px;width:1px;height:18px;background:#a0a0a0"></div>
<div style="position:absolute;left:1044px;top:152px;width:1px;height:18px;background:#a0a0a0"></div>
<div style="position:absolute;left:1124px;top:152px;width:1px;height:18px;background:#a0a0a0"></div>
<div class="tx" style="left:87px;top:155px;width:26px">部位<svg width="27" height="12" fill="#000"><use href="#b90e8" x="0"/><use href="#b4f4d" x="13"/></svg></div>
<div class="tx" style="left:118px;top:155px;width:178px">A.4  混凝土及钢筋混凝土工程<svg width="179" height="12" fill="#000"><use href="#b41" x="0"/><use href="#b2e" x="7"/><use href="#b34" x="14"/><use href="#b6df7" x="35"/><use href="#b51dd" x="48"/><use href="#b571f" x="61"/><use href="#b53ca" x="74"/><use href="#b94a2" x="87"/><use href="#b7b4b" x="100"/><use href="#b6df7" x="113"/><use href="#b51dd" x="126"/><use href="#b571f" x="139"/><use href="#b5de5" x="152"/><use href="#b7a0b" x="165"/></svg></div>
<div class="tx" style="left:626px;top:155px;width:35px">5.86%<svg width="36" height="12" fill="#000"><use href="#b35" x="0"/><use href="#b2e" x="7"/><use href="#b38" x="14"/><use href="#b36" x="21"/><use href="#b25" x="28"/></svg></div>
<div class="tx" style="left:754px;top:155px;width:35px">0.00%<svg width="36" height="12" fill="#000"><use href="#b30" x="0"/><use href="#b2e" x="7"/><use href="#b30" x="14"/><use href="#b30" x="21"/><use href="#b25" x="28"/></svg></div>
<div class="tx" style="left:978px;top:155px;width:63px">315221.86<svg width="64" height="12" fill="#000"><use href="#b33" x="0"/><use href="#b31" x="7"/><use href="#b35" x="14"/><use href="#b32" x="21"/><use href="#b32" x="28"/><use href="#b31" x="35"/><use href="#b2e" x="42"/><use href="#b38" x="49"/><use href="#b36" x="56"/></svg></div>
<div class="tx" style="left:1065px;top:155px;width:56px">18479.56<svg width="57" height="12" fill="#000"><use href="#b31" x="0"/><use href="#b38" x="7"/><use href="#b34" x="14"/><use href="#b37" x="21"/><use href="#b39" x="28"/><use href="#b2e" x="35"/><use href="#b35" x="42"/><use href="#b36" x="49"/></svg></div>
<div style="position:absolute;left:881px;top:155px;width:11px;height:11px;border:1px solid #000;background:#fff"></div>
<div style="position:absolute;left:14px;top:155px;width:8px;height:11px;border:1px solid #2c4468;border-left:none;border-radius:0 2px 2px 0;background:linear-gradient(135deg,#f4f6fc,#c4cfe8)"></div>
<div style="position:absolute;left:15px;top:160px;width:4px;height:1px;background:#1a2a48"></div>
<div style="position:absolute;left:23px;top:160px;width:1px;height:1px;background:#888"></div>
<div style="position:absolute;left:16px;top:167px;width:1px;height:3px;background:repeating-linear-gradient(#8c8c8c 0 1px,transparent 1px 2px)"></div>
<div style="position:absolute;left:0px;top:170px;width:14px;height:16px;background:#f0f0f0"></div>
<div style="position:absolute;left:0px;top:186px;width:14px;height:1px;background:#a8a8a8"></div>
<div style="position:absolute;left:14px;top:169px;width:1px;height:18px;background:#a0a0a0"></div>
<div style="position:absolute;left:43px;top:170px;width:1103px;height:16px;background:#ffd5d5"></div>
<div style="position:absolute;left:42px;top:169px;width:1px;height:18px;background:#a0a0a0"></div>
<div style="position:absolute;left:42px;top:186px;width:1104px;height:1px;background:#a0a0a0"></div>
<div style="position:absolute;left:83px;top:169px;width:1px;height:18px;background:#a0a0a0"></div>
<div style="position:absolute;left:115px;top:169px;width:1px;height:18px;background:#a0a0a0"></div>
<div style="position:absolute;left:401px;top:169px;width:1px;height:18px;background:#a0a0a0"></div>
<div style="position:absolute;left:455px;top:169px;width:1px;height:18px;background:#a0a0a0"></div>
<div style="position:absolute;left:535px;top:169px;width:1px;height:18px;background:#a0a0a0"></div>
<div style="position:absolute;left:603px;top:169px;width:1px;height:18px;background:#a0a0a0"></div>
<div style="position:absolute;left:664px;top:169px;width:1px;height:18px;background:#a0a0a0"></div>
<div style="position:absolute;left:730px;top:169px;width:1px;height:18px;background:#a0a0a0"></div>
<div style="position:absolute;left:792px;top:169px;width:1px;height:18px;background:#a0a0a0"></div>
<div style="position:absolute;left:858px;top:169px;width:1px;height:18px;background:#a0a0a0"></div>
<div style="position:absolute;left:914px;top:169px;width:1px;height:18px;background:#a0a0a0"></div>
<div style="position:absolute;left:976px;top:169px;width:1px;height:18px;background:#a0a0a0"></div>
<div style="position:absolute;left:1044px;top:169px;width:1px;height:18px;background:#a0a0a0"></div>
<div style="position:absolute;left:1124px;top:169px;width:1px;height:18px;background:#a0a0a0"></div>
<div class="tx" style="left:45px;top:172px;width:36px">010401<svg width="37" height="12" fill="#000"><use href="#r30" x="0"/><use href="#r31" x="6"/><use href="#r30" x="12"/><use href="#r34" x="18"/><use href="#r30" x="24"/><use href="#r31" x="30"/></svg></div>
<div class="tx" style="left:88px;top:172px;width:24px">清单<svg width="25" height="12" fill="#000"><use href="#r6e05" x="0"/><use href="#r5355" x="12"/></svg></div>
<div class="tx" style="left:118px;top:172px;width:48px">带形基础<svg width="49" height="12" fill="#000"><use href="#r5e26" x="0"/><use href="#r5f62" x="12"/><use href="#r57fa" x="24"/><use href="#r7840" x="36"/></svg></div>
<div class="tx" style="left:423px;top:172px;width:12px">m3<svg width="13" height="12" fill="#000"><use href="#r6d" x="0"/><use href="#r33" x="6"/></svg></div>
<div class="tx" style="left:509px;top:172px;width:24px">0.38<svg width="25" height="12" fill="#000"><use href="#r30" x="0"/><use href="#r2e" x="6"/><use href="#r33" x="12"/><use href="#r38" x="18"/></svg></div>
<div class="tx" style="left:577px;top:172px;width:24px">0.29<svg width="25" height="12" fill="#000"><use href="#r30" x="0"/><use href="#r2e" x="6"/><use href="#r32" x="12"/><use href="#r39" x="18"/></svg></div>
<div class="tx" style="left:626px;top:172px;width:36px">76.32%<svg width="37" height="12" fill="#000"><use href="#r37" x="0"/><use href="#r36" x="6"/><use href="#r2e" x="12"/><use href="#r33" x="18"/><use href="#r32" x="24"/><use href="#r25" x="30"/></svg></div>
<div class="tx" style="left:704px;top:172px;width:24px">0.00<svg width="25" height="12" fill="#000"><use href="#r30" x="0"/><use href="#r2e" x="6"/><use href="#r30" x="12"/><use href="#r30" x="18"/></svg></div>
<div class="tx" style="left:760px;top:172px;width:30px">0.00%<svg width="31" height="12" fill="#000"><use href="#r30" x="0"/><use href="#r2e" x="6"/><use href="#r30" x="12"/><use href="#r30" x="18"/><use href="#r25" x="24"/></svg></div>
<div class="tx" style="left:832px;top:172px;width:24px">0.00<svg width="25" height="12" fill="#000"><use href="#r30" x="0"/><use href="#r2e" x="6"/><use href="#r30" x="12"/><use href="#r30" x="18"/></svg></div>
<div class="tx" style="left:1006px;top:172px;width:36px">158.55<svg width="37" height="12" fill="#000"><use href="#r31" x="0"/><use href="#r35" x="6"/><use href="#r38" x="12"/><use href="#r2e" x="18"/><use href="#r35" x="24"/><use href="#r35" x="30"/></svg></div>
<div class="tx" style="left:1086px;top:172px;width:36px">121.00<svg width="37" height="12" fill="#000"><use href="#r31" x="0"/><use href="#r32" x="6"/><use href="#r31" x="12"/><use href="#r2e" x="18"/><use href="#r30" x="24"/><use href="#r30" x="30"/></svg></div>
<div style="position:absolute;left:881px;top:172px;width:11px;height:11px;border:1px solid #000;background:#fff"></div>
<div style="position:absolute;left:16px;top:169px;width:1px;height:17px;background:repeating-linear-gradient(#8c8c8c 0 1px,transparent 1px 2px)"></div>
<div style="position:absolute;left:33px;top:169px;width:1px;height:17px;background:repeating-linear-gradient(#8c8c8c 0 1px,transparent 1px 2px)"></div>
<div style="position:absolute;left:34px;top:177px;width:8px;height:1px;background:repeating-linear-gradient(90deg,#8c8c8c 0 1px,transparent 1px 2px)"></div>
<div style="position:absolute;left:0px;top:187px;width:14px;height:16px;background:#f0f0f0"></div>
<div style="position:absolute;left:0px;top:203px;width:14px;height:1px;background:#a8a8a8"></div>
<div style="position:absolute;left:14px;top:186px;width:1px;height:18px;background:#a0a0a0"></div>
<div style="position:absolute;left:43px;top:187px;width:1103px;height:16px;background:#ffd5d5"></div>
<div style="position:absolute;left:42px;top:186px;width:1px;height:18px;background:#a0a0a0"></div>
<div style="position:absolute;left:42px;top:203px;width:1104px;height:1px;background:#a0a0a0"></div>
<div style="position:absolute;left:83px;top:186px;width:1px;height:18px;background:#a0a0a0"></div>
<div style="position:absolute;left:115px;top:186px;width:1px;height:18px;background:#a0a0a0"></div>
<div style="position:absolute;left:401px;top:186px;width:1px;height:18px;background:#a0a0a0"></div>
<div style="position:absolute;left:455px;top:186px;width:1px;height:18px;background:#a0a0a0"></div>
<div style="position:absolute;left:535px;top:186px;width:1px;height:18px;background:#a0a0a0"></div>
<div style="position:absolute;left:603px;top:186px;width:1px;height:18px;background:#a0a0a0"></div>
<div style="position:absolute;left:664px;top:186px;width:1px;height:18px;background:#a0a0a0"></div>
<div style="position:absolute;left:730px;top:186px;width:1px;height:18px;background:#a0a0a0"></div>
<div style="position:absolute;left:792px;top:186px;width:1px;height:18px;background:#a0a0a0"></div>
<div style="position:absolute;left:858px;top:186px;width:1px;height:18px;background:#a0a0a0"></div>
<div style="position:absolute;left:914px;top:186px;width:1px;height:18px;background:#a0a0a0"></div>
<div style="position:absolute;left:976px;top:186px;width:1px;height:18px;background:#a0a0a0"></div>
<div style="position:absolute;left:1044px;top:186px;width:1px;height:18px;background:#a0a0a0"></div>
<div style="position:absolute;left:1124px;top:186px;width:1px;height:18px;background:#a0a0a0"></div>
<div class="tx" style="left:45px;top:189px;width:36px">010403<svg width="37" height="12" fill="#000"><use href="#r30" x="0"/><use href="#r31" x="6"/><use href="#r30" x="12"/><use href="#r34" x="18"/><use href="#r30" x="24"/><use href="#r33" x="30"/></svg></div>
<div class="tx" style="left:88px;top:189px;width:24px">清单<svg width="25" height="12" fill="#000"><use href="#r6e05" x="0"/><use href="#r5355" x="12"/></svg></div>
<div class="tx" style="left:118px;top:189px;width:36px">基础梁<svg width="37" height="12" fill="#000"><use href="#r57fa" x="0"/><use href="#r7840" x="12"/><use href="#r6881" x="24"/></svg></div>
<div class="tx" style="left:423px;top:189px;width:12px">m3<svg width="13" height="12" fill="#000"><use href="#r6d" x="0"/><use href="#r33" x="6"/></svg></div>
<div class="tx" style="left:503px;top:189px;width:30px">32.30<svg width="31" height="12" fill="#000"><use href="#r33" x="0"/><use href="#r32" x="6"/><use href="#r2e" x="12"/><use href="#r33" x="18"/><use href="#r30" x="24"/></svg></div>
<div class="tx" style="left:571px;top:189px;width:30px">32.00<svg width="31" height="12" fill="#000"><use href="#r33" x="0"/><use href="#r32" x="6"/><use href="#r2e" x="12"/><use href="#r30" x="18"/><use href="#r30" x="24"/></svg></div>
<div class="tx" style="left:626px;top:189px;width:36px">99.07%<svg width="37" height="12" fill="#000"><use href="#r39" x="0"/><use href="#r39" x="6"/><use href="#r2e" x="12"/><use href="#r30" x="18"/><use href="#r37" x="24"/><use href="#r25" x="30"/></svg></div>
<div class="tx" style="left:704px;top:189px;width:24px">0.00<svg width="25" height="12" fill="#000"><use href="#r30" x="0"/><use href="#r2e" x="6"/><use href="#r30" x="12"/><use href="#r30" x="18"/></svg></div>
<div class="tx" style="left:760px;top:189px;width:30px">0.00%<svg width="31" height="12" fill="#000"><use href="#r30" x="0"/><use href="#r2e" x="6"/><use href="#r30" x="12"/><use href="#r30" x="18"/><use href="#r25" x="24"/></svg></div>
<div class="tx" style="left:832px;top:189px;width:24px">0.00<svg width="25" height="12" fill="#000"><use href="#r30" x="0"/><use href="#r2e" x="6"/><use href="#r30" x="12"/><use href="#r30" x="18"/></svg></div>
<div class="tx" style="left:994px;top:189px;width:48px">13476.85<svg width="49" height="12" fill="#000"><use href="#r31" x="0"/><use href="#r33" x="6"/><use href="#r34" x="12"/><use href="#r37" x="18"/><use href="#r36" x="24"/><use href="#r2e" x="30"/><use href="#r38" x="36"/><use href="#r35" x="42"/></svg></div>
<div class="tx" style="left:1074px;top:189px;width:48px">13351.68<svg width="49" height="12" fill="#000"><use href="#r31" x="0"/><use href="#r33" x="6"/><use href="#r33" x="12"/><use href="#r35" x="18"/><use href="#r31" x="24"/><use href="#r2e" x="30"/><use href="#r36" x="36"/><use href="#r38" x="42"/></svg></div>
<div style="position:absolute;left:881px;top:189px;width:11px;height:11px;border:1px solid #000;background:#fff"></div>
<div style="position:absolute;left:16px;top:187px;width:1px;height:16px;background:repeating-linear-gradient(#8c8c8c 0 1px,transparent 1px 2px)"></div>
<div style="position:absolute;left:33px;top:187px;width:1px;height:16px;background:repeating-linear-gradient(#8c8c8c 0 1px,transparent 1px 2px)"></div>
<div style="position:absolute;left:34px;top:194px;width:8px;height:1px;background:repeating-linear-gradient(90deg,#8c8c8c 0 1px,transparent 1px 2px)"></div>
<div style="position:absolute;left:0px;top:204px;width:14px;height:16px;background:#f0f0f0"></div>
<div style="position:absolute;left:0px;top:220px;width:14px;height:1px;background:#a8a8a8"></div>
<div style="position:absolute;left:14px;top:203px;width:1px;height:18px;background:#a0a0a0"></div>
<div style="position:absolute;left:43px;top:204px;width:1103px;height:16px;background:#ffff80"></div>
<div style="position:absolute;left:42px;top:203px;width:1px;height:18px;background:#a0a0a0"></div>
<div style="position:absolute;left:42px;top:220px;width:1104px;height:1px;background:#a0a0a0"></div>
<div style="position:absolute;left:83px;top:203px;width:1px;height:18px;background:#a0a0a0"></div>
<div style="position:absolute;left:115px;top:203px;width:1px;height:18px;background:#a0a0a0"></div>
<div style="position:absolute;left:401px;top:203px;width:1px;height:18px;background:#a0a0a0"></div>
<div style="position:absolute;left:455px;top:203px;width:1px;height:18px;background:#a0a0a0"></div>
<div style="position:absolute;left:535px;top:203px;width:1px;height:18px;background:#a0a0a0"></div>
<div style="position:absolute;left:603px;top:203px;width:1px;height:18px;background:#a0a0a0"></div>
<div style="position:absolute;left:664px;top:203px;width:1px;height:18px;background:#a0a0a0"></div>
<div style="position:absolute;left:730px;top:203px;width:1px;height:18px;background:#a0a0a0"></div>
<div style="position:absolute;left:792px;top:203px;width:1px;height:18px;background:#a0a0a0"></div>
<div style="position:absolute;left:858px;top:203px;width:1px;height:18px;background:#a0a0a0"></div>
<div style="position:absolute;left:914px;top:203px;width:1px;height:18px;background:#a0a0a0"></div>
<div style="position:absolute;left:976px;top:203px;width:1px;height:18px;background:#a0a0a0"></div>
<div style="position:absolute;left:1044px;top:203px;width:1px;height:18px;background:#a0a0a0"></div>
<div style="position:absolute;left:1124px;top:203px;width:1px;height:18px;background:#a0a0a0"></div>
<div class="tx" style="left:45px;top:206px;width:36px">010401<svg width="37" height="12" fill="#000"><use href="#r30" x="0"/><use href="#r31" x="6"/><use href="#r30" x="12"/><use href="#r34" x="18"/><use href="#r30" x="24"/><use href="#r31" x="30"/></svg></div>
<div class="tx" style="left:88px;top:206px;width:24px">清单<svg width="25" height="12" fill="#000"><use href="#r6e05" x="0"/><use href="#r5355" x="12"/></svg></div>
<div class="tx" style="left:118px;top:206px;width:48px">独立基础<svg width="49" height="12" fill="#000"><use href="#r72ec" x="0"/><use href="#r7acb" x="12"/><use href="#r57fa" x="24"/><use href="#r7840" x="36"/></svg></div>
<div class="tx" style="left:423px;top:206px;width:12px">m3<svg width="13" height="12" fill="#000"><use href="#r6d" x="0"/><use href="#r33" x="6"/></svg></div>
<div class="tx" style="left:503px;top:206px;width:30px">11.95<svg width="31" height="12" fill="#000"><use href="#r31" x="0"/><use href="#r31" x="6"/><use href="#r2e" x="12"/><use href="#r39" x="18"/><use href="#r35" x="24"/></svg></div>
<div class="tx" style="left:571px;top:206px;width:30px">12.00<svg width="31" height="12" fill="#000"><use href="#r31" x="0"/><use href="#r32" x="6"/><use href="#r2e" x="12"/><use href="#r30" x="18"/><use href="#r30" x="24"/></svg></div>
<div class="tx" style="left:620px;top:206px;width:42px">100.42%<svg width="43" height="12" fill="#000"><use href="#r31" x="0"/><use href="#r30" x="6"/><use href="#r30" x="12"/><use href="#r2e" x="18"/><use href="#r34" x="24"/><use href="#r32" x="30"/><use href="#r25" x="36"/></svg></div>
<div class="tx" style="left:704px;top:206px;width:24px">0.00<svg width="25" height="12" fill="#000"><use href="#r30" x="0"/><use href="#r2e" x="6"/><use href="#r30" x="12"/><use href="#r30" x="18"/></svg></div>
<div class="tx" style="left:760px;top:206px;width:30px">0.00%<svg width="31" height="12" fill="#000"><use href="#r30" x="0"/><use href="#r2e" x="6"/><use href="#r30" x="12"/><use href="#r30" x="18"/><use href="#r25" x="24"/></svg></div>
<div class="tx" style="left:832px;top:206px;width:24px">0.00<svg width="25" height="12" fill="#000"><use href="#r30" x="0"/><use href="#r2e" x="6"/><use href="#r30" x="12"/><use href="#r30" x="18"/></svg></div>
<div class="tx" style="left:1000px;top:206px;width:42px">4986.02<svg width="43" height="12" fill="#000"><use href="#r34" x="0"/><use href="#r39" x="6"/><use href="#r38" x="12"/><use href="#r36" x="18"/><use href="#r2e" x="24"/><use href="#r30" x="30"/><use href="#r32" x="36"/></svg></div>
<div class="tx" style="left:1080px;top:206px;width:42px">5006.88<svg width="43" height="12" fill="#000"><use href="#r35" x="0"/><use href="#r30" x="6"/><use href="#r30" x="12"/><use href="#r36" x="18"/><use href="#r2e" x="24"/><use href="#r38" x="30"/><use href="#r38" x="36"/></svg></div>
<div style="position:absolute;left:881px;top:206px;width:11px;height:11px;border:1px solid #000;background:#fff"></div>
<div style="position:absolute;left:16px;top:203px;width:1px;height:17px;background:repeating-linear-gradient(#8c8c8c 0 1px,transparent 1px 2px)"></div>
<div style="position:absolute;left:33px;top:203px;width:1px;height:17px;background:repeating-linear-gradient(#8c8c8c 0 1px,transparent 1px 2px)"></div>
<div style="position:absolute;left:34px;top:211px;width:8px;height:1px;background:repeating-linear-gradient(90deg,#8c8c8c 0 1px,transparent 1px 2px)"></div>
<div style="position:absolute;left:0px;top:221px;width:14px;height:16px;background:#f0f0f0"></div>
<div style="position:absolute;left:0px;top:237px;width:14px;height:1px;background:#a8a8a8"></div>
<div style="position:absolute;left:14px;top:220px;width:1px;height:18px;background:#a0a0a0"></div>
<div style="position:absolute;left:43px;top:221px;width:1103px;height:16px;background:#ffffff"></div>
<div style="position:absolute;left:42px;top:220px;width:1px;height:18px;background:#a0a0a0"></div>
<div style="position:absolute;left:42px;top:237px;width:1104px;height:1px;background:#a0a0a0"></div>
<div style="position:absolute;left:83px;top:220px;width:1px;height:18px;background:#a0a0a0"></div>
<div style="position:absolute;left:115px;top:220px;width:1px;height:18px;background:#a0a0a0"></div>
<div style="position:absolute;left:401px;top:220px;width:1px;height:18px;background:#a0a0a0"></div>
<div style="position:absolute;left:455px;top:220px;width:1px;height:18px;background:#a0a0a0"></div>
<div style="position:absolute;left:535px;top:220px;width:1px;height:18px;background:#a0a0a0"></div>
<div style="position:absolute;left:603px;top:220px;width:1px;height:18px;background:#a0a0a0"></div>
<div style="position:absolute;left:664px;top:220px;width:1px;height:18px;background:#a0a0a0"></div>
<div style="position:absolute;left:730px;top:220px;width:1px;height:18px;background:#a0a0a0"></div>
<div style="position:absolute;left:792px;top:220px;width:1px;height:18px;background:#a0a0a0"></div>
<div style="position:absolute;left:858px;top:220px;width:1px;height:18px;background:#a0a0a0"></div>
<div style="position:absolute;left:914px;top:220px;width:1px;height:18px;background:#a0a0a0"></div>
<div style="position:absolute;left:976px;top:220px;width:1px;height:18px;background:#a0a0a0"></div>
<div style="position:absolute;left:1044px;top:220px;width:1px;height:18px;background:#a0a0a0"></div>
<div style="position:absolute;left:1124px;top:220px;width:1px;height:18px;background:#a0a0a0"></div>
<div class="tx" style="left:45px;top:223px;width:36px">010401<svg width="37" height="12" fill="#000"><use href="#r30" x="0"/><use href="#r31" x="6"/><use href="#r30" x="12"/><use href="#r34" x="18"/><use href="#r30" x="24"/><use href="#r31" x="30"/></svg></div>
<div class="tx" style="left:88px;top:223px;width:24px">清单<svg width="25" height="12" fill="#000"><use href="#r6e05" x="0"/><use href="#r5355" x="12"/></svg></div>
<div class="tx" style="left:118px;top:223px;width:24px">垫层<svg width="25" height="12" fill="#000"><use href="#r57ab" x="0"/><use href="#r5c42" x="12"/></svg></div>
<div class="tx" style="left:423px;top:223px;width:12px">m3<svg width="13" height="12" fill="#000"><use href="#r6d" x="0"/><use href="#r33" x="6"/></svg></div>
<div class="tx" style="left:509px;top:223px;width:24px">7.80<svg width="25" height="12" fill="#000"><use href="#r37" x="0"/><use href="#r2e" x="6"/><use href="#r38" x="12"/><use href="#r30" x="18"/></svg></div>
<div class="tx" style="left:577px;top:223px;width:24px">0.00<svg width="25" height="12" fill="#000"><use href="#r30" x="0"/><use href="#r2e" x="6"/><use href="#r30" x="12"/><use href="#r30" x="18"/></svg></div>
<div class="tx" style="left:632px;top:223px;width:30px">0.00%<svg width="31" height="12" fill="#000"><use href="#r30" x="0"/><use href="#r2e" x="6"/><use href="#r30" x="12"/><use href="#r30" x="18"/><use href="#r25" x="24"/></svg></div>
<div class="tx" style="left:704px;top:223px;width:24px">0.00<svg width="25" height="12" fill="#000"><use href="#r30" x="0"/><use href="#r2e" x="6"/><use href="#r30" x="12"/><use href="#r30" x="18"/></svg></div>
<div class="tx" style="left:760px;top:223px;width:30px">0.00%<svg width="31" height="12" fill="#000"><use href="#r30" x="0"/><use href="#r2e" x="6"/><use href="#r30" x="12"/><use href="#r30" x="18"/><use href="#r25" x="24"/></svg></div>
<div class="tx" style="left:832px;top:223px;width:24px">0.00<svg width="25" height="12" fill="#000"><use href="#r30" x="0"/><use href="#r2e" x="6"/><use href="#r30" x="12"/><use href="#r30" x="18"/></svg></div>
<div class="tx" style="left:1000px;top:223px;width:42px">3084.67<svg width="43" height="12" fill="#000"><use href="#r33" x="0"/><use href="#r30" x="6"/><use href="#r38" x="12"/><use href="#r34" x="18"/><use href="#r2e" x="24"/><use href="#r36" x="30"/><use href="#r37" x="36"/></svg></div>
<div class="tx" style="left:1098px;top:223px;width:24px">0.00<svg width="25" height="12" fill="#000"><use href="#r30" x="0"/><use href="#r2e" x="6"/><use href="#r30" x="12"/><use href="#r30" x="18"/></svg></div>
<div style="position:absolute;left:881px;top:223px;width:11px;height:11px;border:1px solid #000;background:#fff"></div>
<div style="position:absolute;left:16px;top:221px;width:1px;height:16px;background:repeating-linear-gradient(#8c8c8c 0 1px,transparent 1px 2px)"></div>
<div style="position:absolute;left:33px;top:221px;width:1px;height:16px;background:repeating-linear-gradient(#8c8c8c 0 1px,transparent 1px 2px)"></div>
<div style="position:absolute;left:34px;top:228px;width:8px;height:1px;background:repeating-linear-gradient(90deg,#8c8c8c 0 1px,transparent 1px 2px)"></div>
<div style="position:absolute;left:0px;top:238px;width:14px;height:16px;background:#f0f0f0"></div>
<div style="position:absolute;left:0px;top:254px;width:14px;height:1px;background:#a8a8a8"></div>
<div style="position:absolute;left:14px;top:237px;width:1px;height:18px;background:#a0a0a0"></div>
<div style="position:absolute;left:43px;top:238px;width:1103px;height:16px;background:#ffffff"></div>
<div style="position:absolute;left:42px;top:237px;width:1px;height:18px;background:#a0a0a0"></div>
<div style="position:absolute;left:42px;top:254px;width:1104px;height:1px;background:#a0a0a0"></div>
<div style="position:absolute;left:83px;top:237px;width:1px;height:18px;background:#a0a0a0"></div>
<div style="position:absolute;left:115px;top:237px;width:1px;height:18px;background:#a0a0a0"></div>
<div style="position:absolute;left:401px;top:237px;width:1px;height:18px;background:#a0a0a0"></div>
<div style="position:absolute;left:455px;top:237px;width:1px;height:18px;background:#a0a0a0"></div>
<div style="position:absolute;left:535px;top:237px;width:1px;height:18px;background:#a0a0a0"></div>
<div style="position:absolute;left:603px;top:237px;width:1px;height:18px;background:#a0a0a0"></div>
<div style="position:absolute;left:664px;top:237px;width:1px;height:18px;background:#a0a0a0"></div>
<div style="position:absolute;left:730px;top:237px;width:1px;height:18px;background:#a0a0a0"></div>
<div style="position:absolute;left:792px;top:237px;width:1px;height:18px;background:#a0a0a0"></div>
<div style="position:absolute;left:858px;top:237px;width:1px;height:18px;background:#a0a0a0"></div>
<div style="position:absolute;left:914px;top:237px;width:1px;height:18px;background:#a0a0a0"></div>
<div style="position:absolute;left:976px;top:237px;width:1px;height:18px;background:#a0a0a0"></div>
<div style="position:absolute;left:1044px;top:237px;width:1px;height:18px;background:#a0a0a0"></div>
<div style="position:absolute;left:1124px;top:237px;width:1px;height:18px;background:#a0a0a0"></div>
<div class="tx" style="left:45px;top:240px;width:36px">010402<svg width="37" height="12" fill="#000"><use href="#r30" x="0"/><use href="#r31" x="6"/><use href="#r30" x="12"/><use href="#r34" x="18"/><use href="#r30" x="24"/><use href="#r32" x="30"/></svg></div>
<div class="tx" style="left:88px;top:240px;width:24px">清单<svg width="25" height="12" fill="#000"><use href="#r6e05" x="0"/><use href="#r5355" x="12"/></svg></div>
<div class="tx" style="left:118px;top:240px;width:36px">矩形柱<svg width="37" height="12" fill="#000"><use href="#r77e9" x="0"/><use href="#r5f62" x="12"/><use href="#r67f1" x="24"/></svg></div>
<div class="tx" style="left:423px;top:240px;width:12px">m3<svg width="13" height="12" fill="#000"><use href="#r6d" x="0"/><use href="#r33" x="6"/></svg></div>
<div class="tx" style="left:503px;top:240px;width:30px">52.73<svg width="31" height="12" fill="#000"><use href="#r35" x="0"/><use href="#r32" x="6"/><use href="#r2e" x="12"/><use href="#r37" x="18"/><use href="#r33" x="24"/></svg></div>
<div class="tx" style="left:577px;top:240px;width:24px">0.00<svg width="25" height="12" fill="#000"><use href="#r30" x="0"/><use href="#r2e" x="6"/><use href="#r30" x="12"/><use href="#r30" x="18"/></svg></div>
<div class="tx" style="left:632px;top:240px;width:30px">0.00%<svg width="31" height="12" fill="#000"><use href="#r30" x="0"/><use href="#r2e" x="6"/><use href="#r30" x="12"/><use href="#r30" x="18"/><use href="#r25" x="24"/></svg></div>
<div class="tx" style="left:704px;top:240px;width:24px">0.00<svg width="25" height="12" fill="#000"><use href="#r30" x="0"/><use href="#r2e" x="6"/><use href="#r30" x="12"/><use href="#r30" x="18"/></svg></div>
<div class="tx" style="left:760px;top:240px;width:30px">0.00%<svg width="31" height="12" fill="#000"><use href="#r30" x="0"/><use href="#r2e" x="6"/><use href="#r30" x="12"/><use href="#r30" x="18"/><use href="#r25" x="24"/></svg></div>
<div class="tx" style="left:832px;top:240px;width:24px">0.00<svg width="25" height="12" fill="#000"><use href="#r30" x="0"/><use href="#r2e" x="6"/><use href="#r30" x="12"/><use href="#r30" x="18"/></svg></div>
<div class="tx" style="left:994px;top:240px;width:48px">22001.07<svg width="49" height="12" fill="#000"><use href="#r32" x="0"/><use href="#r32" x="6"/><use href="#r30" x="12"/><use href="#r30" x="18"/><use href="#r31" x="24"/><use href="#r2e" x="30"/><use href="#r30" x="36"/><use href="#r37" x="42"/></svg></div>
<div class="tx" style="left:1098px;top:240px;width:24px">0.00<svg width="25" height="12" fill="#000"><use href="#r30" x="0"/><use href="#r2e" x="6"/><use href="#r30" x="12"/><use href="#r30" x="18"/></svg></div>
<div style="position:absolute;left:881px;top:240px;width:11px;height:11px;border:1px solid #000;background:#fff"></div>
<div style="position:absolute;left:16px;top:237px;width:1px;height:17px;background:repeating-linear-gradient(#8c8c8c 0 1px,transparent 1px 2px)"></div>
<div style="position:absolute;left:33px;top:237px;width:1px;height:17px;background:repeating-linear-gradient(#8c8c8c 0 1px,transparent 1px 2px)"></div>
<div style="position:absolute;left:34px;top:245px;width:8px;height:1px;background:repeating-linear-gradient(90deg,#8c8c8c 0 1px,transparent 1px 2px)"></div>
<div style="position:absolute;left:0px;top:255px;width:14px;height:16px;background:#f0f0f0"></div>
<div style="position:absolute;left:0px;top:271px;width:14px;height:1px;background:#a8a8a8"></div>
<div style="position:absolute;left:14px;top:254px;width:1px;height:18px;background:#a0a0a0"></div>
<div style="position:absolute;left:43px;top:255px;width:1103px;height:16px;background:#ffffff"></div>
<div style="position:absolute;left:42px;top:254px;width:1px;height:18px;background:#a0a0a0"></div>
<div style="position:absolute;left:42px;top:271px;width:1104px;height:1px;background:#a0a0a0"></div>
<div style="position:absolute;left:83px;top:254px;width:1px;height:18px;background:#a0a0a0"></div>
<div style="position:absolute;left:115px;top:254px;width:1px;height:18px;background:#a0a0a0"></div>
<div style="position:absolute;left:401px;top:254px;width:1px;height:18px;background:#a0a0a0"></div>
<div style="position:absolute;left:455px;top:254px;width:1px;height:18px;background:#a0a0a0"></div>
<div style="position:absolute;left:535px;top:254px;width:1px;height:18px;background:#a0a0a0"></div>
<div style="position:absolute;left:603px;top:254px;width:1px;height:18px;background:#a0a0a0"></div>
<div style="position:absolute;left:664px;top:254px;width:1px;height:18px;background:#a0a0a0"></div>
<div style="position:absolute;left:730px;top:254px;width:1px;height:18px;background:#a0a0a0"></div>
<div style="position:absolute;left:792px;top:254px;width:1px;height:18px;background:#a0a0a0"></div>
<div style="position:absolute;left:858px;top:254px;width:1px;height:18px;background:#a0a0a0"></div>
<div style="position:absolute;left:914px;top:254px;width:1px;height:18px;background:#a0a0a0"></div>
<div style="position:absolute;left:976px;top:254px;width:1px;height:18px;background:#a0a0a0"></div>
<div style="position:absolute;left:1044px;top:254px;width:1px;height:18px;background:#a0a0a0"></div>
<div style="position:absolute;left:1124px;top:254px;width:1px;height:18px;background:#a0a0a0"></div>
<div class="tx" style="left:45px;top:257px;width:36px">010402<svg width="37" height="12" fill="#000"><use href="#r30" x="0"/><use href="#r31" x="6"/><use href="#r30" x="12"/><use href="#r34" x="18"/><use href="#r30" x="24"/><use href="#r32" x="30"/></svg></div>
<div class="tx" style="left:88px;top:257px;width:24px">清单<svg width="25" height="12" fill="#000"><use href="#r6e05" x="0"/><use href="#r5355" x="12"/></svg></div>
<div class="tx" style="left:118px;top:257px;width:84px">矩形柱（梯柱）<svg width="85" height="12" fill="#000"><use href="#r77e9" x="0"/><use href="#r5f62" x="12"/><use href="#r67f1" x="24"/><use href="#rff08" x="36"/><use href="#r68af" x="48"/><use href="#r67f1" x="60"/><use href="#rff09" x="72"/></svg></div>
<div class="tx" style="left:423px;top:257px;width:12px">m3<svg width="13" height="12" fill="#000"><use href="#r6d" x="0"/><use href="#r33" x="6"/></svg></div>
<div class="tx" style="left:509px;top:257px;width:24px">0.62<svg width="25" height="12" fill="#000"><use href="#r30" x="0"/><use href="#r2e" x="6"/><use href="#r36" x="12"/><use href="#r32" x="18"/></svg></div>
<div class="tx" style="left:577px;top:257px;width:24px">0.00<svg width="25" height="12" fill="#000"><use href="#r30" x="0"/><use href="#r2e" x="6"/><use href="#r30" x="12"/><use href="#r30" x="18"/></svg></div>
<div class="tx" style="left:632px;top:257px;width:30px">0.00%<svg width="31" height="12" fill="#000"><use href="#r30" x="0"/><use href="#r2e" x="6"/><use href="#r30" x="12"/><use href="#r30" x="18"/><use href="#r25" x="24"/></svg></div>
<div class="tx" style="left:704px;top:257px;width:24px">0.00<svg width="25" height="12" fill="#000"><use href="#r30" x="0"/><use href="#r2e" x="6"/><use href="#r30" x="12"/><use href="#r30" x="18"/></svg></div>
<div class="tx" style="left:760px;top:257px;width:30px">0.00%<svg width="31" height="12" fill="#000"><use href="#r30" x="0"/><use href="#r2e" x="6"/><use href="#r30" x="12"/><use href="#r30" x="18"/><use href="#r25" x="24"/></svg></div>
<div class="tx" style="left:832px;top:257px;width:24px">0.00<svg width="25" height="12" fill="#000"><use href="#r30" x="0"/><use href="#r2e" x="6"/><use href="#r30" x="12"/><use href="#r30" x="18"/></svg></div>
<div class="tx" style="left:1006px;top:257px;width:36px">258.69<svg width="37" height="12" fill="#000"><use href="#r32" x="0"/><use href="#r35" x="6"/><use href="#r38" x="12"/><use href="#r2e" x="18"/><use href="#r36" x="24"/><use href="#r39" x="30"/></svg></div>
<div class="tx" style="left:1098px;top:257px;width:24px">0.00<svg width="25" height="12" fill="#000"><use href="#r30" x="0"/><use href="#r2e" x="6"/><use href="#r30" x="12"/><use href="#r30" x="18"/></svg></div>
<div style="position:absolute;left:881px;top:257px;width:11px;height:11px;border:1px solid #000;background:#fff"></div>
<div style="position:absolute;left:16px;top:255px;width:1px;height:16px;background:repeating-linear-gradient(#8c8c8c 0 1px,transparent 1px 2px)"></div>
<div style="position:absolute;left:33px;top:255px;width:1px;height:16px;background:repeating-linear-gradient(#8c8c8c 0 1px,transparent 1px 2px)"></div>
<div style="position:absolute;left:34px;top:262px;width:8px;height:1px;background:repeating-linear-gradient(90deg,#8c8c8c 0 1px,transparent 1px 2px)"></div>
<div style="position:absolute;left:0px;top:272px;width:14px;height:16px;background:#f0f0f0"></div>
<div style="position:absolute;left:0px;top:288px;width:14px;height:1px;background:#a8a8a8"></div>
<div style="position:absolute;left:14px;top:271px;width:1px;height:18px;background:#a0a0a0"></div>
<div style="position:absolute;left:43px;top:272px;width:1103px;height:16px;background:#ffffff"></div>
<div style="position:absolute;left:42px;top:271px;width:1px;height:18px;background:#a0a0a0"></div>
<div style="position:absolute;left:42px;top:288px;width:1104px;height:1px;background:#a0a0a0"></div>
<div style="position:absolute;left:83px;top:271px;width:1px;height:18px;background:#a0a0a0"></div>
<div style="position:absolute;left:115px;top:271px;width:1px;height:18px;background:#a0a0a0"></div>
<div style="position:absolute;left:401px;top:271px;width:1px;height:18px;background:#a0a0a0"></div>
<div style="position:absolute;left:455px;top:271px;width:1px;height:18px;background:#a0a0a0"></div>
<div style="position:absolute;left:535px;top:271px;width:1px;height:18px;background:#a0a0a0"></div>
<div style="position:absolute;left:603px;top:271px;width:1px;height:18px;background:#a0a0a0"></div>
<div style="position:absolute;left:664px;top:271px;width:1px;height:18px;background:#a0a0a0"></div>
<div style="position:absolute;left:730px;top:271px;width:1px;height:18px;background:#a0a0a0"></div>
<div style="position:absolute;left:792px;top:271px;width:1px;height:18px;background:#a0a0a0"></div>
<div style="position:absolute;left:858px;top:271px;width:1px;height:18px;background:#a0a0a0"></div>
<div style="position:absolute;left:914px;top:271px;width:1px;height:18px;background:#a0a0a0"></div>
<div style="position:absolute;left:976px;top:271px;width:1px;height:18px;background:#a0a0a0"></div>
<div style="position:absolute;left:1044px;top:271px;width:1px;height:18px;background:#a0a0a0"></div>
<div style="position:absolute;left:1124px;top:271px;width:1px;height:18px;background:#a0a0a0"></div>
<div class="tx" style="left:45px;top:274px;width:36px">010402<svg width="37" height="12" fill="#000"><use href="#r30" x="0"/><use href="#r31" x="6"/><use href="#r30" x="12"/><use href="#r34" x="18"/><use href="#r30" x="24"/><use href="#r32" x="30"/></svg></div>
<div class="tx" style="left:88px;top:274px;width:24px">清单<svg width="25" height="12" fill="#000"><use href="#r6e05" x="0"/><use href="#r5355" x="12"/></svg></div>
<div class="tx" style="left:118px;top:274px;width:36px">圆形柱<svg width="37" height="12" fill="#000"><use href="#r5706" x="0"/><use href="#r5f62" x="12"/><use href="#r67f1" x="24"/></svg></div>
<div class="tx" style="left:423px;top:274px;width:12px">m3<svg width="13" height="12" fill="#000"><use href="#r6d" x="0"/><use href="#r33" x="6"/></svg></div>
<div class="tx" style="left:509px;top:274px;width:24px">9.34<svg width="25" height="12" fill="#000"><use href="#r39" x="0"/><use href="#r2e" x="6"/><use href="#r33" x="12"/><use href="#r34" x="18"/></svg></div>
<div class="tx" style="left:577px;top:274px;width:24px">0.00<svg width="25" height="12" fill="#000"><use href="#r30" x="0"/><use href="#r2e" x="6"/><use href="#r30" x="12"/><use href="#r30" x="18"/></svg></div>
<div class="tx" style="left:632px;top:274px;width:30px">0.00%<svg width="31" height="12" fill="#000"><use href="#r30" x="0"/><use href="#r2e" x="6"/><use href="#r30" x="12"/><use href="#r30" x="18"/><use href="#r25" x="24"/></svg></div>
<div class="tx" style="left:704px;top:274px;width:24px">0.00<svg width="25" height="12" fill="#000"><use href="#r30" x="0"/><use href="#r2e" x="6"/><use href="#r30" x="12"/><use href="#r30" x="18"/></svg></div>
<div class="tx" style="left:760px;top:274px;width:30px">0.00%<svg width="31" height="12" fill="#000"><use href="#r30" x="0"/><use href="#r2e" x="6"/><use href="#r30" x="12"/><use href="#r30" x="18"/><use href="#r25" x="24"/></svg></div>
<div class="tx" style="left:832px;top:274px;width:24px">0.00<svg width="25" height="12" fill="#000"><use href="#r30" x="0"/><use href="#r2e" x="6"/><use href="#r30" x="12"/><use href="#r30" x="18"/></svg></div>
<div class="tx" style="left:1000px;top:274px;width:42px">3897.02<svg width="43" height="12" fill="#000"><use href="#r33" x="0"/><use href="#r38" x="6"/><use href="#r39" x="12"/><use href="#r37" x="18"/><use href="#r2e" x="24"/><use href="#r30" x="30"/><use href="#r32" x="36"/></svg></div>
<div class="tx" style="left:1098px;top:274px;width:24px">0.00<svg width="25" height="12" fill="#000"><use href="#r30" x="0"/><use href="#r2e" x="6"/><use href="#r30" x="12"/><use href="#r30" x="18"/></svg></div>
<div style="position:absolute;left:881px;top:274px;width:11px;height:11px;border:1px solid #000;background:#fff"></div>
<div style="position:absolute;left:16px;top:271px;width:1px;height:17px;background:repeating-linear-gradient(#8c8c8c 0 1px,transparent 1px 2px)"></div>
<div style="position:absolute;left:33px;top:271px;width:1px;height:17px;background:repeating-linear-gradient(#8c8c8c 0 1px,transparent 1px 2px)"></div>
<div style="position:absolute;left:34px;top:279px;width:8px;height:1px;background:repeating-linear-gradient(90deg,#8c8c8c 0 1px,transparent 1px 2px)"></div>
<div style="position:absolute;left:0px;top:289px;width:14px;height:16px;background:#f0f0f0"></div>
<div style="position:absolute;left:0px;top:305px;width:14px;height:1px;background:#a8a8a8"></div>
<div style="position:absolute;left:14px;top:288px;width:1px;height:18px;background:#a0a0a0"></div>
<div style="position:absolute;left:43px;top:289px;width:1103px;height:16px;background:#ffffff"></div>
<div style="position:absolute;left:42px;top:288px;width:1px;height:18px;background:#a0a0a0"></div>
<div style="position:absolute;left:42px;top:305px;width:1104px;height:1px;background:#a0a0a0"></div>
<div style="position:absolute;left:83px;top:288px;width:1px;height:18px;background:#a0a0a0"></div>
<div style="position:absolute;left:115px;top:288px;width:1px;height:18px;background:#a0a0a0"></div>
<div style="position:absolute;left:401px;top:288px;width:1px;height:18px;background:#a0a0a0"></div>
<div style="position:absolute;left:455px;top:288px;width:1px;height:18px;background:#a0a0a0"></div>
<div style="position:absolute;left:535px;top:288px;width:1px;height:18px;background:#a0a0a0"></div>
<div style="position:absolute;left:603px;top:288px;width:1px;height:18px;background:#a0a0a0"></div>
<div style="position:absolute;left:664px;top:288px;width:1px;height:18px;background:#a0a0a0"></div>
<div style="position:absolute;left:730px;top:288px;width:1px;height:18px;background:#a0a0a0"></div>
<div style="position:absolute;left:792px;top:288px;width:1px;height:18px;background:#a0a0a0"></div>
<div style="position:absolute;left:858px;top:288px;width:1px;height:18px;background:#a0a0a0"></div>
<div style="position:absolute;left:914px;top:288px;width:1px;height:18px;background:#a0a0a0"></div>
<div style="position:absolute;left:976px;top:288px;width:1px;height:18px;background:#a0a0a0"></div>
<div style="position:absolute;left:1044px;top:288px;width:1px;height:18px;background:#a0a0a0"></div>
<div style="position:absolute;left:1124px;top:288px;width:1px;height:18px;background:#a0a0a0"></div>
<div class="tx" style="left:45px;top:291px;width:36px">010403<svg width="37" height="12" fill="#000"><use href="#r30" x="0"/><use href="#r31" x="6"/><use href="#r30" x="12"/><use href="#r34" x="18"/><use href="#r30" x="24"/><use href="#r33" x="30"/></svg></div>
<div class="tx" style="left:88px;top:291px;width:24px">清单<svg width="25" height="12" fill="#000"><use href="#r6e05" x="0"/><use href="#r5355" x="12"/></svg></div>
<div class="tx" style="left:118px;top:291px;width:96px">矩形梁（水平梁）<svg width="97" height="12" fill="#000"><use href="#r77e9" x="0"/><use href="#r5f62" x="12"/><use href="#r6881" x="24"/><use href="#rff08" x="36"/><use href="#r6c34" x="48"/><use href="#r5e73" x="60"/><use href="#r6881" x="72"/><use href="#rff09" x="84"/></svg></div>
<div class="tx" style="left:423px;top:291px;width:12px">m3<svg width="13" height="12" fill="#000"><use href="#r6d" x="0"/><use href="#r33" x="6"/></svg></div>
<div class="tx" style="left:503px;top:291px;width:30px">28.97<svg width="31" height="12" fill="#000"><use href="#r32" x="0"/><use href="#r38" x="6"/><use href="#r2e" x="12"/><use href="#r39" x="18"/><use href="#r37" x="24"/></svg></div>
<div class="tx" style="left:577px;top:291px;width:24px">0.00<svg width="25" height="12" fill="#000"><use href="#r30" x="0"/><use href="#r2e" x="6"/><use href="#r30" x="12"/><use href="#r30" x="18"/></svg></div>
<div class="tx" style="left:632px;top:291px;width:30px">0.00%<svg width="31" height="12" fill="#000"><use href="#r30" x="0"/><use href="#r2e" x="6"/><use href="#r30" x="12"/><use href="#r30" x="18"/><use href="#r25" x="24"/></svg></div>
<div class="tx" style="left:704px;top:291px;width:24px">0.00<svg width="25" height="12" fill="#000"><use href="#r30" x="0"/><use href="#r2e" x="6"/><use href="#r30" x="12"/><use href="#r30" x="18"/></svg></div>
<div class="tx" style="left:760px;top:291px;width:30px">0.00%<svg width="31" height="12" fill="#000"><use href="#r30" x="0"/><use href="#r2e" x="6"/><use href="#r30" x="12"/><use href="#r30" x="18"/><use href="#r25" x="24"/></svg></div>
<div class="tx" style="left:832px;top:291px;width:24px">0.00<svg width="25" height="12" fill="#000"><use href="#r30" x="0"/><use href="#r2e" x="6"/><use href="#r30" x="12"/><use href="#r30" x="18"/></svg></div>
<div class="tx" style="left:994px;top:291px;width:48px">12087.44<svg width="49" height="12" fill="#000"><use href="#r31" x="0"/><use href="#r32" x="6"/><use href="#r30" x="12"/><use href="#r38" x="18"/><use href="#r37" x="24"/><use href="#r2e" x="30"/><use href="#r34" x="36"/><use href="#r34" x="42"/></svg></div>
<div class="tx" style="left:1098px;top:291px;width:24px">0.00<svg width="25" height="12" fill="#000"><use href="#r30" x="0"/><use href="#r2e" x="6"/><use href="#r30" x="12"/><use href="#r30" x="18"/></svg></div>
<div style="position:absolute;left:881px;top:291px;width:11px;height:11px;border:1px solid #000;background:#fff"></div>
<div style="position:absolute;left:16px;top:289px;width:1px;height:16px;background:repeating-linear-gradient(#8c8c8c 0 1px,transparent 1px 2px)"></div>
<div style="position:absolute;left:33px;top:289px;width:1px;height:16px;background:repeating-linear-gradient(#8c8c8c 0 1px,transparent 1px 2px)"></div>
<div style="position:absolute;left:34px;top:296px;width:8px;height:1px;background:repeating-linear-gradient(90deg,#8c8c8c 0 1px,transparent 1px 2px)"></div>
<div style="position:absolute;left:0px;top:306px;width:14px;height:16px;background:#f0f0f0"></div>
<div style="position:absolute;left:0px;top:322px;width:14px;height:1px;background:#a8a8a8"></div>
<div style="position:absolute;left:14px;top:305px;width:1px;height:18px;background:#a0a0a0"></div>
<div style="position:absolute;left:43px;top:306px;width:1103px;height:16px;background:#ffffff"></div>
<div style="position:absolute;left:42px;top:305px;width:1px;height:18px;background:#a0a0a0"></div>
<div style="position:absolute;left:42px;top:322px;width:1104px;height:1px;background:#a0a0a0"></div>
<div style="position:absolute;left:83px;top:305px;width:1px;height:18px;background:#a0a0a0"></div>
<div style="position:absolute;left:115px;top:305px;width:1px;height:18px;background:#a0a0a0"></div>
<div style="position:absolute;left:401px;top:305px;width:1px;height:18px;background:#a0a0a0"></div>
<div style="position:absolute;left:455px;top:305px;width:1px;height:18px;background:#a0a0a0"></div>
<div style="position:absolute;left:535px;top:305px;width:1px;height:18px;background:#a0a0a0"></div>
<div style="position:absolute;left:603px;top:305px;width:1px;height:18px;background:#a0a0a0"></div>
<div style="position:absolute;left:664px;top:305px;width:1px;height:18px;background:#a0a0a0"></div>
<div style="position:absolute;left:730px;top:305px;width:1px;height:18px;background:#a0a0a0"></div>
<div style="position:absolute;left:792px;top:305px;width:1px;height:18px;background:#a0a0a0"></div>
<div style="position:absolute;left:858px;top:305px;width:1px;height:18px;background:#a0a0a0"></div>
<div style="position:absolute;left:914px;top:305px;width:1px;height:18px;background:#a0a0a0"></div>
<div style="position:absolute;left:976px;top:305px;width:1px;height:18px;background:#a0a0a0"></div>
<div style="position:absolute;left:1044px;top:305px;width:1px;height:18px;background:#a0a0a0"></div>
<div style="position:absolute;left:1124px;top:305px;width:1px;height:18px;background:#a0a0a0"></div>
<div class="tx" style="left:45px;top:308px;width:36px">010403<svg width="37" height="12" fill="#000"><use href="#r30" x="0"/><use href="#r31" x="6"/><use href="#r30" x="12"/><use href="#r34" x="18"/><use href="#r30" x="24"/><use href="#r33" x="30"/></svg></div>
<div class="tx" style="left:88px;top:308px;width:24px">清单<svg width="25" height="12" fill="#000"><use href="#r6e05" x="0"/><use href="#r5355" x="12"/></svg></div>
<div class="tx" style="left:118px;top:308px;width:120px">矩形梁（坡屋面折梁）<svg width="121" height="12" fill="#000"><use href="#r77e9" x="0"/><use href="#r5f62" x="12"/><use href="#r6881" x="24"/><use href="#rff08" x="36"/><use href="#r5761" x="48"/><use href="#r5c4b" x="60"/><use href="#r9762" x="72"/><use href="#r6298" x="84"/><use href="#r6881" x="96"/><use href="#rff09" x="108"/></svg></div>
<div class="tx" style="left:423px;top:308px;width:12px">m3<svg width="13" height="12" fill="#000"><use href="#r6d" x="0"/><use href="#r33" x="6"/></svg></div>
<div class="tx" style="left:503px;top:308px;width:30px">31.72<svg width="31" height="12" fill="#000"><use href="#r33" x="0"/><use href="#r31" x="6"/><use href="#r2e" x="12"/><use href="#r37" x="18"/><use href="#r32" x="24"/></svg></div>
<div class="tx" style="left:577px;top:308px;width:24px">0.00<svg width="25" height="12" fill="#000"><use href="#r30" x="0"/><use href="#r2e" x="6"/><use href="#r30" x="12"/><use href="#r30" x="18"/></svg></div>
<div class="tx" style="left:632px;top:308px;width:30px">0.00%<svg width="31" height="12" fill="#000"><use href="#r30" x="0"/><use href="#r2e" x="6"/><use href="#r30" x="12"/><use href="#r30" x="18"/><use href="#r25" x="24"/></svg></div>
<div class="tx" style="left:704px;top:308px;width:24px">0.00<svg width="25" height="12" fill="#000"><use href="#r30" x="0"/><use href="#r2e" x="6"/><use href="#r30" x="12"/><use href="#r30" x="18"/></svg></div>
<div class="tx" style="left:760px;top:308px;width:30px">0.00%<svg width="31" height="12" fill="#000"><use href="#r30" x="0"/><use href="#r2e" x="6"/><use href="#r30" x="12"/><use href="#r30" x="18"/><use href="#r25" x="24"/></svg></div>
<div class="tx" style="left:832px;top:308px;width:24px">0.00<svg width="25" height="12" fill="#000"><use href="#r30" x="0"/><use href="#r2e" x="6"/><use href="#r30" x="12"/><use href="#r30" x="18"/></svg></div>
<div class="tx" style="left:994px;top:308px;width:48px">13234.85<svg width="49" height="12" fill="#000"><use href="#r31" x="0"/><use href="#r33" x="6"/><use href="#r32" x="12"/><use href="#r33" x="18"/><use href="#r34" x="24"/><use href="#r2e" x="30"/><use href="#r38" x="36"/><use href="#r35" x="42"/></svg></div>
<div class="tx" style="left:1098px;top:308px;width:24px">0.00<svg width="25" height="12" fill="#000"><use href="#r30" x="0"/><use href="#r2e" x="6"/><use href="#r30" x="12"/><use href="#r30" x="18"/></svg></div>
<div style="position:absolute;left:881px;top:308px;width:11px;height:11px;border:1px solid #000;background:#fff"></div>
<div style="position:absolute;left:16px;top:305px;width:1px;height:17px;background:repeating-linear-gradient(#8c8c8c 0 1px,transparent 1px 2px)"></div>
<div style="position:absolute;left:33px;top:305px;width:1px;height:17px;background:repeating-linear-gradient(#8c8c8c 0 1px,transparent 1px 2px)"></div>
<div style="position:absolute;left:34px;top:313px;width:8px;height:1px;background:repeating-linear-gradient(90deg,#8c8c8c 0 1px,transparent 1px 2px)"></div>
<div style="position:absolute;left:0px;top:323px;width:14px;height:16px;background:#f0f0f0"></div>
<div style="position:absolute;left:0px;top:339px;width:14px;height:1px;background:#a8a8a8"></div>
<div style="position:absolute;left:14px;top:322px;width:1px;height:18px;background:#a0a0a0"></div>
<div style="position:absolute;left:43px;top:323px;width:1103px;height:16px;background:#ffffff"></div>
<div style="position:absolute;left:42px;top:322px;width:1px;height:18px;background:#a0a0a0"></div>
<div style="position:absolute;left:42px;top:339px;width:1104px;height:1px;background:#a0a0a0"></div>
<div style="position:absolute;left:83px;top:322px;width:1px;height:18px;background:#a0a0a0"></div>
<div style="position:absolute;left:115px;top:322px;width:1px;height:18px;background:#a0a0a0"></div>
<div style="position:absolute;left:401px;top:322px;width:1px;height:18px;background:#a0a0a0"></div>
<div style="position:absolute;left:455px;top:322px;width:1px;height:18px;background:#a0a0a0"></div>
<div style="position:absolute;left:535px;top:322px;width:1px;height:18px;background:#a0a0a0"></div>
<div style="position:absolute;left:603px;top:322px;width:1px;height:18px;background:#a0a0a0"></div>
<div style="position:absolute;left:664px;top:322px;width:1px;height:18px;background:#a0a0a0"></div>
<div style="position:absolute;left:730px;top:322px;width:1px;height:18px;background:#a0a0a0"></div>
<div style="position:absolute;left:792px;top:322px;width:1px;height:18px;background:#a0a0a0"></div>
<div style="position:absolute;left:858px;top:322px;width:1px;height:18px;background:#a0a0a0"></div>
<div style="position:absolute;left:914px;top:322px;width:1px;height:18px;background:#a0a0a0"></div>
<div style="position:absolute;left:976px;top:322px;width:1px;height:18px;background:#a0a0a0"></div>
<div style="position:absolute;left:1044px;top:322px;width:1px;height:18px;background:#a0a0a0"></div>
<div style="position:absolute;left:1124px;top:322px;width:1px;height:18px;background:#a0a0a0"></div>
<div class="tx" style="left:45px;top:325px;width:36px">010403<svg width="37" height="12" fill="#000"><use href="#r30" x="0"/><use href="#r31" x="6"/><use href="#r30" x="12"/><use href="#r34" x="18"/><use href="#r30" x="24"/><use href="#r33" x="30"/></svg></div>
<div class="tx" style="left:88px;top:325px;width:24px">清单<svg width="25" height="12" fill="#000"><use href="#r6e05" x="0"/><use href="#r5355" x="12"/></svg></div>
<div class="tx" style="left:118px;top:325px;width:24px">过梁<svg width="25" height="12" fill="#000"><use href="#r8fc7" x="0"/><use href="#r6881" x="12"/></svg></div>
<div class="tx" style="left:423px;top:325px;width:12px">m3<svg width="13" height="12" fill="#000"><use href="#r6d" x="0"/><use href="#r33" x="6"/></svg></div>
<div class="tx" style="left:509px;top:325px;width:24px">5.74<svg width="25" height="12" fill="#000"><use href="#r35" x="0"/><use href="#r2e" x="6"/><use href="#r37" x="12"/><use href="#r34" x="18"/></svg></div>
<div class="tx" style="left:577px;top:325px;width:24px">0.00<svg width="25" height="12" fill="#000"><use href="#r30" x="0"/><use href="#r2e" x="6"/><use href="#r30" x="12"/><use href="#r30" x="18"/></svg></div>
<div class="tx" style="left:632px;top:325px;width:30px">0.00%<svg width="31" height="12" fill="#000"><use href="#r30" x="0"/><use href="#r2e" x="6"/><use href="#r30" x="12"/><use href="#r30" x="18"/><use href="#r25" x="24"/></svg></div>
<div class="tx" style="left:704px;top:325px;width:24px">0.00<svg width="25" height="12" fill="#000"><use href="#r30" x="0"/><use href="#r2e" x="6"/><use href="#r30" x="12"/><use href="#r30" x="18"/></svg></div>
<div class="tx" style="left:760px;top:325px;width:30px">0.00%<svg width="31" height="12" fill="#000"><use href="#r30" x="0"/><use href="#r2e" x="6"/><use href="#r30" x="12"/><use href="#r30" x="18"/><use href="#r25" x="24"/></svg></div>
<div class="tx" style="left:832px;top:325px;width:24px">0.00<svg width="25" height="12" fill="#000"><use href="#r30" x="0"/><use href="#r2e" x="6"/><use href="#r30" x="12"/><use href="#r30" x="18"/></svg></div>
<div class="tx" style="left:1000px;top:325px;width:42px">4207.99<svg width="43" height="12" fill="#000"><use href="#r34" x="0"/><use href="#r32" x="6"/><use href="#r30" x="12"/><use href="#r37" x="18"/><use href="#r2e" x="24"/><use href="#r39" x="30"/><use href="#r39" x="36"/></svg></div>
<div class="tx" style="left:1098px;top:325px;width:24px">0.00<svg width="25" height="12" fill="#000"><use href="#r30" x="0"/><use href="#r2e" x="6"/><use href="#r30" x="12"/><use href="#r30" x="18"/></svg></div>
<div style="position:absolute;left:881px;top:325px;width:11px;height:11px;border:1px solid #000;background:#fff"></div>
<div style="position:absolute;left:16px;top:323px;width:1px;height:16px;background:repeating-linear-gradient(#8c8c8c 0 1px,transparent 1px 2px)"></div>
<div style="position:absolute;left:33px;top:323px;width:1px;height:16px;background:repeating-linear-gradient(#8c8c8c 0 1px,transparent 1px 2px)"></div>
<div style="position:absolute;left:34px;top:330px;width:8px;height:1px;background:repeating-linear-gradient(90deg,#8c8c8c 0 1px,transparent 1px 2px)"></div>
<div style="position:absolute;left:0px;top:340px;width:14px;height:16px;background:#f0f0f0"></div>
<div style="position:absolute;left:0px;top:356px;width:14px;height:1px;background:#a8a8a8"></div>
<div style="position:absolute;left:14px;top:339px;width:1px;height:18px;background:#a0a0a0"></div>
<div style="position:absolute;left:43px;top:340px;width:1103px;height:16px;background:#ffffff"></div>
<div style="position:absolute;left:42px;top:339px;width:1px;height:18px;background:#a0a0a0"></div>
<div style="position:absolute;left:42px;top:356px;width:1104px;height:1px;background:#a0a0a0"></div>
<div style="position:absolute;left:83px;top:339px;width:1px;height:18px;background:#a0a0a0"></div>
<div style="position:absolute;left:115px;top:339px;width:1px;height:18px;background:#a0a0a0"></div>
<div style="position:absolute;left:401px;top:339px;width:1px;height:18px;background:#a0a0a0"></div>
<div style="position:absolute;left:455px;top:339px;width:1px;height:18px;background:#a0a0a0"></div>
<div style="position:absolute;left:535px;top:339px;width:1px;height:18px;background:#a0a0a0"></div>
<div style="position:absolute;left:603px;top:339px;width:1px;height:18px;background:#a0a0a0"></div>
<div style="position:absolute;left:664px;top:339px;width:1px;height:18px;background:#a0a0a0"></div>
<div style="position:absolute;left:730px;top:339px;width:1px;height:18px;background:#a0a0a0"></div>
<div style="position:absolute;left:792px;top:339px;width:1px;height:18px;background:#a0a0a0"></div>
<div style="position:absolute;left:858px;top:339px;width:1px;height:18px;background:#a0a0a0"></div>
<div style="position:absolute;left:914px;top:339px;width:1px;height:18px;background:#a0a0a0"></div>
<div style="position:absolute;left:976px;top:339px;width:1px;height:18px;background:#a0a0a0"></div>
<div style="position:absolute;left:1044px;top:339px;width:1px;height:18px;background:#a0a0a0"></div>
<div style="position:absolute;left:1124px;top:339px;width:1px;height:18px;background:#a0a0a0"></div>
<div class="tx" style="left:45px;top:342px;width:36px">010405<svg width="37" height="12" fill="#000"><use href="#r30" x="0"/><use href="#r31" x="6"/><use href="#r30" x="12"/><use href="#r34" x="18"/><use href="#r30" x="24"/><use href="#r35" x="30"/></svg></div>
<div class="tx" style="left:88px;top:342px;width:24px">清单<svg width="25" height="12" fill="#000"><use href="#r6e05" x="0"/><use href="#r5355" x="12"/></svg></div>
<div class="tx" style="left:118px;top:342px;width:96px">有梁板（水平板）<svg width="97" height="12" fill="#000"><use href="#r6709" x="0"/><use href="#r6881" x="12"/><use href="#r677f" x="24"/><use href="#rff08" x="36"/><use href="#r6c34" x="48"/><use href="#r5e73" x="60"/><use href="#r677f" x="72"/><use href="#rff09" x="84"/></svg></div>
<div class="tx" style="left:423px;top:342px;width:12px">m3<svg width="13" height="12" fill="#000"><use href="#r6d" x="0"/><use href="#r33" x="6"/></svg></div>
<div class="tx" style="left:503px;top:342px;width:30px">12.94<svg width="31" height="12" fill="#000"><use href="#r31" x="0"/><use href="#r32" x="6"/><use href="#r2e" x="12"/><use href="#r39" x="18"/><use href="#r34" x="24"/></svg></div>
<div class="tx" style="left:577px;top:342px;width:24px">0.00<svg width="25" height="12" fill="#000"><use href="#r30" x="0"/><use href="#r2e" x="6"/><use href="#r30" x="12"/><use href="#r30" x="18"/></svg></div>
<div class="tx" style="left:632px;top:342px;width:30px">0.00%<svg width="31" height="12" fill="#000"><use href="#r30" x="0"/><use href="#r2e" x="6"/><use href="#r30" x="12"/><use href="#r30" x="18"/><use href="#r25" x="24"/></svg></div>
<div class="tx" style="left:704px;top:342px;width:24px">0.00<svg width="25" height="12" fill="#000"><use href="#r30" x="0"/><use href="#r2e" x="6"/><use href="#r30" x="12"/><use href="#r30" x="18"/></svg></div>
<div class="tx" style="left:760px;top:342px;width:30px">0.00%<svg width="31" height="12" fill="#000"><use href="#r30" x="0"/><use href="#r2e" x="6"/><use href="#r30" x="12"/><use href="#r30" x="18"/><use href="#r25" x="24"/></svg></div>
<div class="tx" style="left:832px;top:342px;width:24px">0.00<svg width="25" height="12" fill="#000"><use href="#r30" x="0"/><use href="#r2e" x="6"/><use href="#r30" x="12"/><use href="#r30" x="18"/></svg></div>
<div class="tx" style="left:1000px;top:342px;width:42px">5399.09<svg width="43" height="12" fill="#000"><use href="#r35" x="0"/><use href="#r33" x="6"/><use href="#r39" x="12"/><use href="#r39" x="18"/><use href="#r2e" x="24"/><use href="#r30" x="30"/><use href="#r39" x="36"/></svg></div>
<div class="tx" style="left:1098px;top:342px;width:24px">0.00<svg width="25" height="12" fill="#000"><use href="#r30" x="0"/><use href="#r2e" x="6"/><use href="#r30" x="12"/><use href="#r30" x="18"/></svg></div>
<div style="position:absolute;left:881px;top:342px;width:11px;height:11px;border:1px solid #000;background:#fff"></div>
<div style="position:absolute;left:16px;top:339px;width:1px;height:17px;background:repeating-linear-gradient(#8c8c8c 0 1px,transparent 1px 2px)"></div>
<div style="position:absolute;left:33px;top:339px;width:1px;height:17px;background:repeating-linear-gradient(#8c8c8c 0 1px,transparent 1px 2px)"></div>
<div style="position:absolute;left:34px;top:347px;width:8px;height:1px;background:repeating-linear-gradient(90deg,#8c8c8c 0 1px,transparent 1px 2px)"></div>
<div style="position:absolute;left:0px;top:357px;width:14px;height:16px;background:#f0f0f0"></div>
<div style="position:absolute;left:0px;top:373px;width:14px;height:1px;background:#a8a8a8"></div>
<div style="position:absolute;left:14px;top:356px;width:1px;height:18px;background:#a0a0a0"></div>
<div style="position:absolute;left:43px;top:357px;width:1103px;height:16px;background:#ffffff"></div>
<div style="position:absolute;left:42px;top:356px;width:1px;height:18px;background:#a0a0a0"></div>
<div style="position:absolute;left:42px;top:373px;width:1104px;height:1px;background:#a0a0a0"></div>
<div style="position:absolute;left:83px;top:356px;width:1px;height:18px;background:#a0a0a0"></div>
<div style="position:absolute;left:115px;top:356px;width:1px;height:18px;background:#a0a0a0"></div>
<div style="position:absolute;left:401px;top:356px;width:1px;height:18px;background:#a0a0a0"></div>
<div style="position:absolute;left:455px;top:356px;width:1px;height:18px;background:#a0a0a0"></div>
<div style="position:absolute;left:535px;top:356px;width:1px;height:18px;background:#a0a0a0"></div>
<div style="position:absolute;left:603px;top:356px;width:1px;height:18px;background:#a0a0a0"></div>
<div style="position:absolute;left:664px;top:356px;width:1px;height:18px;background:#a0a0a0"></div>
<div style="position:absolute;left:730px;top:356px;width:1px;height:18px;background:#a0a0a0"></div>
<div style="position:absolute;left:792px;top:356px;width:1px;height:18px;background:#a0a0a0"></div>
<div style="position:absolute;left:858px;top:356px;width:1px;height:18px;background:#a0a0a0"></div>
<div style="position:absolute;left:914px;top:356px;width:1px;height:18px;background:#a0a0a0"></div>
<div style="position:absolute;left:976px;top:356px;width:1px;height:18px;background:#a0a0a0"></div>
<div style="position:absolute;left:1044px;top:356px;width:1px;height:18px;background:#a0a0a0"></div>
<div style="position:absolute;left:1124px;top:356px;width:1px;height:18px;background:#a0a0a0"></div>
<div class="tx" style="left:45px;top:359px;width:36px">010405<svg width="37" height="12" fill="#000"><use href="#r30" x="0"/><use href="#r31" x="6"/><use href="#r30" x="12"/><use href="#r34" x="18"/><use href="#r30" x="24"/><use href="#r35" x="30"/></svg></div>
<div class="tx" style="left:88px;top:359px;width:24px">清单<svg width="25" height="12" fill="#000"><use href="#r6e05" x="0"/><use href="#r5355" x="12"/></svg></div>
<div class="tx" style="left:118px;top:359px;width:96px">有梁板（坡屋板）<svg width="97" height="12" fill="#000"><use href="#r6709" x="0"/><use href="#r6881" x="12"/><use href="#r677f" x="24"/><use href="#rff08" x="36"/><use href="#r5761" x="48"/><use href="#r5c4b" x="60"/><use href="#r677f" x="72"/><use href="#rff09" x="84"/></svg></div>
<div class="tx" style="left:423px;top:359px;width:12px">m3<svg width="13" height="12" fill="#000"><use href="#r6d" x="0"/><use href="#r33" x="6"/></svg></div>
<div class="tx" style="left:503px;top:359px;width:30px">19.45<svg width="31" height="12" fill="#000"><use href="#r31" x="0"/><use href="#r39" x="6"/><use href="#r2e" x="12"/><use href="#r34" x="18"/><use href="#r35" x="24"/></svg></div>
<div class="tx" style="left:577px;top:359px;width:24px">0.00<svg width="25" height="12" fill="#000"><use href="#r30" x="0"/><use href="#r2e" x="6"/><use href="#r30" x="12"/><use href="#r30" x="18"/></svg></div>
<div class="tx" style="left:632px;top:359px;width:30px">0.00%<svg width="31" height="12" fill="#000"><use href="#r30" x="0"/><use href="#r2e" x="6"/><use href="#r30" x="12"/><use href="#r30" x="18"/><use href="#r25" x="24"/></svg></div>
<div class="tx" style="left:704px;top:359px;width:24px">0.00<svg width="25" height="12" fill="#000"><use href="#r30" x="0"/><use href="#r2e" x="6"/><use href="#r30" x="12"/><use href="#r30" x="18"/></svg></div>
<div class="tx" style="left:760px;top:359px;width:30px">0.00%<svg width="31" height="12" fill="#000"><use href="#r30" x="0"/><use href="#r2e" x="6"/><use href="#r30" x="12"/><use href="#r30" x="18"/><use href="#r25" x="24"/></svg></div>
<div class="tx" style="left:832px;top:359px;width:24px">0.00<svg width="25" height="12" fill="#000"><use href="#r30" x="0"/><use href="#r2e" x="6"/><use href="#r30" x="12"/><use href="#r30" x="18"/></svg></div>
<div class="tx" style="left:1000px;top:359px;width:42px">8115.32<svg width="43" height="12" fill="#000"><use href="#r38" x="0"/><use href="#r31" x="6"/><use href="#r31" x="12"/><use href="#r35" x="18"/><use href="#r2e" x="24"/><use href="#r33" x="30"/><use href="#r32" x="36"/></svg></div>
<div class="tx" style="left:1098px;top:359px;width:24px">0.00<svg width="25" height="12" fill="#000"><use href="#r30" x="0"/><use href="#r2e" x="6"/><use href="#r30" x="12"/><use href="#r30" x="18"/></svg></div>
<div style="position:absolute;left:881px;top:359px;width:11px;height:11px;border:1px solid #000;background:#fff"></div>
<div style="position:absolute;left:16px;top:357px;width:1px;height:16px;background:repeating-linear-gradient(#8c8c8c 0 1px,transparent 1px 2px)"></div>
<div style="position:absolute;left:33px;top:357px;width:1px;height:16px;background:repeating-linear-gradient(#8c8c8c 0 1px,transparent 1px 2px)"></div>
<div style="position:absolute;left:34px;top:364px;width:8px;height:1px;background:repeating-linear-gradient(90deg,#8c8c8c 0 1px,transparent 1px 2px)"></div>
<div style="position:absolute;left:0px;top:374px;width:14px;height:16px;background:#f0f0f0"></div>
<div style="position:absolute;left:0px;top:390px;width:14px;height:1px;background:#a8a8a8"></div>
<div style="position:absolute;left:14px;top:373px;width:1px;height:18px;background:#a0a0a0"></div>
<div style="position:absolute;left:43px;top:374px;width:1103px;height:16px;background:#ffffff"></div>
<div style="position:absolute;left:42px;top:373px;width:1px;height:18px;background:#a0a0a0"></div>
<div style="position:absolute;left:42px;top:390px;width:1104px;height:1px;background:#a0a0a0"></div>
<div style="position:absolute;left:83px;top:373px;width:1px;height:18px;background:#a0a0a0"></div>
<div style="position:absolute;left:115px;top:373px;width:1px;height:18px;background:#a0a0a0"></div>
<div style="position:absolute;left:401px;top:373px;width:1px;height:18px;background:#a0a0a0"></div>
<div style="position:absolute;left:455px;top:373px;width:1px;height:18px;background:#a0a0a0"></div>
<div style="position:absolute;left:535px;top:373px;width:1px;height:18px;background:#a0a0a0"></div>
<div style="position:absolute;left:603px;top:373px;width:1px;height:18px;background:#a0a0a0"></div>
<div style="position:absolute;left:664px;top:373px;width:1px;height:18px;background:#a0a0a0"></div>
<div style="position:absolute;left:730px;top:373px;width:1px;height:18px;background:#a0a0a0"></div>
<div style="position:absolute;left:792px;top:373px;width:1px;height:18px;background:#a0a0a0"></div>
<div style="position:absolute;left:858px;top:373px;width:1px;height:18px;background:#a0a0a0"></div>
<div style="position:absolute;left:914px;top:373px;width:1px;height:18px;background:#a0a0a0"></div>
<div style="position:absolute;left:976px;top:373px;width:1px;height:18px;background:#a0a0a0"></div>
<div style="position:absolute;left:1044px;top:373px;width:1px;height:18px;background:#a0a0a0"></div>
<div style="position:absolute;left:1124px;top:373px;width:1px;height:18px;background:#a0a0a0"></div>
<div class="tx" style="left:45px;top:376px;width:36px">010405<svg width="37" height="12" fill="#000"><use href="#r30" x="0"/><use href="#r31" x="6"/><use href="#r30" x="12"/><use href="#r34" x="18"/><use href="#r30" x="24"/><use href="#r35" x="30"/></svg></div>
<div class="tx" style="left:88px;top:376px;width:24px">清单<svg width="25" height="12" fill="#000"><use href="#r6e05" x="0"/><use href="#r5355" x="12"/></svg></div>
<div class="tx" style="left:118px;top:376px;width:84px">平板（水平板）<svg width="85" height="12" fill="#000"><use href="#r5e73" x="0"/><use href="#r677f" x="12"/><use href="#rff08" x="24"/><use href="#r6c34" x="36"/><use href="#r5e73" x="48"/><use href="#r677f" x="60"/><use href="#rff09" x="72"/></svg></div>
<div class="tx" style="left:423px;top:376px;width:12px">m3<svg width="13" height="12" fill="#000"><use href="#r6d" x="0"/><use href="#r33" x="6"/></svg></div>
<div class="tx" style="left:509px;top:376px;width:24px">8.37<svg width="25" height="12" fill="#000"><use href="#r38" x="0"/><use href="#r2e" x="6"/><use href="#r33" x="12"/><use href="#r37" x="18"/></svg></div>
<div class="tx" style="left:577px;top:376px;width:24px">0.00<svg width="25" height="12" fill="#000"><use href="#r30" x="0"/><use href="#r2e" x="6"/><use href="#r30" x="12"/><use href="#r30" x="18"/></svg></div>
<div class="tx" style="left:632px;top:376px;width:30px">0.00%<svg width="31" height="12" fill="#000"><use href="#r30" x="0"/><use href="#r2e" x="6"/><use href="#r30" x="12"/><use href="#r30" x="18"/><use href="#r25" x="24"/></svg></div>
<div class="tx" style="left:704px;top:376px;width:24px">0.00<svg width="25" height="12" fill="#000"><use href="#r30" x="0"/><use href="#r2e" x="6"/><use href="#r30" x="12"/><use href="#r30" x="18"/></svg></div>
<div class="tx" style="left:760px;top:376px;width:30px">0.00%<svg width="31" height="12" fill="#000"><use href="#r30" x="0"/><use href="#r2e" x="6"/><use href="#r30" x="12"/><use href="#r30" x="18"/><use href="#r25" x="24"/></svg></div>
<div class="tx" style="left:832px;top:376px;width:24px">0.00<svg width="25" height="12" fill="#000"><use href="#r30" x="0"/><use href="#r2e" x="6"/><use href="#r30" x="12"/><use href="#r30" x="18"/></svg></div>
<div class="tx" style="left:1000px;top:376px;width:42px">3492.30<svg width="43" height="12" fill="#000"><use href="#r33" x="0"/><use href="#r34" x="6"/><use href="#r39" x="12"/><use href="#r32" x="18"/><use href="#r2e" x="24"/><use href="#r33" x="30"/><use href="#r30" x="36"/></svg></div>
<div class="tx" style="left:1098px;top:376px;width:24px">0.00<svg width="25" height="12" fill="#000"><use href="#r30" x="0"/><use href="#r2e" x="6"/><use href="#r30" x="12"/><use href="#r30" x="18"/></svg></div>
<div style="position:absolute;left:881px;top:376px;width:11px;height:11px;border:1px solid #000;background:#fff"></div>
<div style="position:absolute;left:16px;top:373px;width:1px;height:17px;background:repeating-linear-gradient(#8c8c8c 0 1px,transparent 1px 2px)"></div>
<div style="position:absolute;left:33px;top:373px;width:1px;height:17px;background:repeating-linear-gradient(#8c8c8c 0 1px,transparent 1px 2px)"></div>
<div style="position:absolute;left:34px;top:381px;width:8px;height:1px;background:repeating-linear-gradient(90deg,#8c8c8c 0 1px,transparent 1px 2px)"></div>
<div style="position:absolute;left:0px;top:391px;width:14px;height:16px;background:#f0f0f0"></div>
<div style="position:absolute;left:0px;top:407px;width:14px;height:1px;background:#a8a8a8"></div>
<div style="position:absolute;left:14px;top:390px;width:1px;height:18px;background:#a0a0a0"></div>
<div style="position:absolute;left:43px;top:391px;width:1103px;height:16px;background:#ffffff"></div>
<div style="position:absolute;left:42px;top:390px;width:1px;height:18px;background:#a0a0a0"></div>
<div style="position:absolute;left:42px;top:407px;width:1104px;height:1px;background:#a0a0a0"></div>
<div style="position:absolute;left:83px;top:390px;width:1px;height:18px;background:#a0a0a0"></div>
<div style="position:absolute;left:115px;top:390px;width:1px;height:18px;background:#a0a0a0"></div>
<div style="position:absolute;left:401px;top:390px;width:1px;height:18px;background:#a0a0a0"></div>
<div style="position:absolute;left:455px;top:390px;width:1px;height:18px;background:#a0a0a0"></div>
<div style="position:absolute;left:535px;top:390px;width:1px;height:18px;background:#a0a0a0"></div>
<div style="position:absolute;left:603px;top:390px;width:1px;height:18px;background:#a0a0a0"></div>
<div style="position:absolute;left:664px;top:390px;width:1px;height:18px;background:#a0a0a0"></div>
<div style="position:absolute;left:730px;top:390px;width:1px;height:18px;background:#a0a0a0"></div>
<div style="position:absolute;left:792px;top:390px;width:1px;height:18px;background:#a0a0a0"></div>
<div style="position:absolute;left:858px;top:390px;width:1px;height:18px;background:#a0a0a0"></div>
<div style="position:absolute;left:914px;top:390px;width:1px;height:18px;background:#a0a0a0"></div>
<div style="position:absolute;left:976px;top:390px;width:1px;height:18px;background:#a0a0a0"></div>
<div style="position:absolute;left:1044px;top:390px;width:1px;height:18px;background:#a0a0a0"></div>
<div style="position:absolute;left:1124px;top:390px;width:1px;height:18px;background:#a0a0a0"></div>
<div class="tx" style="left:45px;top:393px;width:36px">010405<svg width="37" height="12" fill="#000"><use href="#r30" x="0"/><use href="#r31" x="6"/><use href="#r30" x="12"/><use href="#r34" x="18"/><use href="#r30" x="24"/><use href="#r35" x="30"/></svg></div>
<div class="tx" style="left:88px;top:393px;width:24px">清单<svg width="25" height="12" fill="#000"><use href="#r6e05" x="0"/><use href="#r5355" x="12"/></svg></div>
<div class="tx" style="left:118px;top:393px;width:84px">平板（坡屋板）<svg width="85" height="12" fill="#000"><use href="#r5e73" x="0"/><use href="#r677f" x="12"/><use href="#rff08" x="24"/><use href="#r5761" x="36"/><use href="#r5c4b" x="48"/><use href="#r677f" x="60"/><use href="#rff09" x="72"/></svg></div>
<div class="tx" style="left:423px;top:393px;width:12px">m3<svg width="13" height="12" fill="#000"><use href="#r6d" x="0"/><use href="#r33" x="6"/></svg></div>
<div class="tx" style="left:503px;top:393px;width:30px">59.02<svg width="31" height="12" fill="#000"><use href="#r35" x="0"/><use href="#r39" x="6"/><use href="#r2e" x="12"/><use href="#r30" x="18"/><use href="#r32" x="24"/></svg></div>
<div class="tx" style="left:577px;top:393px;width:24px">0.00<svg width="25" height="12" fill="#000"><use href="#r30" x="0"/><use href="#r2e" x="6"/><use href="#r30" x="12"/><use href="#r30" x="18"/></svg></div>
<div class="tx" style="left:632px;top:393px;width:30px">0.00%<svg width="31" height="12" fill="#000"><use href="#r30" x="0"/><use href="#r2e" x="6"/><use href="#r30" x="12"/><use href="#r30" x="18"/><use href="#r25" x="24"/></svg></div>
<div class="tx" style="left:704px;top:393px;width:24px">0.00<svg width="25" height="12" fill="#000"><use href="#r30" x="0"/><use href="#r2e" x="6"/><use href="#r30" x="12"/><use href="#r30" x="18"/></svg></div>
<div class="tx" style="left:760px;top:393px;width:30px">0.00%<svg width="31" height="12" fill="#000"><use href="#r30" x="0"/><use href="#r2e" x="6"/><use href="#r30" x="12"/><use href="#r30" x="18"/><use href="#r25" x="24"/></svg></div>
<div class="tx" style="left:832px;top:393px;width:24px">0.00<svg width="25" height="12" fill="#000"><use href="#r30" x="0"/><use href="#r2e" x="6"/><use href="#r30" x="12"/><use href="#r30" x="18"/></svg></div>
<div class="tx" style="left:994px;top:393px;width:48px">24625.50<svg width="49" height="12" fill="#000"><use href="#r32" x="0"/><use href="#r34" x="6"/><use href="#r36" x="12"/><use href="#r32" x="18"/><use href="#r35" x="24"/><use href="#r2e" x="30"/><use href="#r35" x="36"/><use href="#r30" x="42"/></svg></div>
<div class="tx" style="left:1098px;top:393px;width:24px">0.00<svg width="25" height="12" fill="#000"><use href="#r30" x="0"/><use href="#r2e" x="6"/><use href="#r30" x="12"/><use href="#r30" x="18"/></svg></div>
<div style="position:absolute;left:881px;top:393px;width:11px;height:11px;border:1px solid #000;background:#fff"></div>
<div style="position:absolute;left:16px;top:391px;width:1px;height:16px;background:repeating-linear-gradient(#8c8c8c 0 1px,transparent 1px 2px)"></div>
<div style="position:absolute;left:33px;top:391px;width:1px;height:16px;background:repeating-linear-gradient(#8c8c8c 0 1px,transparent 1px 2px)"></div>
<div style="position:absolute;left:34px;top:398px;width:8px;height:1px;background:repeating-linear-gradient(90deg,#8c8c8c 0 1px,transparent 1px 2px)"></div>
<div style="position:absolute;left:0px;top:408px;width:14px;height:16px;background:#f0f0f0"></div>
<div style="position:absolute;left:0px;top:424px;width:14px;height:1px;background:#a8a8a8"></div>
<div style="position:absolute;left:14px;top:407px;width:1px;height:18px;background:#a0a0a0"></div>
<div style="position:absolute;left:43px;top:408px;width:1103px;height:16px;background:#ffffff"></div>
<div style="position:absolute;left:42px;top:407px;width:1px;height:18px;background:#a0a0a0"></div>
<div style="position:absolute;left:42px;top:424px;width:1104px;height:1px;background:#a0a0a0"></div>
<div style="position:absolute;left:83px;top:407px;width:1px;height:18px;background:#a0a0a0"></div>
<div style="position:absolute;left:115px;top:407px;width:1px;height:18px;background:#a0a0a0"></div>
<div style="position:absolute;left:401px;top:407px;width:1px;height:18px;background:#a0a0a0"></div>
<div style="position:absolute;left:455px;top:407px;width:1px;height:18px;background:#a0a0a0"></div>
<div style="position:absolute;left:535px;top:407px;width:1px;height:18px;background:#a0a0a0"></div>
<div style="position:absolute;left:603px;top:407px;width:1px;height:18px;background:#a0a0a0"></div>
<div style="position:absolute;left:664px;top:407px;width:1px;height:18px;background:#a0a0a0"></div>
<div style="position:absolute;left:730px;top:407px;width:1px;height:18px;background:#a0a0a0"></div>
<div style="position:absolute;left:792px;top:407px;width:1px;height:18px;background:#a0a0a0"></div>
<div style="position:absolute;left:858px;top:407px;width:1px;height:18px;background:#a0a0a0"></div>
<div style="position:absolute;left:914px;top:407px;width:1px;height:18px;background:#a0a0a0"></div>
<div style="position:absolute;left:976px;top:407px;width:1px;height:18px;background:#a0a0a0"></div>
<div style="position:absolute;left:1044px;top:407px;width:1px;height:18px;background:#a0a0a0"></div>
<div style="position:absolute;left:1124px;top:407px;width:1px;height:18px;background:#a0a0a0"></div>
<div class="tx" style="left:45px;top:410px;width:36px">010405<svg width="37" height="12" fill="#000"><use href="#r30" x="0"/><use href="#r31" x="6"/><use href="#r30" x="12"/><use href="#r34" x="18"/><use href="#r30" x="24"/><use href="#r35" x="30"/></svg></div>
<div class="tx" style="left:88px;top:410px;width:24px">清单<svg width="25" height="12" fill="#000"><use href="#r6e05" x="0"/><use href="#r5355" x="12"/></svg></div>
<div class="tx" style="left:118px;top:410px;width:72px">天沟、挑檐板<svg width="73" height="12" fill="#000"><use href="#r5929" x="0"/><use href="#r6c9f" x="12"/><use href="#r3001" x="24"/><use href="#r6311" x="36"/><use href="#r6a90" x="48"/><use href="#r677f" x="60"/></svg></div>
<div class="tx" style="left:423px;top:410px;width:12px">m3<svg width="13" height="12" fill="#000"><use href="#r6d" x="0"/><use href="#r33" x="6"/></svg></div>
<div class="tx" style="left:503px;top:410px;width:30px">19.40<svg width="31" height="12" fill="#000"><use href="#r31" x="0"/><use href="#r39" x="6"/><use href="#r2e" x="12"/><use href="#r34" x="18"/><use href="#r30" x="24"/></svg></div>
<div class="tx" style="left:577px;top:410px;width:24px">0.00<svg width="25" height="12" fill="#000"><use href="#r30" x="0"/><use href="#r2e" x="6"/><use href="#r30" x="12"/><use href="#r30" x="18"/></svg></div>
<div class="tx" style="left:632px;top:410px;width:30px">0.00%<svg width="31" height="12" fill="#000"><use href="#r30" x="0"/><use href="#r2e" x="6"/><use href="#r30" x="12"/><use href="#r30" x="18"/><use href="#r25" x="24"/></svg></div>
<div class="tx" style="left:704px;top:410px;width:24px">0.00<svg width="25" height="12" fill="#000"><use href="#r30" x="0"/><use href="#r2e" x="6"/><use href="#r30" x="12"/><use href="#r30" x="18"/></svg></div>
<div class="tx" style="left:760px;top:410px;width:30px">0.00%<svg width="31" height="12" fill="#000"><use href="#r30" x="0"/><use href="#r2e" x="6"/><use href="#r30" x="12"/><use href="#r30" x="18"/><use href="#r25" x="24"/></svg></div>
<div class="tx" style="left:832px;top:410px;width:24px">0.00<svg width="25" height="12" fill="#000"><use href="#r30" x="0"/><use href="#r2e" x="6"/><use href="#r30" x="12"/><use href="#r30" x="18"/></svg></div>
<div class="tx" style="left:1000px;top:410px;width:42px">8094.46<svg width="43" height="12" fill="#000"><use href="#r38" x="0"/><use href="#r30" x="6"/><use href="#r39" x="12"/><use href="#r34" x="18"/><use href="#r2e" x="24"/><use href="#r34" x="30"/><use href="#r36" x="36"/></svg></div>
<div class="tx" style="left:1098px;top:410px;width:24px">0.00<svg width="25" height="12" fill="#000"><use href="#r30" x="0"/><use href="#r2e" x="6"/><use href="#r30" x="12"/><use href="#r30" x="18"/></svg></div>
<div style="position:absolute;left:881px;top:410px;width:11px;height:11px;border:1px solid #000;background:#fff"></div>
<div style="position:absolute;left:16px;top:407px;width:1px;height:17px;background:repeating-linear-gradient(#8c8c8c 0 1px,transparent 1px 2px)"></div>
<div style="position:absolute;left:33px;top:407px;width:1px;height:17px;background:repeating-linear-gradient(#8c8c8c 0 1px,transparent 1px 2px)"></div>
<div style="position:absolute;left:34px;top:415px;width:8px;height:1px;background:repeating-linear-gradient(90deg,#8c8c8c 0 1px,transparent 1px 2px)"></div>
</div>
<div style="position:absolute;left:1135px;top:85px;width:21px;height:17px;overflow:hidden">
<div class="tx" style="left:3px;top:2px;width:72px">实际完成产值<svg width="73" height="12" fill="#000"><use href="#r5b9e" x="0"/><use href="#r9645" x="12"/><use href="#r5b8c" x="24"/><use href="#r6210" x="36"/><use href="#r4ea7" x="48"/><use href="#r503c" x="60"/></svg></div>
</div>
<div style="position:absolute;left:1156px;top:85px;width:17px;height:437px;background:linear-gradient(90deg,#e6e6e6,#f2f2f2)"></div>
<div style="position:absolute;left:1161px;top:92px;width:0;height:0;border-left:4px solid transparent;border-right:4px solid transparent;border-bottom:4px solid #555"></div>
<div style="position:absolute;left:1157px;top:103px;width:15px;height:122px;border:1px solid #9a9a9a;border-radius:2px;background:linear-gradient(90deg,#f4f4f4,#e2e2e2 60%,#cfcfcf)"></div>
<div style="position:absolute;left:1161px;top:160px;width:7px;height:1px;background:#444"></div>
<div style="position:absolute;left:1161px;top:163px;width:7px;height:1px;background:#444"></div>
<div style="position:absolute;left:1161px;top:166px;width:7px;height:1px;background:#444"></div>
<div style="position:absolute;left:1161px;top:512px;width:0;height:0;border-left:4px solid transparent;border-right:4px solid transparent;border-top:4px solid #555"></div>
<div style="position:absolute;left:10px;top:522px;width:1146px;height:17px;background:linear-gradient(#e6e6e6,#f2f2f2)"></div>
<div style="position:absolute;left:16px;top:526px;width:0;height:0;border-top:4px solid transparent;border-bottom:4px solid transparent;border-right:4px solid #555"></div>
<div style="position:absolute;left:43px;top:523px;width:715px;height:15px;border:1px solid #9a9a9a;border-radius:2px;background:linear-gradient(#f4f4f4,#e2e2e2 50%,#cfcfcf)"></div>
<div style="position:absolute;left:396px;top:527px;width:1px;height:7px;background:#444"></div>
<div style="position:absolute;left:399px;top:527px;width:1px;height:7px;background:#444"></div>
<div style="position:absolute;left:402px;top:527px;width:1px;height:7px;background:#444"></div>
<div style="position:absolute;left:1146px;top:526px;width:0;height:0;border-top:4px solid transparent;border-bottom:4px solid transparent;border-left:4px solid #555"></div>
<div style="position:absolute;left:1156px;top:522px;width:17px;height:17px;background:#f0f0f0"></div>
<div style="position:absolute;left:10px;top:539px;width:1164px;height:1px;background:#a0a0a0"></div>
<div style="position:absolute;left:8px;top:540px;width:1166px;height:33px;border-left:1px solid #a0a0a0;border-right:1px solid #a0a0a0;border-bottom:1px solid #a0a0a0;background:linear-gradient(#fefefe,#e4e4e4)"></div>
<div class="tx" style="left:17px;top:550px;width:72px">颜色计算方式<svg width="73" height="12" fill="#000"><use href="#r989c" x="0"/><use href="#r8272" x="12"/><use href="#r8ba1" x="24"/><use href="#r7b97" x="36"/><use href="#r65b9" x="48"/><use href="#r5f0f" x="60"/></svg></div>
<div class="cmbg" style="left:93px;top:546px;width:89px;height:19px"></div>
<div class="tx" style="left:96px;top:550px;width:60px">形象比预算<svg width="61" height="12" fill="#000"><use href="#r5f62" x="0"/><use href="#r8c61" x="12"/><use href="#r6bd4" x="24"/><use href="#r9884" x="36"/><use href="#r7b97" x="48"/></svg></div>
<div style="position:absolute;left:162px;top:548px;width:1px;height:15px;background:#fafafa"></div>
<div class="arr" style="left:168px;top:554px"></div>
<div class="tx" style="left:185px;top:550px;width:48px">没有填报<svg width="49" height="12" fill="#000"><use href="#r6ca1" x="0"/><use href="#r6709" x="12"/><use href="#r586b" x="24"/><use href="#r62a5" x="36"/></svg></div>
<div class="inp" style="left:239px;top:546px;width:49px;height:19px;background:#fff;border-color:#c9d0d8"></div>
<div class="tx" style="left:273px;top:550px;width:12px">59<svg width="13" height="12" fill="#000"><use href="#r35" x="0"/><use href="#r39" x="6"/></svg></div>
<div class="tx" style="left:294px;top:550px;width:48px">部分完成<svg width="49" height="12" fill="#000"><use href="#r90e8" x="0"/><use href="#r5206" x="12"/><use href="#r5b8c" x="24"/><use href="#r6210" x="36"/></svg></div>
<div class="inp" style="left:346px;top:546px;width:48px;height:19px;background:#ffd5d5;border-color:#c9d0d8"></div>
<div class="tx" style="left:385px;top:550px;width:6px">2<svg width="7" height="12" fill="#000"><use href="#r32" x="0"/></svg></div>
<div class="tx" style="left:403px;top:550px;width:48px">全部完成<svg width="49" height="12" fill="#000"><use href="#r5168" x="0"/><use href="#r90e8" x="12"/><use href="#r5b8c" x="24"/><use href="#r6210" x="36"/></svg></div>
<div class="inp" style="left:455px;top:546px;width:49px;height:19px;background:#80ff80;border-color:#c9d0d8"></div>
<div class="tx" style="left:495px;top:550px;width:6px">4<svg width="7" height="12" fill="#000"><use href="#r34" x="0"/></svg></div>
<div class="tx" style="left:513px;top:550px;width:48px">超量完成<svg width="49" height="12" fill="#000"><use href="#r8d85" x="0"/><use href="#r91cf" x="12"/><use href="#r5b8c" x="24"/><use href="#r6210" x="36"/></svg></div>
<div class="inp" style="left:567px;top:546px;width:49px;height:19px;background:#ffff80;border-color:#c9d0d8"></div>
<div class="tx" style="left:607px;top:550px;width:6px">2<svg width="7" height="12" fill="#000"><use href="#r32" x="0"/></svg></div>
<div class="tx" style="left:629px;top:544px;width:36px">累计预<svg width="37" height="12" fill="#000"><use href="#r7d2f" x="0"/><use href="#r8ba1" x="12"/><use href="#r9884" x="24"/></svg></div>
<div class="tx" style="left:629px;top:556px;width:36px">算产值<svg width="37" height="12" fill="#000"><use href="#r7b97" x="0"/><use href="#r4ea7" x="12"/><use href="#r503c" x="24"/></svg></div>
<div class="inp" style="left:669px;top:546px;width:73px;height:19px;background:#ffffe6;border-color:#c9d0d8"></div>
<div class="tx" style="left:679px;top:550px;width:60px">1261440.20<svg width="61" height="12" fill="#000"><use href="#r31" x="0"/><use href="#r32" x="6"/><use href="#r36" x="12"/><use href="#r31" x="18"/><use href="#r34" x="24"/><use href="#r34" x="30"/><use href="#r30" x="36"/><use href="#r2e" x="42"/><use href="#r32" x="48"/><use href="#r30" x="54"/></svg></div>
<div class="tx" style="left:753px;top:544px;width:48px">累计完成<svg width="49" height="12" fill="#000"><use href="#r7d2f" x="0"/><use href="#r8ba1" x="12"/><use href="#r5b8c" x="24"/><use href="#r6210" x="36"/></svg></div>
<div class="tx" style="left:753px;top:556px;width:48px">形象产值<svg width="49" height="12" fill="#000"><use href="#r5f62" x="0"/><use href="#r8c61" x="12"/><use href="#r4ea7" x="24"/><use href="#r503c" x="36"/></svg></div>
<div class="inp" style="left:805px;top:546px;width:72px;height:19px;background:#ffffe6;border-color:#c9d0d8"></div>
<div class="tx" style="left:820px;top:550px;width:54px">208435.27<svg width="55" height="12" fill="#000"><use href="#r32" x="0"/><use href="#r30" x="6"/><use href="#r38" x="12"/><use href="#r34" x="18"/><use href="#r33" x="24"/><use href="#r35" x="30"/><use href="#r2e" x="36"/><use href="#r32" x="42"/><use href="#r37" x="48"/></svg></div>
<div class="tx" style="left:881px;top:544px;width:48px">累计实际<svg width="49" height="12" fill="#000"><use href="#r7d2f" x="0"/><use href="#r8ba1" x="12"/><use href="#r5b9e" x="24"/><use href="#r9645" x="36"/></svg></div>
<div class="tx" style="left:881px;top:556px;width:48px">完成产值<svg width="49" height="12" fill="#000"><use href="#r5b8c" x="0"/><use href="#r6210" x="12"/><use href="#r4ea7" x="24"/><use href="#r503c" x="36"/></svg></div>
<div class="inp" style="left:937px;top:546px;width:72px;height:19px;background:#ffffe6;border-color:#c9d0d8"></div>
<div class="tx" style="left:952px;top:550px;width:54px">170179.19<svg width="55" height="12" fill="#000"><use href="#r31" x="0"/><use href="#r37" x="6"/><use href="#r30" x="12"/><use href="#r31" x="18"/><use href="#r37" x="24"/><use href="#r39" x="30"/><use href="#r2e" x="36"/><use href="#r31" x="42"/><use href="#r39" x="48"/></svg></div>
<div style="position:absolute;left:8px;top:572px;width:1px;height:7px;background:#a0a0a0"></div>
<div style="position:absolute;left:1173px;top:572px;width:1px;height:7px;background:#a0a0a0"></div>
<div style="position:absolute;left:9px;top:540px;width:1px;height:32px;background:#fff"></div>
<div style="position:absolute;left:10px;top:574px;width:130px;height:1px;background:#9aa8b8"></div>
<div style="position:absolute;left:10px;top:575px;width:130px;height:4px;background:#fdfdfd;border-top:3px solid #f09a1a;border-radius:3px 3px 0 0"></div>
<div style="position:absolute;left:141px;top:576px;width:100px;height:3px;border-top:1px solid #a0a0a0;border-left:1px solid #a0a0a0;border-right:1px solid #a0a0a0;border-radius:3px 3px 0 0;background:#f4f4f4"></div>
<div style="position:absolute;left:243px;top:576px;width:78px;height:3px;border-top:1px solid #a0a0a0;border-left:1px solid #a0a0a0;border-right:1px solid #a0a0a0;border-radius:3px 3px 0 0;background:#f4f4f4"></div>
<div style="position:absolute;left:0px;top:277px;width:8px;height:237px;border:1px solid #8a8a8a;border-left:none;background:linear-gradient(90deg,#f0f0f0 0,#f0f0f0 2px,#c6dcee 3px,#9cbfdc 6px,#fff 7px)"></div>
<svg style="position:absolute;left:1px;top:392px" width="6" height="9"><path d="M5,1 L1.5,4.5 L5,8" fill="none" stroke="#000" stroke-width="1.4"/></svg>
</body></html>
